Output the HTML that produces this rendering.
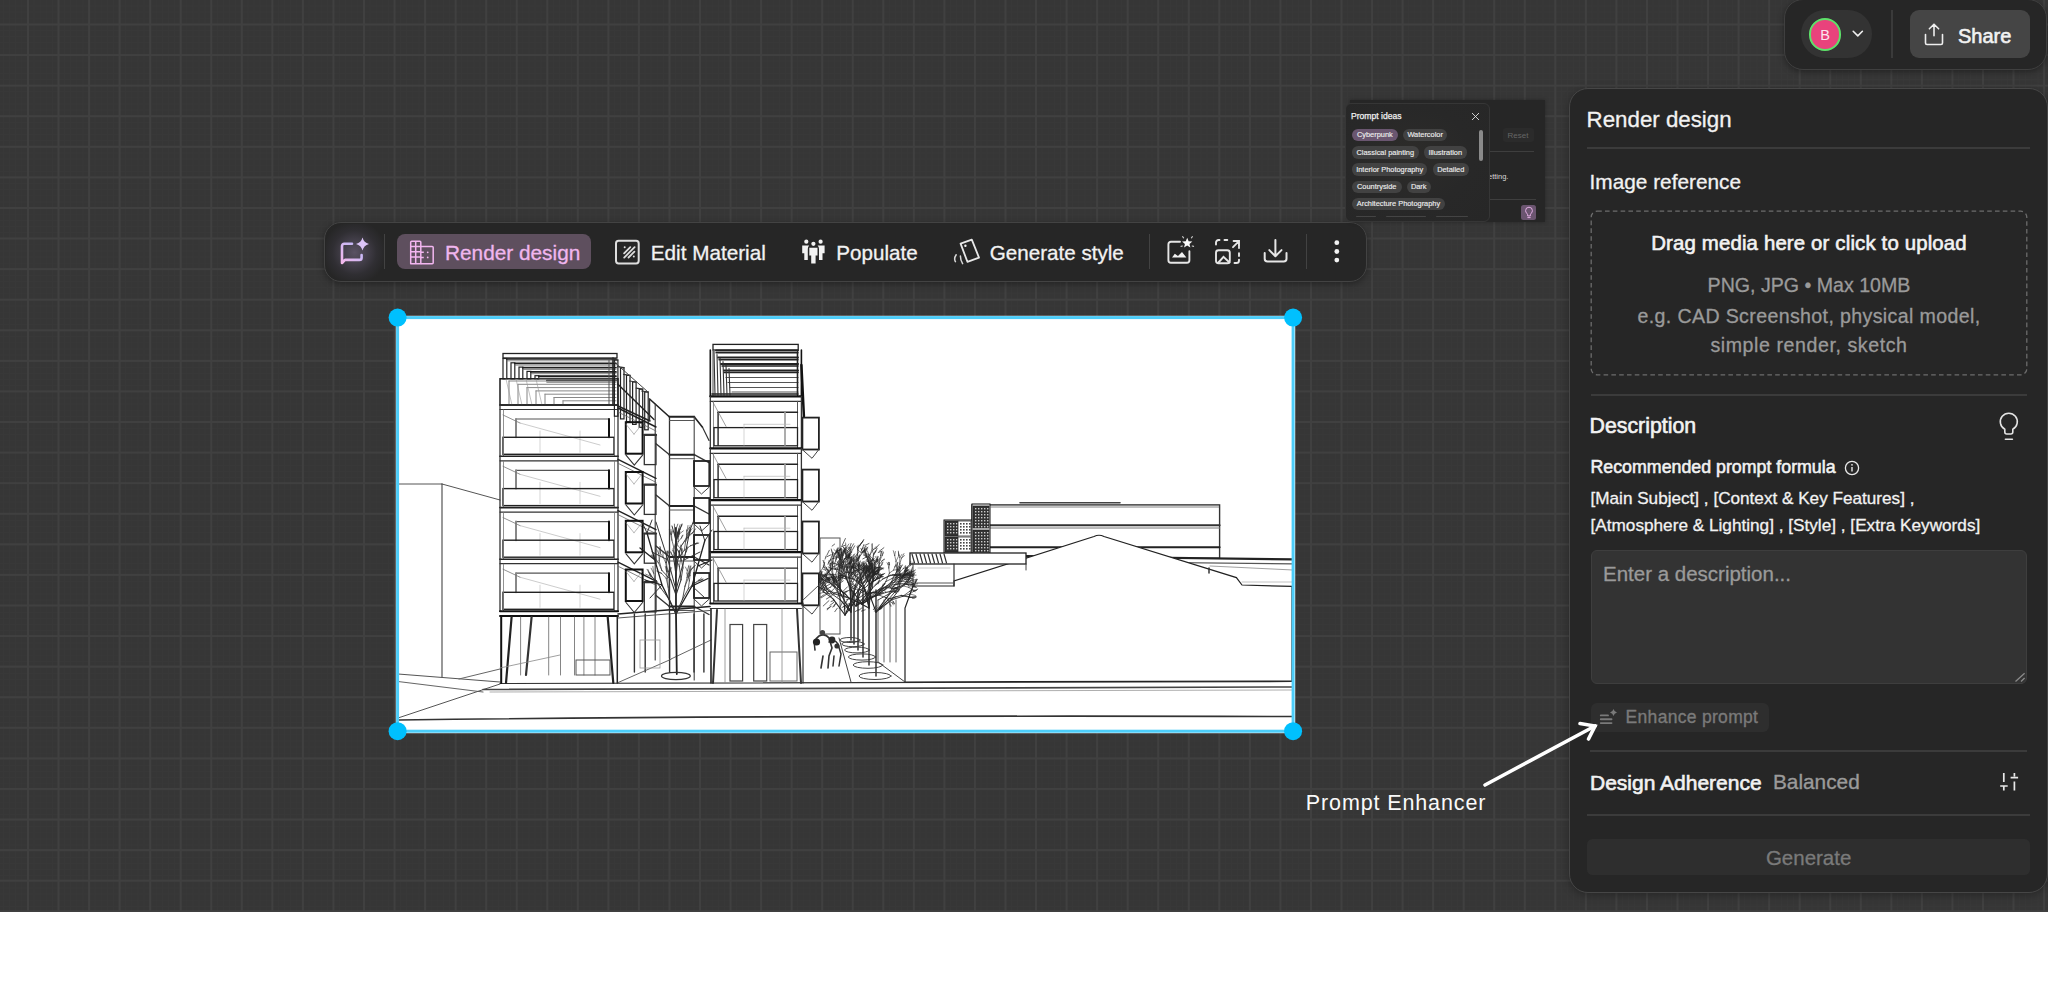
<!DOCTYPE html>
<html><head><meta charset="utf-8">
<style>
html,body{margin:0;padding:0;}
body{width:2048px;height:999px;position:relative;overflow:hidden;background:#fff;font-family:"Liberation Sans",sans-serif;}
.abs{position:absolute;}
#canvas{position:absolute;left:0;top:0;width:2048px;height:912px;background-color:#363636;
 background-image:linear-gradient(to right,#404040 0,#404040 2px,transparent 2px),linear-gradient(to bottom,#404040 0,#404040 2px,transparent 2px),linear-gradient(to right,#383838 0,#383838 1px,transparent 1px),linear-gradient(to bottom,#383838 0,#383838 1px,transparent 1px);
 background-size:30.546875px 30.578125px,30.546875px 30.578125px,6.109375px 6.109375px,6.109375px 6.125px;background-position:27px 23.5px,27px 23.5px,27.5px 23.9px,27.5px 23.9px;}
.t{position:absolute;white-space:nowrap;line-height:1;}
.w{color:#f2f2f2;}
.g{color:#9a9a9a;}
.div{position:absolute;height:2px;background:#3b3b3b;}
</style></head><body>
<div id="canvas"></div>



<!-- image -->
<div class="abs" style="left:395.6px;top:315.6px;width:899.5px;height:417.6px;background:#fff;box-shadow:0 0 0 0.6px rgba(200,200,200,.5)"></div>
<svg class="abs" style="left:0;top:0" width="2048" height="999" viewBox="0 0 2048 999" stroke-linecap="round">
<g>
<line x1="397.0" y1="484.0" x2="442.0" y2="484.0" stroke="#555" stroke-width="1"/>
<line x1="442.0" y1="484.0" x2="500.0" y2="500.0" stroke="#555" stroke-width="1"/>
<line x1="442.0" y1="484.0" x2="442.0" y2="677.0" stroke="#444" stroke-width="1.1"/>
<line x1="398.0" y1="674.0" x2="500.0" y2="682.0" stroke="#555" stroke-width="1.2"/>
<line x1="398.0" y1="681.5" x2="483.0" y2="692.0" stroke="#666" stroke-width="1.2"/>
<line x1="398.0" y1="718.0" x2="500.0" y2="684.0" stroke="#555" stroke-width="1"/>
<line x1="459.0" y1="679.0" x2="500.0" y2="669.0" stroke="#666" stroke-width="1"/>
<line x1="500.0" y1="683.5" x2="1293.0" y2="681.5" stroke="#333" stroke-width="1.2"/>
<line x1="483.0" y1="689.5" x2="1293.0" y2="687.0" stroke="#444" stroke-width="1.6"/>
<line x1="490.0" y1="692.0" x2="1293.0" y2="690.0" stroke="#999" stroke-width="0.8"/>
<path d="M398 720 Q 800 715 1292 716.5" stroke="#333" stroke-width="1.6" fill="none"/>
<rect x="503.0" y="353.5" width="114.0" height="4.5" stroke="#222" stroke-width="1.3" fill="none"/>
<rect x="500.0" y="378.8" width="118.0" height="26.2" stroke="#1a1a1a" stroke-width="1.5" fill="none"/>
<rect x="503.0" y="358.5" width="3.8" height="20.3" stroke="#222" stroke-width="1.2" fill="none"/>
<line x1="506.8" y1="359.0" x2="616.0" y2="359.0" stroke="#1e1e1e" stroke-width="1.7"/>
<line x1="506.8" y1="360.8" x2="616.0" y2="360.8" stroke="#666" stroke-width="0.8"/>
<rect x="511.0" y="362.8" width="3.8" height="16.0" stroke="#222" stroke-width="1.2" fill="none"/>
<line x1="514.8" y1="363.3" x2="616.0" y2="363.3" stroke="#1e1e1e" stroke-width="1.7"/>
<line x1="514.8" y1="365.1" x2="616.0" y2="365.1" stroke="#666" stroke-width="0.8"/>
<rect x="519.0" y="367.1" width="3.8" height="11.7" stroke="#222" stroke-width="1.2" fill="none"/>
<line x1="522.8" y1="367.6" x2="616.0" y2="367.6" stroke="#1e1e1e" stroke-width="1.7"/>
<line x1="522.8" y1="369.4" x2="616.0" y2="369.4" stroke="#666" stroke-width="0.8"/>
<rect x="527.0" y="371.4" width="3.8" height="7.4" stroke="#222" stroke-width="1.2" fill="none"/>
<line x1="530.8" y1="371.9" x2="616.0" y2="371.9" stroke="#1e1e1e" stroke-width="1.7"/>
<line x1="530.8" y1="373.7" x2="616.0" y2="373.7" stroke="#666" stroke-width="0.8"/>
<rect x="535.0" y="375.7" width="3.8" height="3.1" stroke="#222" stroke-width="1.2" fill="none"/>
<line x1="538.8" y1="376.2" x2="616.0" y2="376.2" stroke="#1e1e1e" stroke-width="1.7"/>
<line x1="538.8" y1="378.0" x2="616.0" y2="378.0" stroke="#666" stroke-width="0.8"/>
<rect x="543.0" y="380.0" width="3.8" height="0.0" stroke="#222" stroke-width="1.2" fill="none"/>
<line x1="546.8" y1="380.5" x2="616.0" y2="380.5" stroke="#1e1e1e" stroke-width="1.7"/>
<line x1="546.8" y1="382.3" x2="616.0" y2="382.3" stroke="#666" stroke-width="0.8"/>
<line x1="509.0" y1="381.0" x2="509.0" y2="405.0" stroke="#777" stroke-width="0.9"/>
<line x1="509.0" y1="381.0" x2="616.0" y2="381.0" stroke="#888" stroke-width="1.0"/>
<line x1="518.0" y1="384.3" x2="518.0" y2="405.0" stroke="#777" stroke-width="0.9"/>
<line x1="518.0" y1="384.3" x2="616.0" y2="384.3" stroke="#888" stroke-width="1.0"/>
<line x1="527.0" y1="387.6" x2="527.0" y2="405.0" stroke="#777" stroke-width="0.9"/>
<line x1="527.0" y1="387.6" x2="616.0" y2="387.6" stroke="#888" stroke-width="1.0"/>
<line x1="536.0" y1="390.9" x2="536.0" y2="405.0" stroke="#777" stroke-width="0.9"/>
<line x1="536.0" y1="390.9" x2="616.0" y2="390.9" stroke="#888" stroke-width="1.0"/>
<line x1="545.0" y1="394.2" x2="545.0" y2="405.0" stroke="#777" stroke-width="0.9"/>
<line x1="545.0" y1="394.2" x2="616.0" y2="394.2" stroke="#888" stroke-width="1.0"/>
<line x1="554.0" y1="397.5" x2="554.0" y2="405.0" stroke="#777" stroke-width="0.9"/>
<line x1="554.0" y1="397.5" x2="616.0" y2="397.5" stroke="#888" stroke-width="1.0"/>
<line x1="563.0" y1="400.8" x2="563.0" y2="405.0" stroke="#777" stroke-width="0.9"/>
<line x1="563.0" y1="400.8" x2="616.0" y2="400.8" stroke="#888" stroke-width="1.0"/>
<line x1="613.0" y1="358.0" x2="613.0" y2="405.0" stroke="#222" stroke-width="1.6"/>
<line x1="609.0" y1="360.0" x2="609.0" y2="405.0" stroke="#555" stroke-width="1.0"/>
<line x1="506.0" y1="379.0" x2="512.0" y2="405.0" stroke="#999" stroke-width="0.6"/>
<line x1="516.0" y1="379.0" x2="522.0" y2="405.0" stroke="#999" stroke-width="0.6"/>
<line x1="526.0" y1="379.0" x2="532.0" y2="405.0" stroke="#999" stroke-width="0.6"/>
<line x1="536.0" y1="379.0" x2="542.0" y2="405.0" stroke="#999" stroke-width="0.6"/>
<line x1="500.0" y1="405.0" x2="618.0" y2="405.0" stroke="#222" stroke-width="1.6"/>
<line x1="500.0" y1="409.5" x2="618.0" y2="409.5" stroke="#333" stroke-width="1.2"/>
<line x1="516.0" y1="419.0" x2="609.0" y2="419.0" stroke="#555" stroke-width="1.2"/>
<line x1="516.0" y1="419.0" x2="516.0" y2="437.3" stroke="#888" stroke-width="2"/>
<line x1="609.0" y1="419.0" x2="609.0" y2="437.3" stroke="#111" stroke-width="2"/>
<line x1="503.0" y1="415.0" x2="520.0" y2="423.0" stroke="#777" stroke-width="0.8"/>
<line x1="520.0" y1="423.0" x2="600.0" y2="445.0" stroke="#aaa" stroke-width="0.6"/>
<line x1="580.0" y1="431.0" x2="580.0" y2="452.3" stroke="#b8b8b8" stroke-width="0.6"/>
<line x1="540.0" y1="431.0" x2="540.0" y2="452.3" stroke="#b8b8b8" stroke-width="0.6"/>
<rect x="503.0" y="437.3" width="111.0" height="17.0" stroke="#222" stroke-width="1.4" fill="none"/>
<line x1="500.0" y1="405.0" x2="500.0" y2="456.3" stroke="#333" stroke-width="1.3"/>
<line x1="618.0" y1="405.0" x2="618.0" y2="456.3" stroke="#333" stroke-width="1.3"/>
<line x1="503.5" y1="410.0" x2="503.5" y2="456.3" stroke="#777" stroke-width="0.8"/>
<line x1="614.5" y1="410.0" x2="614.5" y2="456.3" stroke="#777" stroke-width="0.8"/>
<line x1="500.0" y1="456.3" x2="618.0" y2="456.3" stroke="#222" stroke-width="1.6"/>
<line x1="500.0" y1="460.8" x2="618.0" y2="460.8" stroke="#333" stroke-width="1.2"/>
<line x1="516.0" y1="470.3" x2="609.0" y2="470.3" stroke="#555" stroke-width="1.2"/>
<line x1="516.0" y1="470.3" x2="516.0" y2="488.6" stroke="#888" stroke-width="2"/>
<line x1="609.0" y1="470.3" x2="609.0" y2="488.6" stroke="#111" stroke-width="2"/>
<line x1="503.0" y1="466.3" x2="520.0" y2="474.3" stroke="#777" stroke-width="0.8"/>
<line x1="520.0" y1="474.3" x2="600.0" y2="496.3" stroke="#aaa" stroke-width="0.6"/>
<line x1="580.0" y1="482.3" x2="580.0" y2="503.6" stroke="#b8b8b8" stroke-width="0.6"/>
<line x1="540.0" y1="482.3" x2="540.0" y2="503.6" stroke="#b8b8b8" stroke-width="0.6"/>
<rect x="503.0" y="488.6" width="111.0" height="17.0" stroke="#222" stroke-width="1.4" fill="none"/>
<line x1="500.0" y1="456.3" x2="500.0" y2="507.6" stroke="#333" stroke-width="1.3"/>
<line x1="618.0" y1="456.3" x2="618.0" y2="507.6" stroke="#333" stroke-width="1.3"/>
<line x1="503.5" y1="461.3" x2="503.5" y2="507.6" stroke="#777" stroke-width="0.8"/>
<line x1="614.5" y1="461.3" x2="614.5" y2="507.6" stroke="#777" stroke-width="0.8"/>
<line x1="500.0" y1="507.6" x2="618.0" y2="507.6" stroke="#222" stroke-width="1.6"/>
<line x1="500.0" y1="512.1" x2="618.0" y2="512.1" stroke="#333" stroke-width="1.2"/>
<line x1="516.0" y1="521.6" x2="609.0" y2="521.6" stroke="#555" stroke-width="1.2"/>
<line x1="516.0" y1="521.6" x2="516.0" y2="540.2" stroke="#888" stroke-width="2"/>
<line x1="609.0" y1="521.6" x2="609.0" y2="540.2" stroke="#111" stroke-width="2"/>
<line x1="503.0" y1="517.6" x2="520.0" y2="525.6" stroke="#777" stroke-width="0.8"/>
<line x1="520.0" y1="525.6" x2="600.0" y2="547.6" stroke="#aaa" stroke-width="0.6"/>
<line x1="580.0" y1="533.6" x2="580.0" y2="555.2" stroke="#b8b8b8" stroke-width="0.6"/>
<line x1="540.0" y1="533.6" x2="540.0" y2="555.2" stroke="#b8b8b8" stroke-width="0.6"/>
<rect x="503.0" y="540.2" width="111.0" height="17.0" stroke="#222" stroke-width="1.4" fill="none"/>
<line x1="500.0" y1="507.6" x2="500.0" y2="559.2" stroke="#333" stroke-width="1.3"/>
<line x1="618.0" y1="507.6" x2="618.0" y2="559.2" stroke="#333" stroke-width="1.3"/>
<line x1="503.5" y1="512.6" x2="503.5" y2="559.2" stroke="#777" stroke-width="0.8"/>
<line x1="614.5" y1="512.6" x2="614.5" y2="559.2" stroke="#777" stroke-width="0.8"/>
<line x1="500.0" y1="559.2" x2="618.0" y2="559.2" stroke="#222" stroke-width="1.6"/>
<line x1="500.0" y1="563.7" x2="618.0" y2="563.7" stroke="#333" stroke-width="1.2"/>
<line x1="516.0" y1="573.2" x2="609.0" y2="573.2" stroke="#555" stroke-width="1.2"/>
<line x1="516.0" y1="573.2" x2="516.0" y2="592.3" stroke="#888" stroke-width="2"/>
<line x1="609.0" y1="573.2" x2="609.0" y2="592.3" stroke="#111" stroke-width="2"/>
<line x1="503.0" y1="569.2" x2="520.0" y2="577.2" stroke="#777" stroke-width="0.8"/>
<line x1="520.0" y1="577.2" x2="600.0" y2="599.2" stroke="#aaa" stroke-width="0.6"/>
<line x1="580.0" y1="585.2" x2="580.0" y2="607.3" stroke="#b8b8b8" stroke-width="0.6"/>
<line x1="540.0" y1="585.2" x2="540.0" y2="607.3" stroke="#b8b8b8" stroke-width="0.6"/>
<rect x="503.0" y="592.3" width="111.0" height="17.0" stroke="#222" stroke-width="1.4" fill="none"/>
<line x1="500.0" y1="559.2" x2="500.0" y2="611.3" stroke="#333" stroke-width="1.3"/>
<line x1="618.0" y1="559.2" x2="618.0" y2="611.3" stroke="#333" stroke-width="1.3"/>
<line x1="503.5" y1="564.2" x2="503.5" y2="611.3" stroke="#777" stroke-width="0.8"/>
<line x1="614.5" y1="564.2" x2="614.5" y2="611.3" stroke="#777" stroke-width="0.8"/>
<line x1="500.0" y1="611.3" x2="618.0" y2="611.3" stroke="#111" stroke-width="2"/>
<line x1="500.0" y1="616.0" x2="618.0" y2="616.0" stroke="#111" stroke-width="2"/>
<line x1="501.2" y1="616.0" x2="501.2" y2="683.0" stroke="#111" stroke-width="2"/>
<line x1="511.6" y1="617.0" x2="506.0" y2="683.0" stroke="#222" stroke-width="2.2"/>
<line x1="531.6" y1="617.0" x2="526.0" y2="675.0" stroke="#333" stroke-width="2.2"/>
<line x1="607.7" y1="617.0" x2="613.3" y2="683.0" stroke="#222" stroke-width="2.2"/>
<line x1="617.3" y1="616.0" x2="617.3" y2="683.0" stroke="#222" stroke-width="1.5"/>
<line x1="520.6" y1="617.0" x2="520.6" y2="675.0" stroke="#666" stroke-width="0.8"/>
<line x1="548.7" y1="617.0" x2="548.7" y2="675.0" stroke="#666" stroke-width="0.8"/>
<line x1="560.5" y1="617.0" x2="560.5" y2="675.0" stroke="#666" stroke-width="0.8"/>
<line x1="574.5" y1="617.0" x2="574.5" y2="675.0" stroke="#666" stroke-width="0.8"/>
<line x1="583.9" y1="617.0" x2="583.9" y2="675.0" stroke="#666" stroke-width="0.8"/>
<line x1="595.0" y1="617.0" x2="595.0" y2="675.0" stroke="#666" stroke-width="0.8"/>
<rect x="576.0" y="660.0" width="34.0" height="15.0" stroke="#555" stroke-width="1" fill="none"/>
<line x1="500.0" y1="668.0" x2="560.0" y2="655.0" stroke="#888" stroke-width="0.8"/>
<rect x="614.4" y="360.0" width="3.5" height="56.2" stroke="#222" stroke-width="1.2" fill="none"/>
<line x1="611.4" y1="359.0" x2="617.9" y2="360.0" stroke="#333" stroke-width="1.2"/>
<rect x="620.5" y="367.7" width="3.5" height="51.2" stroke="#222" stroke-width="1.2" fill="none"/>
<line x1="617.5" y1="366.7" x2="624.0" y2="367.7" stroke="#333" stroke-width="1.2"/>
<rect x="626.5" y="375.4" width="3.5" height="46.2" stroke="#222" stroke-width="1.2" fill="none"/>
<line x1="623.5" y1="374.4" x2="630.0" y2="375.4" stroke="#333" stroke-width="1.2"/>
<rect x="632.6" y="382.0" width="3.5" height="42.4" stroke="#222" stroke-width="1.2" fill="none"/>
<line x1="629.6" y1="381.0" x2="636.1" y2="382.0" stroke="#333" stroke-width="1.2"/>
<rect x="639.2" y="389.2" width="3.5" height="38.1" stroke="#222" stroke-width="1.2" fill="none"/>
<line x1="636.2" y1="388.2" x2="642.7" y2="389.2" stroke="#333" stroke-width="1.2"/>
<rect x="644.7" y="392.0" width="3.5" height="37.8" stroke="#222" stroke-width="1.2" fill="none"/>
<line x1="641.7" y1="391.0" x2="648.2" y2="392.0" stroke="#333" stroke-width="1.2"/>
<line x1="617.7" y1="384.0" x2="654.0" y2="419.5" stroke="#222" stroke-width="1.4"/>
<line x1="618.0" y1="406.0" x2="650.0" y2="421.0" stroke="#222" stroke-width="1.6"/>
<line x1="612.0" y1="360.0" x2="648.0" y2="392.0" stroke="#444" stroke-width="1.0"/>
<line x1="649.6" y1="399.0" x2="669.0" y2="416.5" stroke="#222" stroke-width="1.6"/>
<line x1="649.6" y1="399.0" x2="649.6" y2="420.0" stroke="#333" stroke-width="1.2"/>
<line x1="655.2" y1="404.0" x2="655.2" y2="660.0" stroke="#333" stroke-width="1.1"/>
<line x1="669.5" y1="416.5" x2="669.5" y2="658.0" stroke="#333" stroke-width="1.3"/>
<line x1="669.5" y1="416.7" x2="694.2" y2="416.7" stroke="#222" stroke-width="2"/>
<line x1="669.5" y1="420.5" x2="694.2" y2="420.5" stroke="#555" stroke-width="1"/>
<line x1="694.2" y1="416.7" x2="702.5" y2="427.2" stroke="#222" stroke-width="1.6"/>
<line x1="702.5" y1="427.2" x2="709.0" y2="440.4" stroke="#333" stroke-width="1.2"/>
<line x1="694.2" y1="416.7" x2="694.2" y2="680.0" stroke="#444" stroke-width="1.1"/>
<line x1="669.5" y1="454.7" x2="694.2" y2="454.7" stroke="#222" stroke-width="2"/>
<line x1="669.5" y1="458.7" x2="694.2" y2="458.7" stroke="#555" stroke-width="1"/>
<line x1="694.2" y1="454.7" x2="709.0" y2="462.7" stroke="#333" stroke-width="1.4"/>
<line x1="656.0" y1="443.7" x2="669.5" y2="454.7" stroke="#333" stroke-width="1.4"/>
<line x1="669.5" y1="506.0" x2="694.2" y2="506.0" stroke="#222" stroke-width="2"/>
<line x1="669.5" y1="510.0" x2="694.2" y2="510.0" stroke="#555" stroke-width="1"/>
<line x1="694.2" y1="506.0" x2="709.0" y2="514.0" stroke="#333" stroke-width="1.4"/>
<line x1="656.0" y1="495.0" x2="669.5" y2="506.0" stroke="#333" stroke-width="1.4"/>
<line x1="669.5" y1="557.0" x2="694.2" y2="557.0" stroke="#222" stroke-width="2"/>
<line x1="669.5" y1="561.0" x2="694.2" y2="561.0" stroke="#555" stroke-width="1"/>
<line x1="694.2" y1="557.0" x2="709.0" y2="565.0" stroke="#333" stroke-width="1.4"/>
<line x1="656.0" y1="546.0" x2="669.5" y2="557.0" stroke="#333" stroke-width="1.4"/>
<line x1="669.5" y1="606.5" x2="694.2" y2="606.5" stroke="#222" stroke-width="2"/>
<line x1="669.5" y1="610.5" x2="694.2" y2="610.5" stroke="#555" stroke-width="1"/>
<line x1="694.2" y1="606.5" x2="709.0" y2="614.5" stroke="#333" stroke-width="1.4"/>
<line x1="656.0" y1="595.5" x2="669.5" y2="606.5" stroke="#333" stroke-width="1.4"/>
<line x1="618.0" y1="408.0" x2="656.0" y2="427.0" stroke="#222" stroke-width="1.5"/>
<line x1="618.0" y1="412.0" x2="656.0" y2="431.0" stroke="#666" stroke-width="0.8"/>
<line x1="618.0" y1="459.3" x2="656.0" y2="478.3" stroke="#222" stroke-width="1.5"/>
<line x1="618.0" y1="463.3" x2="656.0" y2="482.3" stroke="#666" stroke-width="0.8"/>
<line x1="618.0" y1="510.6" x2="656.0" y2="529.6" stroke="#222" stroke-width="1.5"/>
<line x1="618.0" y1="514.6" x2="656.0" y2="533.6" stroke="#666" stroke-width="0.8"/>
<line x1="618.0" y1="562.2" x2="656.0" y2="581.2" stroke="#222" stroke-width="1.5"/>
<line x1="618.0" y1="566.2" x2="656.0" y2="585.2" stroke="#666" stroke-width="0.8"/>
<line x1="618.0" y1="614.0" x2="710.0" y2="606.5" stroke="#222" stroke-width="1.6"/>
<line x1="618.0" y1="618.0" x2="710.0" y2="610.5" stroke="#555" stroke-width="1.0"/>
<rect x="625.8" y="422.2" width="16.8" height="31.5" stroke="#111" stroke-width="2" fill="none"/>
<line x1="626.0" y1="424.2" x2="634.0" y2="434.2" stroke="#888" stroke-width="0.6"/>
<line x1="642.0" y1="424.2" x2="634.0" y2="434.2" stroke="#888" stroke-width="0.6"/>
<path d="M626 455.2 L634.3 465.2 L642.6 455.2" stroke="#333" stroke-width="1.1" fill="none"/>
<rect x="644.3" y="434.9" width="11.7" height="29.7" stroke="#333" stroke-width="1.3" fill="none"/>
<line x1="644.3" y1="434.9" x2="656.0" y2="434.9" stroke="#333" stroke-width="2.2"/>
<rect x="625.8" y="472.0" width="16.8" height="31.5" stroke="#111" stroke-width="2" fill="none"/>
<line x1="626.0" y1="474.0" x2="634.0" y2="484.0" stroke="#888" stroke-width="0.6"/>
<line x1="642.0" y1="474.0" x2="634.0" y2="484.0" stroke="#888" stroke-width="0.6"/>
<path d="M626 505.0 L634.3 515.0 L642.6 505.0" stroke="#333" stroke-width="1.1" fill="none"/>
<rect x="644.3" y="484.7" width="11.7" height="29.7" stroke="#333" stroke-width="1.3" fill="none"/>
<line x1="644.3" y1="484.7" x2="656.0" y2="484.7" stroke="#333" stroke-width="2.2"/>
<rect x="625.8" y="520.8" width="16.8" height="31.5" stroke="#111" stroke-width="2" fill="none"/>
<line x1="626.0" y1="522.8" x2="634.0" y2="532.8" stroke="#888" stroke-width="0.6"/>
<line x1="642.0" y1="522.8" x2="634.0" y2="532.8" stroke="#888" stroke-width="0.6"/>
<path d="M626 553.8 L634.3 563.8 L642.6 553.8" stroke="#333" stroke-width="1.1" fill="none"/>
<rect x="644.3" y="533.5" width="11.7" height="29.7" stroke="#333" stroke-width="1.3" fill="none"/>
<line x1="644.3" y1="533.5" x2="656.0" y2="533.5" stroke="#333" stroke-width="2.2"/>
<rect x="625.8" y="569.5" width="16.8" height="31.5" stroke="#111" stroke-width="2" fill="none"/>
<line x1="626.0" y1="571.5" x2="634.0" y2="581.5" stroke="#888" stroke-width="0.6"/>
<line x1="642.0" y1="571.5" x2="634.0" y2="581.5" stroke="#888" stroke-width="0.6"/>
<path d="M626 602.5 L634.3 612.5 L642.6 602.5" stroke="#333" stroke-width="1.1" fill="none"/>
<rect x="644.3" y="582.2" width="11.7" height="29.7" stroke="#333" stroke-width="1.3" fill="none"/>
<line x1="644.3" y1="582.2" x2="656.0" y2="582.2" stroke="#333" stroke-width="2.2"/>
<rect x="694.0" y="461.0" width="15.3" height="25.0" stroke="#222" stroke-width="1.8" fill="none"/>
<path d="M694 487.0 L701.5 494.0 L709.3 487.0" stroke="#444" stroke-width="1" fill="none"/>
<rect x="694.0" y="498.0" width="15.3" height="25.0" stroke="#222" stroke-width="1.8" fill="none"/>
<path d="M694 524.0 L701.5 531.0 L709.3 524.0" stroke="#444" stroke-width="1" fill="none"/>
<rect x="694.0" y="535.0" width="15.3" height="25.0" stroke="#222" stroke-width="1.8" fill="none"/>
<path d="M694 561.0 L701.5 568.0 L709.3 561.0" stroke="#444" stroke-width="1" fill="none"/>
<rect x="694.0" y="573.0" width="15.3" height="25.0" stroke="#222" stroke-width="1.8" fill="none"/>
<path d="M694 599.0 L701.5 606.0 L709.3 599.0" stroke="#444" stroke-width="1" fill="none"/>
<line x1="634.4" y1="614.0" x2="634.4" y2="672.0" stroke="#333" stroke-width="1.4"/>
<line x1="645.2" y1="614.0" x2="645.2" y2="672.0" stroke="#333" stroke-width="1.4"/>
<line x1="669.6" y1="614.0" x2="669.6" y2="672.0" stroke="#333" stroke-width="1.4"/>
<line x1="694.0" y1="614.0" x2="694.0" y2="672.0" stroke="#333" stroke-width="1.4"/>
<line x1="703.9" y1="614.0" x2="703.9" y2="672.0" stroke="#333" stroke-width="1.4"/>
<line x1="618.0" y1="682.6" x2="671.0" y2="659.3" stroke="#555" stroke-width="0.9"/>
<line x1="671.0" y1="659.0" x2="711.0" y2="640.0" stroke="#555" stroke-width="0.9"/>
<rect x="640.0" y="640.0" width="20.0" height="28.0" stroke="#999" stroke-width="0.8" fill="none"/>
<path d="M676.8 674 L676 614 L675.9 528" stroke="#222" stroke-width="1.8" fill="none"/>
<path d="M676 614 L662 585 L647 533 M662 585 L645 580 M655 560 L640 548 M676 614 L692 586 L704.8 540.7 M692 586 L708 578.5 M698 566 L712 560" stroke="#222" stroke-width="1.3" fill="none"/>
<path d="M676 590 L668 560 L660 535 M676 590 L684 560 L690 530 M676 570 L676 540 M668 560 L652 552 M684 560 L700 552 M647 533 L642 522 M647 533 L652 520 M704.8 540.7 L712 530 M704.8 540.7 L700 526 M690 530 L694 520 M660 535 L656 522 M676 540 L672 526 M676 540 L682 524 M662 585 L650 598 M692 586 L705 598" stroke="#333" stroke-width="1.0" fill="none"/>
<line x1="676.0" y1="614.0" x2="669.3" y2="599.5" stroke="#333" stroke-width="1.1"/>
<line x1="669.3" y1="599.5" x2="668.2" y2="587.1" stroke="#333" stroke-width="0.8800000000000001"/>
<line x1="668.2" y1="587.1" x2="666.2" y2="578.5" stroke="#333" stroke-width="0.7040000000000002"/>
<line x1="666.2" y1="578.5" x2="666.5" y2="571.4" stroke="#333" stroke-width="0.6"/>
<line x1="666.5" y1="571.4" x2="665.3" y2="566.4" stroke="#333" stroke-width="0.6"/>
<line x1="666.5" y1="571.4" x2="666.4" y2="567.0" stroke="#333" stroke-width="0.6"/>
<line x1="666.2" y1="578.5" x2="661.5" y2="573.3" stroke="#333" stroke-width="0.6"/>
<line x1="661.5" y1="573.3" x2="656.8" y2="570.9" stroke="#333" stroke-width="0.6"/>
<line x1="661.5" y1="573.3" x2="657.1" y2="571.4" stroke="#333" stroke-width="0.6"/>
<line x1="668.2" y1="587.1" x2="667.7" y2="578.0" stroke="#333" stroke-width="0.7040000000000002"/>
<line x1="667.7" y1="578.0" x2="668.5" y2="571.5" stroke="#333" stroke-width="0.6"/>
<line x1="668.5" y1="571.5" x2="670.1" y2="567.8" stroke="#333" stroke-width="0.6"/>
<line x1="668.5" y1="571.5" x2="666.6" y2="566.4" stroke="#333" stroke-width="0.6"/>
<line x1="667.7" y1="578.0" x2="669.9" y2="571.8" stroke="#333" stroke-width="0.6"/>
<line x1="669.9" y1="571.8" x2="669.9" y2="567.6" stroke="#333" stroke-width="0.6"/>
<line x1="669.9" y1="571.8" x2="671.6" y2="567.6" stroke="#333" stroke-width="0.6"/>
<line x1="669.3" y1="599.5" x2="661.2" y2="588.6" stroke="#333" stroke-width="0.8800000000000001"/>
<line x1="661.2" y1="588.6" x2="655.3" y2="580.8" stroke="#333" stroke-width="0.7040000000000002"/>
<line x1="655.3" y1="580.8" x2="650.3" y2="574.8" stroke="#333" stroke-width="0.6"/>
<line x1="650.3" y1="574.8" x2="648.0" y2="569.5" stroke="#333" stroke-width="0.6"/>
<line x1="650.3" y1="574.8" x2="647.0" y2="569.3" stroke="#333" stroke-width="0.6"/>
<line x1="655.3" y1="580.8" x2="653.6" y2="573.1" stroke="#333" stroke-width="0.6"/>
<line x1="653.6" y1="573.1" x2="651.1" y2="568.2" stroke="#333" stroke-width="0.6"/>
<line x1="653.6" y1="573.1" x2="652.9" y2="566.4" stroke="#333" stroke-width="0.6"/>
<line x1="661.2" y1="588.6" x2="656.7" y2="580.8" stroke="#333" stroke-width="0.7040000000000002"/>
<line x1="656.7" y1="580.8" x2="652.2" y2="577.3" stroke="#333" stroke-width="0.6"/>
<line x1="652.2" y1="577.3" x2="650.1" y2="573.1" stroke="#333" stroke-width="0.6"/>
<line x1="652.2" y1="577.3" x2="649.8" y2="574.2" stroke="#333" stroke-width="0.6"/>
<line x1="656.7" y1="580.8" x2="650.6" y2="576.3" stroke="#333" stroke-width="0.6"/>
<line x1="650.6" y1="576.3" x2="645.6" y2="574.1" stroke="#333" stroke-width="0.6"/>
<line x1="650.6" y1="576.3" x2="648.5" y2="571.8" stroke="#333" stroke-width="0.6"/>
<line x1="676.0" y1="614.0" x2="682.5" y2="599.4" stroke="#333" stroke-width="1.1"/>
<line x1="682.5" y1="599.4" x2="688.2" y2="588.9" stroke="#333" stroke-width="0.8800000000000001"/>
<line x1="688.2" y1="588.9" x2="689.4" y2="580.9" stroke="#333" stroke-width="0.7040000000000002"/>
<line x1="689.4" y1="580.9" x2="690.0" y2="575.5" stroke="#333" stroke-width="0.6"/>
<line x1="690.0" y1="575.5" x2="689.5" y2="572.3" stroke="#333" stroke-width="0.6"/>
<line x1="690.0" y1="575.5" x2="689.8" y2="571.2" stroke="#333" stroke-width="0.6"/>
<line x1="689.4" y1="580.9" x2="688.1" y2="576.0" stroke="#333" stroke-width="0.6"/>
<line x1="688.1" y1="576.0" x2="688.5" y2="572.8" stroke="#333" stroke-width="0.6"/>
<line x1="688.1" y1="576.0" x2="686.7" y2="573.0" stroke="#333" stroke-width="0.6"/>
<line x1="688.2" y1="588.9" x2="693.9" y2="583.7" stroke="#333" stroke-width="0.7040000000000002"/>
<line x1="693.9" y1="583.7" x2="698.7" y2="580.2" stroke="#333" stroke-width="0.6"/>
<line x1="698.7" y1="580.2" x2="701.6" y2="577.9" stroke="#333" stroke-width="0.6"/>
<line x1="698.7" y1="580.2" x2="703.0" y2="579.7" stroke="#333" stroke-width="0.6"/>
<line x1="693.9" y1="583.7" x2="699.1" y2="580.9" stroke="#333" stroke-width="0.6"/>
<line x1="699.1" y1="580.9" x2="702.6" y2="579.8" stroke="#333" stroke-width="0.6"/>
<line x1="699.1" y1="580.9" x2="703.0" y2="578.8" stroke="#333" stroke-width="0.6"/>
<line x1="682.5" y1="599.4" x2="685.0" y2="586.2" stroke="#333" stroke-width="0.8800000000000001"/>
<line x1="685.0" y1="586.2" x2="688.9" y2="576.5" stroke="#333" stroke-width="0.7040000000000002"/>
<line x1="688.9" y1="576.5" x2="691.5" y2="569.2" stroke="#333" stroke-width="0.6"/>
<line x1="691.5" y1="569.2" x2="695.9" y2="564.8" stroke="#333" stroke-width="0.6"/>
<line x1="691.5" y1="569.2" x2="694.7" y2="565.7" stroke="#333" stroke-width="0.6"/>
<line x1="688.9" y1="576.5" x2="690.5" y2="570.3" stroke="#333" stroke-width="0.6"/>
<line x1="690.5" y1="570.3" x2="690.9" y2="565.9" stroke="#333" stroke-width="0.6"/>
<line x1="690.5" y1="570.3" x2="693.4" y2="566.9" stroke="#333" stroke-width="0.6"/>
<line x1="685.0" y1="586.2" x2="687.1" y2="577.5" stroke="#333" stroke-width="0.7040000000000002"/>
<line x1="687.1" y1="577.5" x2="689.2" y2="571.5" stroke="#333" stroke-width="0.6"/>
<line x1="689.2" y1="571.5" x2="690.4" y2="566.2" stroke="#333" stroke-width="0.6"/>
<line x1="689.2" y1="571.5" x2="689.0" y2="566.4" stroke="#333" stroke-width="0.6"/>
<line x1="687.1" y1="577.5" x2="687.3" y2="570.7" stroke="#333" stroke-width="0.6"/>
<line x1="687.3" y1="570.7" x2="688.9" y2="565.2" stroke="#333" stroke-width="0.6"/>
<line x1="687.3" y1="570.7" x2="685.4" y2="567.0" stroke="#333" stroke-width="0.6"/>
<line x1="676.0" y1="595.0" x2="670.8" y2="579.9" stroke="#333" stroke-width="1.1"/>
<line x1="670.8" y1="579.9" x2="667.1" y2="570.7" stroke="#333" stroke-width="0.8800000000000001"/>
<line x1="667.1" y1="570.7" x2="665.6" y2="562.5" stroke="#333" stroke-width="0.7040000000000002"/>
<line x1="665.6" y1="562.5" x2="663.1" y2="557.1" stroke="#333" stroke-width="0.6"/>
<line x1="663.1" y1="557.1" x2="663.0" y2="552.1" stroke="#333" stroke-width="0.6"/>
<line x1="663.1" y1="557.1" x2="660.9" y2="553.9" stroke="#333" stroke-width="0.6"/>
<line x1="665.6" y1="562.5" x2="666.6" y2="556.2" stroke="#333" stroke-width="0.6"/>
<line x1="666.6" y1="556.2" x2="668.8" y2="551.9" stroke="#333" stroke-width="0.6"/>
<line x1="666.6" y1="556.2" x2="667.7" y2="551.5" stroke="#333" stroke-width="0.6"/>
<line x1="667.1" y1="570.7" x2="666.5" y2="562.3" stroke="#333" stroke-width="0.7040000000000002"/>
<line x1="666.5" y1="562.3" x2="669.1" y2="556.2" stroke="#333" stroke-width="0.6"/>
<line x1="669.1" y1="556.2" x2="668.9" y2="551.0" stroke="#333" stroke-width="0.6"/>
<line x1="669.1" y1="556.2" x2="670.0" y2="551.8" stroke="#333" stroke-width="0.6"/>
<line x1="666.5" y1="562.3" x2="666.4" y2="555.5" stroke="#333" stroke-width="0.6"/>
<line x1="666.4" y1="555.5" x2="666.8" y2="551.2" stroke="#333" stroke-width="0.6"/>
<line x1="666.4" y1="555.5" x2="667.7" y2="550.9" stroke="#333" stroke-width="0.6"/>
<line x1="670.8" y1="579.9" x2="661.8" y2="570.3" stroke="#333" stroke-width="0.8800000000000001"/>
<line x1="661.8" y1="570.3" x2="659.2" y2="560.9" stroke="#333" stroke-width="0.7040000000000002"/>
<line x1="659.2" y1="560.9" x2="660.4" y2="552.9" stroke="#333" stroke-width="0.6"/>
<line x1="660.4" y1="552.9" x2="659.8" y2="546.5" stroke="#333" stroke-width="0.6"/>
<line x1="660.4" y1="552.9" x2="660.5" y2="547.1" stroke="#333" stroke-width="0.6"/>
<line x1="659.2" y1="560.9" x2="658.7" y2="553.5" stroke="#333" stroke-width="0.6"/>
<line x1="658.7" y1="553.5" x2="656.7" y2="549.4" stroke="#333" stroke-width="0.6"/>
<line x1="658.7" y1="553.5" x2="659.4" y2="549.0" stroke="#333" stroke-width="0.6"/>
<line x1="661.8" y1="570.3" x2="658.5" y2="562.8" stroke="#333" stroke-width="0.7040000000000002"/>
<line x1="658.5" y1="562.8" x2="654.0" y2="558.7" stroke="#333" stroke-width="0.6"/>
<line x1="654.0" y1="558.7" x2="650.8" y2="555.3" stroke="#333" stroke-width="0.6"/>
<line x1="654.0" y1="558.7" x2="652.1" y2="555.6" stroke="#333" stroke-width="0.6"/>
<line x1="658.5" y1="562.8" x2="655.1" y2="557.9" stroke="#333" stroke-width="0.6"/>
<line x1="655.1" y1="557.9" x2="653.7" y2="553.3" stroke="#333" stroke-width="0.6"/>
<line x1="655.1" y1="557.9" x2="651.2" y2="554.9" stroke="#333" stroke-width="0.6"/>
<line x1="676.0" y1="595.0" x2="681.0" y2="579.8" stroke="#333" stroke-width="1.1"/>
<line x1="681.0" y1="579.8" x2="679.4" y2="566.6" stroke="#333" stroke-width="0.8800000000000001"/>
<line x1="679.4" y1="566.6" x2="676.2" y2="559.2" stroke="#333" stroke-width="0.7040000000000002"/>
<line x1="676.2" y1="559.2" x2="674.6" y2="553.4" stroke="#333" stroke-width="0.6"/>
<line x1="674.6" y1="553.4" x2="672.8" y2="548.9" stroke="#333" stroke-width="0.6"/>
<line x1="674.6" y1="553.4" x2="672.2" y2="550.2" stroke="#333" stroke-width="0.6"/>
<line x1="676.2" y1="559.2" x2="672.2" y2="555.3" stroke="#333" stroke-width="0.6"/>
<line x1="672.2" y1="555.3" x2="670.8" y2="551.7" stroke="#333" stroke-width="0.6"/>
<line x1="672.2" y1="555.3" x2="670.8" y2="552.3" stroke="#333" stroke-width="0.6"/>
<line x1="679.4" y1="566.6" x2="680.8" y2="558.3" stroke="#333" stroke-width="0.7040000000000002"/>
<line x1="680.8" y1="558.3" x2="679.3" y2="552.4" stroke="#333" stroke-width="0.6"/>
<line x1="679.3" y1="552.4" x2="676.6" y2="548.9" stroke="#333" stroke-width="0.6"/>
<line x1="679.3" y1="552.4" x2="676.8" y2="548.3" stroke="#333" stroke-width="0.6"/>
<line x1="680.8" y1="558.3" x2="681.8" y2="552.8" stroke="#333" stroke-width="0.6"/>
<line x1="681.8" y1="552.8" x2="682.4" y2="548.9" stroke="#333" stroke-width="0.6"/>
<line x1="681.8" y1="552.8" x2="681.6" y2="548.5" stroke="#333" stroke-width="0.6"/>
<line x1="681.0" y1="579.8" x2="682.9" y2="568.0" stroke="#333" stroke-width="0.8800000000000001"/>
<line x1="682.9" y1="568.0" x2="683.7" y2="557.9" stroke="#333" stroke-width="0.7040000000000002"/>
<line x1="683.7" y1="557.9" x2="686.2" y2="551.8" stroke="#333" stroke-width="0.6"/>
<line x1="686.2" y1="551.8" x2="687.0" y2="546.5" stroke="#333" stroke-width="0.6"/>
<line x1="686.2" y1="551.8" x2="688.0" y2="547.4" stroke="#333" stroke-width="0.6"/>
<line x1="683.7" y1="557.9" x2="681.5" y2="550.3" stroke="#333" stroke-width="0.6"/>
<line x1="681.5" y1="550.3" x2="680.6" y2="545.1" stroke="#333" stroke-width="0.6"/>
<line x1="681.5" y1="550.3" x2="677.6" y2="545.0" stroke="#333" stroke-width="0.6"/>
<line x1="682.9" y1="568.0" x2="681.5" y2="560.2" stroke="#333" stroke-width="0.7040000000000002"/>
<line x1="681.5" y1="560.2" x2="679.7" y2="555.2" stroke="#333" stroke-width="0.6"/>
<line x1="679.7" y1="555.2" x2="679.4" y2="551.7" stroke="#333" stroke-width="0.6"/>
<line x1="679.7" y1="555.2" x2="678.9" y2="551.2" stroke="#333" stroke-width="0.6"/>
<line x1="681.5" y1="560.2" x2="679.5" y2="555.0" stroke="#333" stroke-width="0.6"/>
<line x1="679.5" y1="555.0" x2="679.5" y2="550.4" stroke="#333" stroke-width="0.6"/>
<line x1="679.5" y1="555.0" x2="678.2" y2="551.1" stroke="#333" stroke-width="0.6"/>
<line x1="676.0" y1="575.0" x2="673.9" y2="559.1" stroke="#333" stroke-width="1.1"/>
<line x1="673.9" y1="559.1" x2="674.0" y2="548.1" stroke="#333" stroke-width="0.8800000000000001"/>
<line x1="674.0" y1="548.1" x2="671.9" y2="540.1" stroke="#333" stroke-width="0.7040000000000002"/>
<line x1="671.9" y1="540.1" x2="670.7" y2="534.1" stroke="#333" stroke-width="0.6"/>
<line x1="670.7" y1="534.1" x2="671.0" y2="529.3" stroke="#333" stroke-width="0.6"/>
<line x1="670.7" y1="534.1" x2="669.4" y2="529.8" stroke="#333" stroke-width="0.6"/>
<line x1="671.9" y1="540.1" x2="671.5" y2="534.4" stroke="#333" stroke-width="0.6"/>
<line x1="671.5" y1="534.4" x2="672.2" y2="531.0" stroke="#333" stroke-width="0.6"/>
<line x1="671.5" y1="534.4" x2="672.2" y2="530.9" stroke="#333" stroke-width="0.6"/>
<line x1="674.0" y1="548.1" x2="676.5" y2="540.0" stroke="#333" stroke-width="0.7040000000000002"/>
<line x1="676.5" y1="540.0" x2="677.9" y2="534.9" stroke="#333" stroke-width="0.6"/>
<line x1="677.9" y1="534.9" x2="679.9" y2="531.5" stroke="#333" stroke-width="0.6"/>
<line x1="677.9" y1="534.9" x2="678.9" y2="531.0" stroke="#333" stroke-width="0.6"/>
<line x1="676.5" y1="540.0" x2="679.4" y2="533.9" stroke="#333" stroke-width="0.6"/>
<line x1="679.4" y1="533.9" x2="683.3" y2="530.9" stroke="#333" stroke-width="0.6"/>
<line x1="679.4" y1="533.9" x2="679.5" y2="529.7" stroke="#333" stroke-width="0.6"/>
<line x1="673.9" y1="559.1" x2="676.2" y2="548.4" stroke="#333" stroke-width="0.8800000000000001"/>
<line x1="676.2" y1="548.4" x2="676.5" y2="540.0" stroke="#333" stroke-width="0.7040000000000002"/>
<line x1="676.5" y1="540.0" x2="677.6" y2="533.4" stroke="#333" stroke-width="0.6"/>
<line x1="677.6" y1="533.4" x2="680.1" y2="529.7" stroke="#333" stroke-width="0.6"/>
<line x1="677.6" y1="533.4" x2="679.8" y2="529.4" stroke="#333" stroke-width="0.6"/>
<line x1="676.5" y1="540.0" x2="677.7" y2="533.3" stroke="#333" stroke-width="0.6"/>
<line x1="677.7" y1="533.3" x2="679.0" y2="528.2" stroke="#333" stroke-width="0.6"/>
<line x1="677.7" y1="533.3" x2="679.9" y2="528.9" stroke="#333" stroke-width="0.6"/>
<line x1="676.2" y1="548.4" x2="678.2" y2="541.6" stroke="#333" stroke-width="0.7040000000000002"/>
<line x1="678.2" y1="541.6" x2="681.3" y2="538.1" stroke="#333" stroke-width="0.6"/>
<line x1="681.3" y1="538.1" x2="682.5" y2="535.2" stroke="#333" stroke-width="0.6"/>
<line x1="681.3" y1="538.1" x2="683.0" y2="535.2" stroke="#333" stroke-width="0.6"/>
<line x1="678.2" y1="541.6" x2="678.6" y2="536.4" stroke="#333" stroke-width="0.6"/>
<line x1="678.6" y1="536.4" x2="679.7" y2="532.4" stroke="#333" stroke-width="0.6"/>
<line x1="678.6" y1="536.4" x2="678.3" y2="532.1" stroke="#333" stroke-width="0.6"/>
<line x1="676.0" y1="575.0" x2="677.9" y2="559.1" stroke="#333" stroke-width="1.1"/>
<line x1="677.9" y1="559.1" x2="681.2" y2="546.0" stroke="#333" stroke-width="0.8800000000000001"/>
<line x1="681.2" y1="546.0" x2="686.3" y2="538.1" stroke="#333" stroke-width="0.7040000000000002"/>
<line x1="686.3" y1="538.1" x2="689.0" y2="532.4" stroke="#333" stroke-width="0.6"/>
<line x1="689.0" y1="532.4" x2="692.2" y2="528.5" stroke="#333" stroke-width="0.6"/>
<line x1="689.0" y1="532.4" x2="689.3" y2="527.3" stroke="#333" stroke-width="0.6"/>
<line x1="686.3" y1="538.1" x2="687.0" y2="530.9" stroke="#333" stroke-width="0.6"/>
<line x1="687.0" y1="530.9" x2="688.0" y2="525.5" stroke="#333" stroke-width="0.6"/>
<line x1="687.0" y1="530.9" x2="689.6" y2="527.2" stroke="#333" stroke-width="0.6"/>
<line x1="681.2" y1="546.0" x2="686.9" y2="538.1" stroke="#333" stroke-width="0.7040000000000002"/>
<line x1="686.9" y1="538.1" x2="692.1" y2="533.4" stroke="#333" stroke-width="0.6"/>
<line x1="692.1" y1="533.4" x2="695.0" y2="529.4" stroke="#333" stroke-width="0.6"/>
<line x1="692.1" y1="533.4" x2="695.5" y2="528.8" stroke="#333" stroke-width="0.6"/>
<line x1="686.9" y1="538.1" x2="690.2" y2="530.8" stroke="#333" stroke-width="0.6"/>
<line x1="690.2" y1="530.8" x2="690.2" y2="525.3" stroke="#333" stroke-width="0.6"/>
<line x1="677.9" y1="559.1" x2="684.3" y2="550.2" stroke="#333" stroke-width="0.8800000000000001"/>
<line x1="684.3" y1="550.2" x2="690.4" y2="545.8" stroke="#333" stroke-width="0.7040000000000002"/>
<line x1="690.4" y1="545.8" x2="694.7" y2="544.3" stroke="#333" stroke-width="0.6"/>
<line x1="694.7" y1="544.3" x2="697.1" y2="542.6" stroke="#333" stroke-width="0.6"/>
<line x1="694.7" y1="544.3" x2="697.3" y2="543.0" stroke="#333" stroke-width="0.6"/>
<line x1="690.4" y1="545.8" x2="695.0" y2="544.0" stroke="#333" stroke-width="0.6"/>
<line x1="695.0" y1="544.0" x2="698.8" y2="543.0" stroke="#333" stroke-width="0.6"/>
<line x1="695.0" y1="544.0" x2="698.2" y2="543.4" stroke="#333" stroke-width="0.6"/>
<line x1="684.3" y1="550.2" x2="685.7" y2="541.2" stroke="#333" stroke-width="0.7040000000000002"/>
<line x1="685.7" y1="541.2" x2="687.0" y2="534.3" stroke="#333" stroke-width="0.6"/>
<line x1="687.0" y1="534.3" x2="686.6" y2="529.8" stroke="#333" stroke-width="0.6"/>
<line x1="687.0" y1="534.3" x2="690.1" y2="529.8" stroke="#333" stroke-width="0.6"/>
<line x1="685.7" y1="541.2" x2="689.3" y2="534.9" stroke="#333" stroke-width="0.6"/>
<line x1="689.3" y1="534.9" x2="690.7" y2="530.7" stroke="#333" stroke-width="0.6"/>
<line x1="689.3" y1="534.9" x2="694.4" y2="531.5" stroke="#333" stroke-width="0.6"/>
<line x1="676.0" y1="560.0" x2="676.0" y2="544.0" stroke="#333" stroke-width="1.1"/>
<line x1="676.0" y1="544.0" x2="674.8" y2="532.9" stroke="#333" stroke-width="0.8800000000000001"/>
<line x1="674.8" y1="532.9" x2="674.4" y2="524.1" stroke="#333" stroke-width="0.7040000000000002"/>
<line x1="674.8" y1="532.9" x2="677.8" y2="524.1" stroke="#333" stroke-width="0.7040000000000002"/>
<line x1="676.0" y1="544.0" x2="677.7" y2="532.4" stroke="#333" stroke-width="0.8800000000000001"/>
<line x1="677.7" y1="532.4" x2="682.1" y2="525.0" stroke="#333" stroke-width="0.7040000000000002"/>
<line x1="677.7" y1="532.4" x2="680.1" y2="524.8" stroke="#333" stroke-width="0.7040000000000002"/>
<ellipse cx="675.9" cy="676" rx="14.4" ry="3.6" fill="none" stroke="#333" stroke-width="1.2"/>
<rect x="713.0" y="344.4" width="85.2" height="5.6" stroke="#222" stroke-width="1.3" fill="none"/>
<line x1="710.3" y1="350.0" x2="710.3" y2="396.0" stroke="#111" stroke-width="1.6"/>
<line x1="801.4" y1="350.0" x2="801.4" y2="396.0" stroke="#111" stroke-width="1.6"/>
<line x1="713.0" y1="350.0" x2="713.0" y2="396.0" stroke="#444" stroke-width="1"/>
<line x1="797.5" y1="350.0" x2="797.5" y2="396.0" stroke="#444" stroke-width="1"/>
<line x1="716.0" y1="350.5" x2="798.0" y2="350.5" stroke="#222" stroke-width="1.8"/>
<line x1="716.0" y1="352.8" x2="798.0" y2="352.8" stroke="#222" stroke-width="1.4"/>
<line x1="718.0" y1="357.5" x2="798.0" y2="357.5" stroke="#222" stroke-width="1.8"/>
<line x1="719.0" y1="359.8" x2="798.0" y2="359.8" stroke="#222" stroke-width="1.4"/>
<line x1="721.0" y1="364.0" x2="798.0" y2="364.0" stroke="#222" stroke-width="2.0"/>
<line x1="722.0" y1="366.0" x2="798.0" y2="366.0" stroke="#222" stroke-width="1.4"/>
<line x1="724.0" y1="370.5" x2="798.0" y2="370.5" stroke="#222" stroke-width="2.0"/>
<line x1="724.0" y1="372.5" x2="798.0" y2="372.5" stroke="#222" stroke-width="1.6"/>
<line x1="726.0" y1="377.5" x2="798.0" y2="377.5" stroke="#555" stroke-width="1.2"/>
<line x1="728.0" y1="382.5" x2="798.0" y2="382.5" stroke="#555" stroke-width="1.2"/>
<line x1="730.0" y1="387.5" x2="798.0" y2="387.5" stroke="#555" stroke-width="1.2"/>
<line x1="732.0" y1="392.0" x2="798.0" y2="392.0" stroke="#555" stroke-width="1.2"/>
<line x1="712.0" y1="394.0" x2="798.0" y2="394.0" stroke="#222" stroke-width="1.6"/>
<line x1="714.0" y1="351.0" x2="715.0" y2="395.0" stroke="#333" stroke-width="1.1"/>
<line x1="717.0" y1="354.5" x2="718.0" y2="395.0" stroke="#333" stroke-width="1.1"/>
<line x1="720.0" y1="358.0" x2="721.0" y2="395.0" stroke="#333" stroke-width="1.1"/>
<line x1="723.0" y1="361.5" x2="724.0" y2="395.0" stroke="#333" stroke-width="1.1"/>
<line x1="726.0" y1="365.0" x2="727.0" y2="395.0" stroke="#333" stroke-width="1.1"/>
<line x1="729.0" y1="368.5" x2="730.0" y2="395.0" stroke="#333" stroke-width="1.1"/>
<line x1="797.5" y1="352.0" x2="797.5" y2="395.0" stroke="#222" stroke-width="1.6"/>
<line x1="801.4" y1="365.0" x2="803.9" y2="416.4" stroke="#111" stroke-width="2.5"/>
<line x1="710.3" y1="396.3" x2="801.4" y2="396.3" stroke="#111" stroke-width="2.2"/>
<line x1="710.3" y1="401.3" x2="801.4" y2="401.3" stroke="#333" stroke-width="1.2"/>
<line x1="710.3" y1="396.3" x2="710.3" y2="448.3" stroke="#333" stroke-width="1.3"/>
<line x1="801.4" y1="396.3" x2="801.4" y2="448.3" stroke="#333" stroke-width="1.3"/>
<line x1="713.5" y1="401.3" x2="713.5" y2="448.3" stroke="#777" stroke-width="0.8"/>
<line x1="797.5" y1="401.3" x2="797.5" y2="448.3" stroke="#555" stroke-width="1"/>
<line x1="718.1" y1="412.3" x2="797.5" y2="412.3" stroke="#222" stroke-width="1.4"/>
<line x1="718.1" y1="412.3" x2="718.1" y2="445.3" stroke="#333" stroke-width="1.5"/>
<line x1="713.0" y1="402.3" x2="726.0" y2="426.3" stroke="#777" stroke-width="0.7"/>
<rect x="714.0" y="427.6" width="83.5" height="18.2" stroke="#222" stroke-width="1.3" fill="none"/>
<line x1="785.0" y1="412.3" x2="785.0" y2="445.3" stroke="#999" stroke-width="1.6"/>
<line x1="744.0" y1="424.3" x2="790.0" y2="424.3" stroke="#b8b8b8" stroke-width="0.7"/>
<line x1="744.0" y1="424.3" x2="744.0" y2="445.3" stroke="#b8b8b8" stroke-width="0.6"/>
<rect x="802.4" y="417.6" width="16.5" height="31.9" stroke="#222" stroke-width="1.8" fill="none"/>
<path d="M802 449.3 L812 458.3 L819 449.3" stroke="#444" stroke-width="1" fill="none"/>
<line x1="710.3" y1="448.3" x2="801.4" y2="448.3" stroke="#111" stroke-width="2.2"/>
<line x1="710.3" y1="453.3" x2="801.4" y2="453.3" stroke="#333" stroke-width="1.2"/>
<line x1="710.3" y1="448.3" x2="710.3" y2="500.2" stroke="#333" stroke-width="1.3"/>
<line x1="801.4" y1="448.3" x2="801.4" y2="500.2" stroke="#333" stroke-width="1.3"/>
<line x1="713.5" y1="453.3" x2="713.5" y2="500.2" stroke="#777" stroke-width="0.8"/>
<line x1="797.5" y1="453.3" x2="797.5" y2="500.2" stroke="#555" stroke-width="1"/>
<line x1="718.1" y1="464.3" x2="797.5" y2="464.3" stroke="#222" stroke-width="1.4"/>
<line x1="718.1" y1="464.3" x2="718.1" y2="497.2" stroke="#333" stroke-width="1.5"/>
<line x1="713.0" y1="454.3" x2="726.0" y2="478.3" stroke="#777" stroke-width="0.7"/>
<rect x="714.0" y="479.6" width="83.5" height="18.1" stroke="#222" stroke-width="1.3" fill="none"/>
<line x1="785.0" y1="464.3" x2="785.0" y2="497.2" stroke="#999" stroke-width="1.6"/>
<line x1="744.0" y1="476.3" x2="790.0" y2="476.3" stroke="#b8b8b8" stroke-width="0.7"/>
<line x1="744.0" y1="476.3" x2="744.0" y2="497.2" stroke="#b8b8b8" stroke-width="0.6"/>
<rect x="802.4" y="469.6" width="16.5" height="31.9" stroke="#222" stroke-width="1.8" fill="none"/>
<path d="M802 501.3 L812 510.3 L819 501.3" stroke="#444" stroke-width="1" fill="none"/>
<line x1="710.3" y1="500.2" x2="801.4" y2="500.2" stroke="#111" stroke-width="2.2"/>
<line x1="710.3" y1="505.2" x2="801.4" y2="505.2" stroke="#333" stroke-width="1.2"/>
<line x1="710.3" y1="500.2" x2="710.3" y2="552.1" stroke="#333" stroke-width="1.3"/>
<line x1="801.4" y1="500.2" x2="801.4" y2="552.1" stroke="#333" stroke-width="1.3"/>
<line x1="713.5" y1="505.2" x2="713.5" y2="552.1" stroke="#777" stroke-width="0.8"/>
<line x1="797.5" y1="505.2" x2="797.5" y2="552.1" stroke="#555" stroke-width="1"/>
<line x1="718.1" y1="516.2" x2="797.5" y2="516.2" stroke="#222" stroke-width="1.4"/>
<line x1="718.1" y1="516.2" x2="718.1" y2="549.1" stroke="#333" stroke-width="1.5"/>
<line x1="713.0" y1="506.2" x2="726.0" y2="530.2" stroke="#777" stroke-width="0.7"/>
<rect x="714.0" y="531.5" width="83.5" height="18.1" stroke="#222" stroke-width="1.3" fill="none"/>
<line x1="785.0" y1="516.2" x2="785.0" y2="549.1" stroke="#999" stroke-width="1.6"/>
<line x1="744.0" y1="528.2" x2="790.0" y2="528.2" stroke="#b8b8b8" stroke-width="0.7"/>
<line x1="744.0" y1="528.2" x2="744.0" y2="549.1" stroke="#b8b8b8" stroke-width="0.6"/>
<rect x="802.4" y="521.5" width="16.5" height="31.9" stroke="#222" stroke-width="1.8" fill="none"/>
<path d="M802 553.2 L812 562.2 L819 553.2" stroke="#444" stroke-width="1" fill="none"/>
<line x1="710.3" y1="552.1" x2="801.4" y2="552.1" stroke="#111" stroke-width="2.2"/>
<line x1="710.3" y1="557.1" x2="801.4" y2="557.1" stroke="#333" stroke-width="1.2"/>
<line x1="710.3" y1="552.1" x2="710.3" y2="603.5" stroke="#333" stroke-width="1.3"/>
<line x1="801.4" y1="552.1" x2="801.4" y2="603.5" stroke="#333" stroke-width="1.3"/>
<line x1="713.5" y1="557.1" x2="713.5" y2="603.5" stroke="#777" stroke-width="0.8"/>
<line x1="797.5" y1="557.1" x2="797.5" y2="603.5" stroke="#555" stroke-width="1"/>
<line x1="718.1" y1="568.1" x2="797.5" y2="568.1" stroke="#222" stroke-width="1.4"/>
<line x1="718.1" y1="568.1" x2="718.1" y2="600.5" stroke="#333" stroke-width="1.5"/>
<line x1="713.0" y1="558.1" x2="726.0" y2="582.1" stroke="#777" stroke-width="0.7"/>
<rect x="714.0" y="583.4" width="83.5" height="17.6" stroke="#222" stroke-width="1.3" fill="none"/>
<line x1="785.0" y1="568.1" x2="785.0" y2="600.5" stroke="#999" stroke-width="1.6"/>
<line x1="744.0" y1="580.1" x2="790.0" y2="580.1" stroke="#b8b8b8" stroke-width="0.7"/>
<line x1="744.0" y1="580.1" x2="744.0" y2="600.5" stroke="#b8b8b8" stroke-width="0.6"/>
<rect x="802.4" y="573.4" width="16.5" height="31.9" stroke="#222" stroke-width="1.8" fill="none"/>
<path d="M802 605.1 L812 614.1 L819 605.1" stroke="#444" stroke-width="1" fill="none"/>
<line x1="710.3" y1="603.5" x2="801.4" y2="603.5" stroke="#111" stroke-width="2.2"/>
<line x1="710.3" y1="608.5" x2="801.4" y2="608.5" stroke="#333" stroke-width="1.2"/>
<line x1="711.0" y1="609.0" x2="711.0" y2="683.0" stroke="#222" stroke-width="1.6"/>
<line x1="717.0" y1="610.0" x2="713.0" y2="683.0" stroke="#333" stroke-width="2"/>
<line x1="797.0" y1="609.0" x2="801.0" y2="683.0" stroke="#333" stroke-width="2"/>
<line x1="803.0" y1="603.0" x2="803.0" y2="683.0" stroke="#333" stroke-width="1.2"/>
<rect x="730.0" y="624.5" width="12.6" height="56.5" stroke="#444" stroke-width="1.2" fill="none"/>
<rect x="753.7" y="624.5" width="13.0" height="56.5" stroke="#444" stroke-width="1.2" fill="none"/>
<rect x="770.0" y="652.0" width="27.0" height="29.0" stroke="#666" stroke-width="1" fill="none"/>
<line x1="725.0" y1="609.0" x2="725.0" y2="683.0" stroke="#888" stroke-width="0.8"/>
<line x1="782.0" y1="609.0" x2="782.0" y2="683.0" stroke="#888" stroke-width="0.8"/>
<line x1="803.0" y1="600.0" x2="818.0" y2="586.0" stroke="#555" stroke-width="1"/>
<rect x="972.0" y="504.9" width="247.6" height="53.4" stroke="#333" stroke-width="1.4" fill="none"/>
<line x1="972.0" y1="525.2" x2="1219.6" y2="525.2" stroke="#333" stroke-width="2"/>
<line x1="972.0" y1="528.0" x2="1219.6" y2="528.0" stroke="#777" stroke-width="1"/>
<line x1="972.0" y1="547.3" x2="1219.6" y2="547.3" stroke="#222" stroke-width="2"/>
<line x1="1020.0" y1="502.7" x2="1120.0" y2="502.7" stroke="#444" stroke-width="1.6"/>
<rect x="944.0" y="520.0" width="28.0" height="33.0" stroke="#111" stroke-width="1" fill="#fff"/>
<rect x="972.0" y="504.0" width="18.0" height="49.0" stroke="#111" stroke-width="1" fill="#fff"/>
<rect x="945.0" y="521.0" width="13.0" height="15.0" stroke="#222" stroke-width="0.8" fill="#333"/>
<rect x="947" y="523" width="1.4" height="1.4" fill="#ccc"/>
<rect x="950" y="523" width="1.4" height="1.4" fill="#ccc"/>
<rect x="953" y="523" width="1.4" height="1.4" fill="#ccc"/>
<rect x="956" y="523" width="1.4" height="1.4" fill="#ccc"/>
<rect x="947" y="526" width="1.4" height="1.4" fill="#ccc"/>
<rect x="950" y="526" width="1.4" height="1.4" fill="#ccc"/>
<rect x="953" y="526" width="1.4" height="1.4" fill="#ccc"/>
<rect x="956" y="526" width="1.4" height="1.4" fill="#ccc"/>
<rect x="947" y="529" width="1.4" height="1.4" fill="#ccc"/>
<rect x="950" y="529" width="1.4" height="1.4" fill="#ccc"/>
<rect x="953" y="529" width="1.4" height="1.4" fill="#ccc"/>
<rect x="956" y="529" width="1.4" height="1.4" fill="#ccc"/>
<rect x="947" y="532" width="1.4" height="1.4" fill="#ccc"/>
<rect x="950" y="532" width="1.4" height="1.4" fill="#ccc"/>
<rect x="953" y="532" width="1.4" height="1.4" fill="#ccc"/>
<rect x="956" y="532" width="1.4" height="1.4" fill="#ccc"/>
<rect x="945.0" y="537.0" width="13.0" height="15.0" stroke="#222" stroke-width="0.8" fill="#333"/>
<rect x="947" y="539" width="1.4" height="1.4" fill="#ccc"/>
<rect x="950" y="539" width="1.4" height="1.4" fill="#ccc"/>
<rect x="953" y="539" width="1.4" height="1.4" fill="#ccc"/>
<rect x="956" y="539" width="1.4" height="1.4" fill="#ccc"/>
<rect x="947" y="542" width="1.4" height="1.4" fill="#ccc"/>
<rect x="950" y="542" width="1.4" height="1.4" fill="#ccc"/>
<rect x="953" y="542" width="1.4" height="1.4" fill="#ccc"/>
<rect x="956" y="542" width="1.4" height="1.4" fill="#ccc"/>
<rect x="947" y="545" width="1.4" height="1.4" fill="#ccc"/>
<rect x="950" y="545" width="1.4" height="1.4" fill="#ccc"/>
<rect x="953" y="545" width="1.4" height="1.4" fill="#ccc"/>
<rect x="956" y="545" width="1.4" height="1.4" fill="#ccc"/>
<rect x="947" y="548" width="1.4" height="1.4" fill="#ccc"/>
<rect x="950" y="548" width="1.4" height="1.4" fill="#ccc"/>
<rect x="953" y="548" width="1.4" height="1.4" fill="#ccc"/>
<rect x="956" y="548" width="1.4" height="1.4" fill="#ccc"/>
<rect x="973.0" y="506.0" width="16.0" height="22.0" stroke="#222" stroke-width="0.8" fill="#333"/>
<rect x="975" y="508" width="1.4" height="1.4" fill="#ccc"/>
<rect x="978" y="508" width="1.4" height="1.4" fill="#ccc"/>
<rect x="981" y="508" width="1.4" height="1.4" fill="#ccc"/>
<rect x="984" y="508" width="1.4" height="1.4" fill="#ccc"/>
<rect x="987" y="508" width="1.4" height="1.4" fill="#ccc"/>
<rect x="975" y="511" width="1.4" height="1.4" fill="#ccc"/>
<rect x="978" y="511" width="1.4" height="1.4" fill="#ccc"/>
<rect x="981" y="511" width="1.4" height="1.4" fill="#ccc"/>
<rect x="984" y="511" width="1.4" height="1.4" fill="#ccc"/>
<rect x="987" y="511" width="1.4" height="1.4" fill="#ccc"/>
<rect x="975" y="514" width="1.4" height="1.4" fill="#ccc"/>
<rect x="978" y="514" width="1.4" height="1.4" fill="#ccc"/>
<rect x="981" y="514" width="1.4" height="1.4" fill="#ccc"/>
<rect x="984" y="514" width="1.4" height="1.4" fill="#ccc"/>
<rect x="987" y="514" width="1.4" height="1.4" fill="#ccc"/>
<rect x="975" y="517" width="1.4" height="1.4" fill="#ccc"/>
<rect x="978" y="517" width="1.4" height="1.4" fill="#ccc"/>
<rect x="981" y="517" width="1.4" height="1.4" fill="#ccc"/>
<rect x="984" y="517" width="1.4" height="1.4" fill="#ccc"/>
<rect x="987" y="517" width="1.4" height="1.4" fill="#ccc"/>
<rect x="975" y="520" width="1.4" height="1.4" fill="#ccc"/>
<rect x="978" y="520" width="1.4" height="1.4" fill="#ccc"/>
<rect x="981" y="520" width="1.4" height="1.4" fill="#ccc"/>
<rect x="984" y="520" width="1.4" height="1.4" fill="#ccc"/>
<rect x="987" y="520" width="1.4" height="1.4" fill="#ccc"/>
<rect x="975" y="523" width="1.4" height="1.4" fill="#ccc"/>
<rect x="978" y="523" width="1.4" height="1.4" fill="#ccc"/>
<rect x="981" y="523" width="1.4" height="1.4" fill="#ccc"/>
<rect x="984" y="523" width="1.4" height="1.4" fill="#ccc"/>
<rect x="987" y="523" width="1.4" height="1.4" fill="#ccc"/>
<rect x="975" y="526" width="1.4" height="1.4" fill="#ccc"/>
<rect x="978" y="526" width="1.4" height="1.4" fill="#ccc"/>
<rect x="981" y="526" width="1.4" height="1.4" fill="#ccc"/>
<rect x="984" y="526" width="1.4" height="1.4" fill="#ccc"/>
<rect x="987" y="526" width="1.4" height="1.4" fill="#ccc"/>
<rect x="973.0" y="530.0" width="16.0" height="22.0" stroke="#222" stroke-width="0.8" fill="#333"/>
<rect x="975" y="532" width="1.4" height="1.4" fill="#ccc"/>
<rect x="978" y="532" width="1.4" height="1.4" fill="#ccc"/>
<rect x="981" y="532" width="1.4" height="1.4" fill="#ccc"/>
<rect x="984" y="532" width="1.4" height="1.4" fill="#ccc"/>
<rect x="987" y="532" width="1.4" height="1.4" fill="#ccc"/>
<rect x="975" y="535" width="1.4" height="1.4" fill="#ccc"/>
<rect x="978" y="535" width="1.4" height="1.4" fill="#ccc"/>
<rect x="981" y="535" width="1.4" height="1.4" fill="#ccc"/>
<rect x="984" y="535" width="1.4" height="1.4" fill="#ccc"/>
<rect x="987" y="535" width="1.4" height="1.4" fill="#ccc"/>
<rect x="975" y="538" width="1.4" height="1.4" fill="#ccc"/>
<rect x="978" y="538" width="1.4" height="1.4" fill="#ccc"/>
<rect x="981" y="538" width="1.4" height="1.4" fill="#ccc"/>
<rect x="984" y="538" width="1.4" height="1.4" fill="#ccc"/>
<rect x="987" y="538" width="1.4" height="1.4" fill="#ccc"/>
<rect x="975" y="541" width="1.4" height="1.4" fill="#ccc"/>
<rect x="978" y="541" width="1.4" height="1.4" fill="#ccc"/>
<rect x="981" y="541" width="1.4" height="1.4" fill="#ccc"/>
<rect x="984" y="541" width="1.4" height="1.4" fill="#ccc"/>
<rect x="987" y="541" width="1.4" height="1.4" fill="#ccc"/>
<rect x="975" y="544" width="1.4" height="1.4" fill="#ccc"/>
<rect x="978" y="544" width="1.4" height="1.4" fill="#ccc"/>
<rect x="981" y="544" width="1.4" height="1.4" fill="#ccc"/>
<rect x="984" y="544" width="1.4" height="1.4" fill="#ccc"/>
<rect x="987" y="544" width="1.4" height="1.4" fill="#ccc"/>
<rect x="975" y="547" width="1.4" height="1.4" fill="#ccc"/>
<rect x="978" y="547" width="1.4" height="1.4" fill="#ccc"/>
<rect x="981" y="547" width="1.4" height="1.4" fill="#ccc"/>
<rect x="984" y="547" width="1.4" height="1.4" fill="#ccc"/>
<rect x="987" y="547" width="1.4" height="1.4" fill="#ccc"/>
<rect x="975" y="550" width="1.4" height="1.4" fill="#ccc"/>
<rect x="978" y="550" width="1.4" height="1.4" fill="#ccc"/>
<rect x="981" y="550" width="1.4" height="1.4" fill="#ccc"/>
<rect x="984" y="550" width="1.4" height="1.4" fill="#ccc"/>
<rect x="987" y="550" width="1.4" height="1.4" fill="#ccc"/>
<rect x="958.0" y="521.0" width="13.0" height="15.0" stroke="#333" stroke-width="0.8" fill="#fff"/>
<rect x="960" y="523" width="1.6" height="1.6" fill="#444"/>
<rect x="963" y="523" width="1.6" height="1.6" fill="#444"/>
<rect x="966" y="523" width="1.6" height="1.6" fill="#444"/>
<rect x="969" y="523" width="1.6" height="1.6" fill="#444"/>
<rect x="960" y="526" width="1.6" height="1.6" fill="#444"/>
<rect x="963" y="526" width="1.6" height="1.6" fill="#444"/>
<rect x="966" y="526" width="1.6" height="1.6" fill="#444"/>
<rect x="969" y="526" width="1.6" height="1.6" fill="#444"/>
<rect x="960" y="529" width="1.6" height="1.6" fill="#444"/>
<rect x="963" y="529" width="1.6" height="1.6" fill="#444"/>
<rect x="966" y="529" width="1.6" height="1.6" fill="#444"/>
<rect x="969" y="529" width="1.6" height="1.6" fill="#444"/>
<rect x="960" y="532" width="1.6" height="1.6" fill="#444"/>
<rect x="963" y="532" width="1.6" height="1.6" fill="#444"/>
<rect x="966" y="532" width="1.6" height="1.6" fill="#444"/>
<rect x="969" y="532" width="1.6" height="1.6" fill="#444"/>
<rect x="958.0" y="537.0" width="13.0" height="15.0" stroke="#333" stroke-width="0.8" fill="#fff"/>
<rect x="960" y="539" width="1.6" height="1.6" fill="#444"/>
<rect x="963" y="539" width="1.6" height="1.6" fill="#444"/>
<rect x="966" y="539" width="1.6" height="1.6" fill="#444"/>
<rect x="969" y="539" width="1.6" height="1.6" fill="#444"/>
<rect x="960" y="542" width="1.6" height="1.6" fill="#444"/>
<rect x="963" y="542" width="1.6" height="1.6" fill="#444"/>
<rect x="966" y="542" width="1.6" height="1.6" fill="#444"/>
<rect x="969" y="542" width="1.6" height="1.6" fill="#444"/>
<rect x="960" y="545" width="1.6" height="1.6" fill="#444"/>
<rect x="963" y="545" width="1.6" height="1.6" fill="#444"/>
<rect x="966" y="545" width="1.6" height="1.6" fill="#444"/>
<rect x="969" y="545" width="1.6" height="1.6" fill="#444"/>
<rect x="960" y="548" width="1.6" height="1.6" fill="#444"/>
<rect x="963" y="548" width="1.6" height="1.6" fill="#444"/>
<rect x="966" y="548" width="1.6" height="1.6" fill="#444"/>
<rect x="969" y="548" width="1.6" height="1.6" fill="#444"/>
<line x1="990.0" y1="507.0" x2="1219.0" y2="507.0" stroke="#666" stroke-width="0.8"/>
<line x1="1026.0" y1="556.0" x2="1293.0" y2="559.4" stroke="#222" stroke-width="2.2"/>
<line x1="1026.0" y1="561.0" x2="1293.0" y2="563.8" stroke="#555" stroke-width="1.2"/>
<line x1="1210.0" y1="566.0" x2="1293.0" y2="570.0" stroke="#888" stroke-width="0.8"/>
<path d="M905 682 L905 608 L913 586 L954 586 L954 581 L1094 536.5 Q1099 534 1104 536.5 L1236.4 577.6 L1242 585 L1292 586.4 L1292 681 Z" stroke="#222" stroke-width="1.2" fill="#fff"/>
<line x1="1242.0" y1="582.0" x2="1292.0" y2="582.0" stroke="#aaa" stroke-width="0.7"/>
<line x1="1209.0" y1="568.0" x2="1209.0" y2="573.0" stroke="#333" stroke-width="1.5"/>
<rect x="910.0" y="553.0" width="116.0" height="11.0" stroke="#222" stroke-width="1.3" fill="#fff"/>
<line x1="912.0" y1="554.0" x2="914.5" y2="563.0" stroke="#333" stroke-width="1.2"/>
<line x1="916.0" y1="554.0" x2="918.5" y2="563.0" stroke="#333" stroke-width="1.2"/>
<line x1="920.0" y1="554.0" x2="922.5" y2="563.0" stroke="#333" stroke-width="1.2"/>
<line x1="924.0" y1="554.0" x2="926.5" y2="563.0" stroke="#333" stroke-width="1.2"/>
<line x1="928.0" y1="554.0" x2="930.5" y2="563.0" stroke="#333" stroke-width="1.2"/>
<line x1="932.0" y1="554.0" x2="934.5" y2="563.0" stroke="#333" stroke-width="1.2"/>
<line x1="936.0" y1="554.0" x2="938.5" y2="563.0" stroke="#333" stroke-width="1.2"/>
<line x1="940.0" y1="554.0" x2="942.5" y2="563.0" stroke="#333" stroke-width="1.2"/>
<line x1="944.0" y1="554.0" x2="946.5" y2="563.0" stroke="#333" stroke-width="1.2"/>
<line x1="913.0" y1="564.0" x2="913.0" y2="586.0" stroke="#444" stroke-width="1"/>
<line x1="954.0" y1="564.0" x2="954.0" y2="586.0" stroke="#333" stroke-width="1.2"/>
<line x1="913.0" y1="583.0" x2="954.0" y2="583.0" stroke="#555" stroke-width="1"/>
<line x1="918.0" y1="568.0" x2="950.0" y2="568.0" stroke="#aaa" stroke-width="0.6"/>
<line x1="1026.0" y1="564.0" x2="1026.0" y2="570.0" stroke="#444" stroke-width="1"/>
<line x1="851.0" y1="640.0" x2="851.0" y2="590.0" stroke="#333" stroke-width="1.5"/>
<ellipse cx="850" cy="640" rx="10.0" ry="2.5" fill="none" stroke="#444" stroke-width="1"/>
<line x1="854.0" y1="644.0" x2="854.0" y2="590.0" stroke="#333" stroke-width="1.5"/>
<ellipse cx="853" cy="644" rx="11.2" ry="2.7" fill="none" stroke="#444" stroke-width="1"/>
<line x1="858.0" y1="650.0" x2="858.0" y2="590.0" stroke="#333" stroke-width="1.5"/>
<ellipse cx="857" cy="650" rx="12.4" ry="2.9" fill="none" stroke="#444" stroke-width="1"/>
<line x1="863.0" y1="657.0" x2="863.0" y2="590.0" stroke="#333" stroke-width="1.5"/>
<ellipse cx="862" cy="657" rx="13.6" ry="3.1" fill="none" stroke="#444" stroke-width="1"/>
<line x1="869.0" y1="665.0" x2="869.0" y2="590.0" stroke="#333" stroke-width="1.5"/>
<ellipse cx="868" cy="665" rx="14.8" ry="3.3" fill="none" stroke="#444" stroke-width="1"/>
<line x1="876.0" y1="676.0" x2="876.0" y2="590.0" stroke="#333" stroke-width="1.5"/>
<ellipse cx="875" cy="676" rx="16.0" ry="3.5" fill="none" stroke="#444" stroke-width="1"/>
<rect x="820.0" y="538.0" width="20.0" height="96.0" stroke="#555" stroke-width="1.0" fill="none"/>
<line x1="839.0" y1="638.0" x2="851.0" y2="682.0" stroke="#444" stroke-width="1"/>
<line x1="851.0" y1="612.0" x2="852.9" y2="593.6" stroke="#262626" stroke-width="1.1"/>
<line x1="852.9" y1="593.6" x2="847.9" y2="581.9" stroke="#262626" stroke-width="0.8800000000000001"/>
<line x1="847.9" y1="581.9" x2="844.2" y2="573.4" stroke="#262626" stroke-width="0.7040000000000002"/>
<line x1="844.2" y1="573.4" x2="844.0" y2="566.9" stroke="#262626" stroke-width="0.5632000000000001"/>
<line x1="844.0" y1="566.9" x2="843.0" y2="561.9" stroke="#262626" stroke-width="0.55"/>
<line x1="843.0" y1="561.9" x2="844.0" y2="558.7" stroke="#262626" stroke-width="0.55"/>
<line x1="843.0" y1="561.9" x2="840.0" y2="558.8" stroke="#262626" stroke-width="0.55"/>
<line x1="844.0" y1="566.9" x2="843.7" y2="563.2" stroke="#262626" stroke-width="0.55"/>
<line x1="843.7" y1="563.2" x2="844.4" y2="561.0" stroke="#262626" stroke-width="0.55"/>
<line x1="843.7" y1="563.2" x2="843.5" y2="560.5" stroke="#262626" stroke-width="0.55"/>
<line x1="844.2" y1="573.4" x2="837.5" y2="569.3" stroke="#262626" stroke-width="0.5632000000000001"/>
<line x1="837.5" y1="569.3" x2="831.6" y2="568.4" stroke="#262626" stroke-width="0.55"/>
<line x1="831.6" y1="568.4" x2="828.2" y2="567.0" stroke="#262626" stroke-width="0.55"/>
<line x1="831.6" y1="568.4" x2="827.8" y2="569.4" stroke="#262626" stroke-width="0.55"/>
<line x1="837.5" y1="569.3" x2="832.1" y2="568.9" stroke="#262626" stroke-width="0.55"/>
<line x1="832.1" y1="568.9" x2="829.0" y2="570.7" stroke="#262626" stroke-width="0.55"/>
<line x1="832.1" y1="568.9" x2="829.1" y2="567.0" stroke="#262626" stroke-width="0.55"/>
<line x1="847.9" y1="581.9" x2="848.5" y2="574.7" stroke="#262626" stroke-width="0.7040000000000002"/>
<line x1="848.5" y1="574.7" x2="847.2" y2="570.5" stroke="#262626" stroke-width="0.5632000000000001"/>
<line x1="847.2" y1="570.5" x2="846.2" y2="567.7" stroke="#262626" stroke-width="0.55"/>
<line x1="846.2" y1="567.7" x2="846.3" y2="565.4" stroke="#262626" stroke-width="0.55"/>
<line x1="846.2" y1="567.7" x2="846.2" y2="565.8" stroke="#262626" stroke-width="0.55"/>
<line x1="847.2" y1="570.5" x2="847.4" y2="567.6" stroke="#262626" stroke-width="0.55"/>
<line x1="847.4" y1="567.6" x2="846.7" y2="565.6" stroke="#262626" stroke-width="0.55"/>
<line x1="847.4" y1="567.6" x2="846.9" y2="565.8" stroke="#262626" stroke-width="0.55"/>
<line x1="848.5" y1="574.7" x2="850.4" y2="569.8" stroke="#262626" stroke-width="0.5632000000000001"/>
<line x1="850.4" y1="569.8" x2="852.3" y2="566.7" stroke="#262626" stroke-width="0.55"/>
<line x1="852.3" y1="566.7" x2="852.3" y2="564.1" stroke="#262626" stroke-width="0.55"/>
<line x1="852.3" y1="566.7" x2="852.4" y2="563.8" stroke="#262626" stroke-width="0.55"/>
<line x1="850.4" y1="569.8" x2="853.4" y2="566.5" stroke="#262626" stroke-width="0.55"/>
<line x1="853.4" y1="566.5" x2="854.3" y2="563.5" stroke="#262626" stroke-width="0.55"/>
<line x1="853.4" y1="566.5" x2="856.4" y2="564.9" stroke="#262626" stroke-width="0.55"/>
<line x1="852.9" y1="593.6" x2="859.6" y2="581.2" stroke="#262626" stroke-width="0.8800000000000001"/>
<line x1="859.6" y1="581.2" x2="867.1" y2="576.5" stroke="#262626" stroke-width="0.7040000000000002"/>
<line x1="867.1" y1="576.5" x2="872.8" y2="572.4" stroke="#262626" stroke-width="0.5632000000000001"/>
<line x1="872.8" y1="572.4" x2="876.0" y2="569.3" stroke="#262626" stroke-width="0.55"/>
<line x1="876.0" y1="569.3" x2="876.8" y2="566.6" stroke="#262626" stroke-width="0.55"/>
<line x1="876.0" y1="569.3" x2="878.7" y2="568.2" stroke="#262626" stroke-width="0.55"/>
<line x1="872.8" y1="572.4" x2="874.6" y2="567.4" stroke="#262626" stroke-width="0.55"/>
<line x1="874.6" y1="567.4" x2="875.2" y2="563.6" stroke="#262626" stroke-width="0.55"/>
<line x1="874.6" y1="567.4" x2="875.2" y2="563.0" stroke="#262626" stroke-width="0.55"/>
<line x1="867.1" y1="576.5" x2="874.1" y2="574.0" stroke="#262626" stroke-width="0.5632000000000001"/>
<line x1="874.1" y1="574.0" x2="879.3" y2="574.9" stroke="#262626" stroke-width="0.55"/>
<line x1="879.3" y1="574.9" x2="883.6" y2="574.4" stroke="#262626" stroke-width="0.55"/>
<line x1="879.3" y1="574.9" x2="883.1" y2="576.3" stroke="#262626" stroke-width="0.55"/>
<line x1="874.1" y1="574.0" x2="877.9" y2="570.3" stroke="#262626" stroke-width="0.55"/>
<line x1="877.9" y1="570.3" x2="880.0" y2="567.4" stroke="#262626" stroke-width="0.55"/>
<line x1="877.9" y1="570.3" x2="878.8" y2="566.0" stroke="#262626" stroke-width="0.55"/>
<line x1="859.6" y1="581.2" x2="865.7" y2="571.6" stroke="#262626" stroke-width="0.7040000000000002"/>
<line x1="865.7" y1="571.6" x2="873.4" y2="567.3" stroke="#262626" stroke-width="0.5632000000000001"/>
<line x1="873.4" y1="567.3" x2="879.8" y2="567.7" stroke="#262626" stroke-width="0.55"/>
<line x1="879.8" y1="567.7" x2="883.8" y2="568.0" stroke="#262626" stroke-width="0.55"/>
<line x1="879.8" y1="567.7" x2="883.2" y2="568.9" stroke="#262626" stroke-width="0.55"/>
<line x1="873.4" y1="567.3" x2="877.0" y2="561.8" stroke="#262626" stroke-width="0.55"/>
<line x1="877.0" y1="561.8" x2="880.3" y2="557.5" stroke="#262626" stroke-width="0.55"/>
<line x1="877.0" y1="561.8" x2="878.2" y2="556.5" stroke="#262626" stroke-width="0.55"/>
<line x1="865.7" y1="571.6" x2="872.4" y2="567.3" stroke="#262626" stroke-width="0.5632000000000001"/>
<line x1="872.4" y1="567.3" x2="876.0" y2="562.0" stroke="#262626" stroke-width="0.55"/>
<line x1="876.0" y1="562.0" x2="877.8" y2="557.0" stroke="#262626" stroke-width="0.55"/>
<line x1="876.0" y1="562.0" x2="879.5" y2="559.5" stroke="#262626" stroke-width="0.55"/>
<line x1="872.4" y1="567.3" x2="874.6" y2="562.4" stroke="#262626" stroke-width="0.55"/>
<line x1="874.6" y1="562.4" x2="877.1" y2="560.5" stroke="#262626" stroke-width="0.55"/>
<line x1="874.6" y1="562.4" x2="877.2" y2="559.0" stroke="#262626" stroke-width="0.55"/>
<line x1="851.0" y1="612.0" x2="840.5" y2="600.1" stroke="#262626" stroke-width="1.1"/>
<line x1="840.5" y1="600.1" x2="837.9" y2="591.5" stroke="#262626" stroke-width="0.8800000000000001"/>
<line x1="837.9" y1="591.5" x2="835.2" y2="586.0" stroke="#262626" stroke-width="0.7040000000000002"/>
<line x1="835.2" y1="586.0" x2="832.6" y2="582.2" stroke="#262626" stroke-width="0.5632000000000001"/>
<line x1="832.6" y1="582.2" x2="829.4" y2="580.1" stroke="#262626" stroke-width="0.55"/>
<line x1="829.4" y1="580.1" x2="827.2" y2="579.2" stroke="#262626" stroke-width="0.55"/>
<line x1="829.4" y1="580.1" x2="827.2" y2="579.3" stroke="#262626" stroke-width="0.55"/>
<line x1="832.6" y1="582.2" x2="830.2" y2="579.6" stroke="#262626" stroke-width="0.55"/>
<line x1="830.2" y1="579.6" x2="828.6" y2="577.3" stroke="#262626" stroke-width="0.55"/>
<line x1="830.2" y1="579.6" x2="829.5" y2="577.3" stroke="#262626" stroke-width="0.55"/>
<line x1="835.2" y1="586.0" x2="831.4" y2="583.0" stroke="#262626" stroke-width="0.5632000000000001"/>
<line x1="831.4" y1="583.0" x2="828.1" y2="582.6" stroke="#262626" stroke-width="0.55"/>
<line x1="828.1" y1="582.6" x2="826.0" y2="582.7" stroke="#262626" stroke-width="0.55"/>
<line x1="828.1" y1="582.6" x2="825.6" y2="581.3" stroke="#262626" stroke-width="0.55"/>
<line x1="831.4" y1="583.0" x2="828.9" y2="579.9" stroke="#262626" stroke-width="0.55"/>
<line x1="828.9" y1="579.9" x2="826.5" y2="578.8" stroke="#262626" stroke-width="0.55"/>
<line x1="828.9" y1="579.9" x2="827.5" y2="578.2" stroke="#262626" stroke-width="0.55"/>
<line x1="837.9" y1="591.5" x2="837.2" y2="584.5" stroke="#262626" stroke-width="0.7040000000000002"/>
<line x1="837.2" y1="584.5" x2="838.6" y2="580.5" stroke="#262626" stroke-width="0.5632000000000001"/>
<line x1="838.6" y1="580.5" x2="839.5" y2="577.5" stroke="#262626" stroke-width="0.55"/>
<line x1="839.5" y1="577.5" x2="839.3" y2="575.1" stroke="#262626" stroke-width="0.55"/>
<line x1="839.5" y1="577.5" x2="840.9" y2="575.7" stroke="#262626" stroke-width="0.55"/>
<line x1="838.6" y1="580.5" x2="838.3" y2="577.5" stroke="#262626" stroke-width="0.55"/>
<line x1="838.3" y1="577.5" x2="838.6" y2="575.6" stroke="#262626" stroke-width="0.55"/>
<line x1="838.3" y1="577.5" x2="837.0" y2="575.8" stroke="#262626" stroke-width="0.55"/>
<line x1="837.2" y1="584.5" x2="836.3" y2="580.7" stroke="#262626" stroke-width="0.5632000000000001"/>
<line x1="836.3" y1="580.7" x2="834.3" y2="578.7" stroke="#262626" stroke-width="0.55"/>
<line x1="834.3" y1="578.7" x2="833.0" y2="577.0" stroke="#262626" stroke-width="0.55"/>
<line x1="834.3" y1="578.7" x2="833.0" y2="577.4" stroke="#262626" stroke-width="0.55"/>
<line x1="836.3" y1="580.7" x2="836.9" y2="578.0" stroke="#262626" stroke-width="0.55"/>
<line x1="836.9" y1="578.0" x2="836.6" y2="575.9" stroke="#262626" stroke-width="0.55"/>
<line x1="836.9" y1="578.0" x2="836.5" y2="576.5" stroke="#262626" stroke-width="0.55"/>
<line x1="840.5" y1="600.1" x2="832.1" y2="594.1" stroke="#262626" stroke-width="0.8800000000000001"/>
<line x1="832.1" y1="594.1" x2="826.8" y2="588.7" stroke="#262626" stroke-width="0.7040000000000002"/>
<line x1="826.8" y1="588.7" x2="825.1" y2="583.2" stroke="#262626" stroke-width="0.5632000000000001"/>
<line x1="825.1" y1="583.2" x2="825.7" y2="579.1" stroke="#262626" stroke-width="0.55"/>
<line x1="825.7" y1="579.1" x2="826.8" y2="576.9" stroke="#262626" stroke-width="0.55"/>
<line x1="825.7" y1="579.1" x2="826.0" y2="576.7" stroke="#262626" stroke-width="0.55"/>
<line x1="825.1" y1="583.2" x2="822.2" y2="580.0" stroke="#262626" stroke-width="0.55"/>
<line x1="822.2" y1="580.0" x2="819.8" y2="578.9" stroke="#262626" stroke-width="0.55"/>
<line x1="822.2" y1="580.0" x2="820.5" y2="576.9" stroke="#262626" stroke-width="0.55"/>
<line x1="826.8" y1="588.7" x2="824.2" y2="583.5" stroke="#262626" stroke-width="0.5632000000000001"/>
<line x1="824.2" y1="583.5" x2="823.6" y2="580.2" stroke="#262626" stroke-width="0.55"/>
<line x1="823.6" y1="580.2" x2="822.4" y2="578.3" stroke="#262626" stroke-width="0.55"/>
<line x1="823.6" y1="580.2" x2="824.4" y2="578.3" stroke="#262626" stroke-width="0.55"/>
<line x1="824.2" y1="583.5" x2="822.1" y2="579.5" stroke="#262626" stroke-width="0.55"/>
<line x1="822.1" y1="579.5" x2="820.6" y2="576.5" stroke="#262626" stroke-width="0.55"/>
<line x1="822.1" y1="579.5" x2="820.5" y2="576.8" stroke="#262626" stroke-width="0.55"/>
<line x1="832.1" y1="594.1" x2="823.6" y2="592.3" stroke="#262626" stroke-width="0.7040000000000002"/>
<line x1="823.6" y1="592.3" x2="818.8" y2="593.8" stroke="#262626" stroke-width="0.5632000000000001"/>
<line x1="851.0" y1="612.0" x2="850.4" y2="594.6" stroke="#262626" stroke-width="1.1"/>
<line x1="850.4" y1="594.6" x2="848.9" y2="585.0" stroke="#262626" stroke-width="0.8800000000000001"/>
<line x1="848.9" y1="585.0" x2="845.9" y2="577.9" stroke="#262626" stroke-width="0.7040000000000002"/>
<line x1="845.9" y1="577.9" x2="845.9" y2="572.5" stroke="#262626" stroke-width="0.5632000000000001"/>
<line x1="845.9" y1="572.5" x2="844.8" y2="569.1" stroke="#262626" stroke-width="0.55"/>
<line x1="844.8" y1="569.1" x2="844.9" y2="567.0" stroke="#262626" stroke-width="0.55"/>
<line x1="844.8" y1="569.1" x2="843.3" y2="566.7" stroke="#262626" stroke-width="0.55"/>
<line x1="845.9" y1="572.5" x2="843.5" y2="569.0" stroke="#262626" stroke-width="0.55"/>
<line x1="843.5" y1="569.0" x2="842.5" y2="565.7" stroke="#262626" stroke-width="0.55"/>
<line x1="843.5" y1="569.0" x2="840.5" y2="567.4" stroke="#262626" stroke-width="0.55"/>
<line x1="845.9" y1="577.9" x2="843.2" y2="574.4" stroke="#262626" stroke-width="0.5632000000000001"/>
<line x1="843.2" y1="574.4" x2="841.8" y2="571.6" stroke="#262626" stroke-width="0.55"/>
<line x1="841.8" y1="571.6" x2="842.0" y2="569.6" stroke="#262626" stroke-width="0.55"/>
<line x1="841.8" y1="571.6" x2="840.6" y2="570.1" stroke="#262626" stroke-width="0.55"/>
<line x1="843.2" y1="574.4" x2="840.1" y2="573.4" stroke="#262626" stroke-width="0.55"/>
<line x1="840.1" y1="573.4" x2="837.5" y2="573.2" stroke="#262626" stroke-width="0.55"/>
<line x1="840.1" y1="573.4" x2="838.2" y2="572.1" stroke="#262626" stroke-width="0.55"/>
<line x1="848.9" y1="585.0" x2="850.1" y2="577.2" stroke="#262626" stroke-width="0.7040000000000002"/>
<line x1="850.1" y1="577.2" x2="850.5" y2="571.6" stroke="#262626" stroke-width="0.5632000000000001"/>
<line x1="850.5" y1="571.6" x2="848.7" y2="568.0" stroke="#262626" stroke-width="0.55"/>
<line x1="848.7" y1="568.0" x2="846.1" y2="566.6" stroke="#262626" stroke-width="0.55"/>
<line x1="848.7" y1="568.0" x2="848.9" y2="564.7" stroke="#262626" stroke-width="0.55"/>
<line x1="850.5" y1="571.6" x2="850.4" y2="568.4" stroke="#262626" stroke-width="0.55"/>
<line x1="850.4" y1="568.4" x2="849.2" y2="566.7" stroke="#262626" stroke-width="0.55"/>
<line x1="850.4" y1="568.4" x2="849.8" y2="566.2" stroke="#262626" stroke-width="0.55"/>
<line x1="850.1" y1="577.2" x2="852.0" y2="573.1" stroke="#262626" stroke-width="0.5632000000000001"/>
<line x1="852.0" y1="573.1" x2="854.6" y2="570.9" stroke="#262626" stroke-width="0.55"/>
<line x1="854.6" y1="570.9" x2="857.0" y2="569.3" stroke="#262626" stroke-width="0.55"/>
<line x1="854.6" y1="570.9" x2="857.4" y2="570.3" stroke="#262626" stroke-width="0.55"/>
<line x1="852.0" y1="573.1" x2="853.5" y2="569.8" stroke="#262626" stroke-width="0.55"/>
<line x1="853.5" y1="569.8" x2="853.9" y2="567.2" stroke="#262626" stroke-width="0.55"/>
<line x1="853.5" y1="569.8" x2="854.2" y2="567.3" stroke="#262626" stroke-width="0.55"/>
<line x1="850.4" y1="594.6" x2="850.9" y2="581.5" stroke="#262626" stroke-width="0.8800000000000001"/>
<line x1="850.9" y1="581.5" x2="851.6" y2="573.3" stroke="#262626" stroke-width="0.7040000000000002"/>
<line x1="851.6" y1="573.3" x2="851.5" y2="567.7" stroke="#262626" stroke-width="0.5632000000000001"/>
<line x1="851.5" y1="567.7" x2="850.2" y2="564.0" stroke="#262626" stroke-width="0.55"/>
<line x1="850.2" y1="564.0" x2="847.5" y2="562.1" stroke="#262626" stroke-width="0.55"/>
<line x1="850.2" y1="564.0" x2="848.4" y2="561.8" stroke="#262626" stroke-width="0.55"/>
<line x1="851.5" y1="567.7" x2="851.0" y2="563.7" stroke="#262626" stroke-width="0.55"/>
<line x1="851.0" y1="563.7" x2="850.0" y2="561.4" stroke="#262626" stroke-width="0.55"/>
<line x1="851.0" y1="563.7" x2="852.0" y2="561.5" stroke="#262626" stroke-width="0.55"/>
<line x1="851.6" y1="573.3" x2="851.8" y2="568.6" stroke="#262626" stroke-width="0.5632000000000001"/>
<line x1="851.8" y1="568.6" x2="853.6" y2="565.5" stroke="#262626" stroke-width="0.55"/>
<line x1="853.6" y1="565.5" x2="854.8" y2="563.2" stroke="#262626" stroke-width="0.55"/>
<line x1="853.6" y1="565.5" x2="854.3" y2="562.8" stroke="#262626" stroke-width="0.55"/>
<line x1="851.8" y1="568.6" x2="851.0" y2="565.8" stroke="#262626" stroke-width="0.55"/>
<line x1="851.0" y1="565.8" x2="850.6" y2="564.0" stroke="#262626" stroke-width="0.55"/>
<line x1="851.0" y1="565.8" x2="850.8" y2="563.8" stroke="#262626" stroke-width="0.55"/>
<line x1="850.9" y1="581.5" x2="856.1" y2="572.3" stroke="#262626" stroke-width="0.7040000000000002"/>
<line x1="856.1" y1="572.3" x2="861.4" y2="569.1" stroke="#262626" stroke-width="0.5632000000000001"/>
<line x1="861.4" y1="569.1" x2="864.8" y2="566.6" stroke="#262626" stroke-width="0.55"/>
<line x1="864.8" y1="566.6" x2="866.6" y2="564.6" stroke="#262626" stroke-width="0.55"/>
<line x1="864.8" y1="566.6" x2="867.5" y2="566.3" stroke="#262626" stroke-width="0.55"/>
<line x1="861.4" y1="569.1" x2="865.7" y2="567.4" stroke="#262626" stroke-width="0.55"/>
<line x1="865.7" y1="567.4" x2="868.4" y2="566.8" stroke="#262626" stroke-width="0.55"/>
<line x1="865.7" y1="567.4" x2="867.8" y2="564.9" stroke="#262626" stroke-width="0.55"/>
<line x1="856.1" y1="572.3" x2="856.1" y2="563.6" stroke="#262626" stroke-width="0.5632000000000001"/>
<line x1="856.1" y1="563.6" x2="857.8" y2="558.1" stroke="#262626" stroke-width="0.55"/>
<line x1="857.8" y1="558.1" x2="859.5" y2="554.7" stroke="#262626" stroke-width="0.55"/>
<line x1="857.8" y1="558.1" x2="857.6" y2="554.0" stroke="#262626" stroke-width="0.55"/>
<line x1="856.1" y1="563.6" x2="853.7" y2="558.6" stroke="#262626" stroke-width="0.55"/>
<line x1="853.7" y1="558.6" x2="854.1" y2="554.7" stroke="#262626" stroke-width="0.55"/>
<line x1="853.7" y1="558.6" x2="851.4" y2="556.5" stroke="#262626" stroke-width="0.55"/>
<line x1="851.0" y1="612.0" x2="840.4" y2="593.6" stroke="#262626" stroke-width="1.1"/>
<line x1="840.4" y1="593.6" x2="840.1" y2="577.9" stroke="#262626" stroke-width="0.8800000000000001"/>
<line x1="840.1" y1="577.9" x2="844.9" y2="566.8" stroke="#262626" stroke-width="0.7040000000000002"/>
<line x1="844.9" y1="566.8" x2="846.5" y2="559.4" stroke="#262626" stroke-width="0.5632000000000001"/>
<line x1="846.5" y1="559.4" x2="849.7" y2="554.4" stroke="#262626" stroke-width="0.55"/>
<line x1="849.7" y1="554.4" x2="852.0" y2="550.4" stroke="#262626" stroke-width="0.55"/>
<line x1="849.7" y1="554.4" x2="851.9" y2="550.9" stroke="#262626" stroke-width="0.55"/>
<line x1="846.5" y1="559.4" x2="845.6" y2="553.8" stroke="#262626" stroke-width="0.55"/>
<line x1="845.6" y1="553.8" x2="843.1" y2="550.1" stroke="#262626" stroke-width="0.55"/>
<line x1="845.6" y1="553.8" x2="844.8" y2="549.6" stroke="#262626" stroke-width="0.55"/>
<line x1="844.9" y1="566.8" x2="846.0" y2="556.6" stroke="#262626" stroke-width="0.5632000000000001"/>
<line x1="846.0" y1="556.6" x2="847.6" y2="550.6" stroke="#262626" stroke-width="0.55"/>
<line x1="847.6" y1="550.6" x2="850.1" y2="547.2" stroke="#262626" stroke-width="0.55"/>
<line x1="847.6" y1="550.6" x2="850.7" y2="547.2" stroke="#262626" stroke-width="0.55"/>
<line x1="846.0" y1="556.6" x2="846.1" y2="548.1" stroke="#262626" stroke-width="0.55"/>
<line x1="846.1" y1="548.1" x2="848.8" y2="544.0" stroke="#262626" stroke-width="0.55"/>
<line x1="846.1" y1="548.1" x2="845.6" y2="542.9" stroke="#262626" stroke-width="0.55"/>
<line x1="840.1" y1="577.9" x2="842.3" y2="567.0" stroke="#262626" stroke-width="0.7040000000000002"/>
<line x1="842.3" y1="567.0" x2="841.0" y2="559.3" stroke="#262626" stroke-width="0.5632000000000001"/>
<line x1="841.0" y1="559.3" x2="841.7" y2="553.0" stroke="#262626" stroke-width="0.55"/>
<line x1="841.7" y1="553.0" x2="840.1" y2="549.2" stroke="#262626" stroke-width="0.55"/>
<line x1="841.7" y1="553.0" x2="844.9" y2="548.8" stroke="#262626" stroke-width="0.55"/>
<line x1="841.0" y1="559.3" x2="841.6" y2="552.7" stroke="#262626" stroke-width="0.55"/>
<line x1="841.6" y1="552.7" x2="841.2" y2="548.7" stroke="#262626" stroke-width="0.55"/>
<line x1="841.6" y1="552.7" x2="840.8" y2="548.0" stroke="#262626" stroke-width="0.55"/>
<line x1="842.3" y1="567.0" x2="840.5" y2="559.3" stroke="#262626" stroke-width="0.5632000000000001"/>
<line x1="840.5" y1="559.3" x2="837.8" y2="553.1" stroke="#262626" stroke-width="0.55"/>
<line x1="837.8" y1="553.1" x2="837.2" y2="548.4" stroke="#262626" stroke-width="0.55"/>
<line x1="837.8" y1="553.1" x2="833.9" y2="549.5" stroke="#262626" stroke-width="0.55"/>
<line x1="840.5" y1="559.3" x2="839.3" y2="554.0" stroke="#262626" stroke-width="0.55"/>
<line x1="839.3" y1="554.0" x2="836.5" y2="551.1" stroke="#262626" stroke-width="0.55"/>
<line x1="839.3" y1="554.0" x2="837.2" y2="551.6" stroke="#262626" stroke-width="0.55"/>
<line x1="840.4" y1="593.6" x2="838.6" y2="576.8" stroke="#262626" stroke-width="0.8800000000000001"/>
<line x1="838.6" y1="576.8" x2="839.8" y2="566.0" stroke="#262626" stroke-width="0.7040000000000002"/>
<line x1="839.8" y1="566.0" x2="843.9" y2="560.3" stroke="#262626" stroke-width="0.5632000000000001"/>
<line x1="843.9" y1="560.3" x2="847.2" y2="556.1" stroke="#262626" stroke-width="0.55"/>
<line x1="847.2" y1="556.1" x2="850.2" y2="553.3" stroke="#262626" stroke-width="0.55"/>
<line x1="847.2" y1="556.1" x2="848.3" y2="552.2" stroke="#262626" stroke-width="0.55"/>
<line x1="843.9" y1="560.3" x2="846.4" y2="556.2" stroke="#262626" stroke-width="0.55"/>
<line x1="846.4" y1="556.2" x2="850.1" y2="554.5" stroke="#262626" stroke-width="0.55"/>
<line x1="846.4" y1="556.2" x2="848.6" y2="553.5" stroke="#262626" stroke-width="0.55"/>
<line x1="839.8" y1="566.0" x2="842.5" y2="559.9" stroke="#262626" stroke-width="0.5632000000000001"/>
<line x1="842.5" y1="559.9" x2="843.0" y2="555.6" stroke="#262626" stroke-width="0.55"/>
<line x1="843.0" y1="555.6" x2="841.8" y2="552.7" stroke="#262626" stroke-width="0.55"/>
<line x1="843.0" y1="555.6" x2="844.4" y2="553.5" stroke="#262626" stroke-width="0.55"/>
<line x1="842.5" y1="559.9" x2="842.5" y2="555.0" stroke="#262626" stroke-width="0.55"/>
<line x1="842.5" y1="555.0" x2="843.9" y2="552.4" stroke="#262626" stroke-width="0.55"/>
<line x1="842.5" y1="555.0" x2="840.9" y2="552.1" stroke="#262626" stroke-width="0.55"/>
<line x1="838.6" y1="576.8" x2="838.9" y2="565.8" stroke="#262626" stroke-width="0.7040000000000002"/>
<line x1="838.9" y1="565.8" x2="839.7" y2="559.7" stroke="#262626" stroke-width="0.5632000000000001"/>
<line x1="839.7" y1="559.7" x2="840.8" y2="555.2" stroke="#262626" stroke-width="0.55"/>
<line x1="840.8" y1="555.2" x2="839.6" y2="551.8" stroke="#262626" stroke-width="0.55"/>
<line x1="840.8" y1="555.2" x2="842.3" y2="552.1" stroke="#262626" stroke-width="0.55"/>
<line x1="839.7" y1="559.7" x2="838.5" y2="555.4" stroke="#262626" stroke-width="0.55"/>
<line x1="838.5" y1="555.4" x2="839.0" y2="552.0" stroke="#262626" stroke-width="0.55"/>
<line x1="838.5" y1="555.4" x2="839.1" y2="552.0" stroke="#262626" stroke-width="0.55"/>
<line x1="838.9" y1="565.8" x2="842.3" y2="557.3" stroke="#262626" stroke-width="0.5632000000000001"/>
<line x1="842.3" y1="557.3" x2="843.7" y2="551.9" stroke="#262626" stroke-width="0.55"/>
<line x1="843.7" y1="551.9" x2="846.0" y2="549.3" stroke="#262626" stroke-width="0.55"/>
<line x1="843.7" y1="551.9" x2="845.2" y2="548.3" stroke="#262626" stroke-width="0.55"/>
<line x1="842.3" y1="557.3" x2="844.5" y2="551.1" stroke="#262626" stroke-width="0.55"/>
<line x1="844.5" y1="551.1" x2="845.6" y2="547.1" stroke="#262626" stroke-width="0.55"/>
<line x1="844.5" y1="551.1" x2="848.3" y2="547.4" stroke="#262626" stroke-width="0.55"/>
<line x1="856.0" y1="606.0" x2="845.7" y2="594.4" stroke="#262626" stroke-width="1.1"/>
<line x1="845.7" y1="594.4" x2="839.4" y2="588.2" stroke="#262626" stroke-width="0.8800000000000001"/>
<line x1="839.4" y1="588.2" x2="838.2" y2="582.9" stroke="#262626" stroke-width="0.7040000000000002"/>
<line x1="838.2" y1="582.9" x2="835.0" y2="579.9" stroke="#262626" stroke-width="0.5632000000000001"/>
<line x1="835.0" y1="579.9" x2="832.6" y2="578.3" stroke="#262626" stroke-width="0.55"/>
<line x1="832.6" y1="578.3" x2="830.6" y2="577.5" stroke="#262626" stroke-width="0.55"/>
<line x1="832.6" y1="578.3" x2="831.4" y2="576.7" stroke="#262626" stroke-width="0.55"/>
<line x1="835.0" y1="579.9" x2="832.9" y2="578.0" stroke="#262626" stroke-width="0.55"/>
<line x1="832.9" y1="578.0" x2="831.5" y2="576.9" stroke="#262626" stroke-width="0.55"/>
<line x1="832.9" y1="578.0" x2="830.9" y2="577.6" stroke="#262626" stroke-width="0.55"/>
<line x1="838.2" y1="582.9" x2="836.1" y2="579.4" stroke="#262626" stroke-width="0.5632000000000001"/>
<line x1="836.1" y1="579.4" x2="834.4" y2="576.3" stroke="#262626" stroke-width="0.55"/>
<line x1="834.4" y1="576.3" x2="832.1" y2="574.6" stroke="#262626" stroke-width="0.55"/>
<line x1="834.4" y1="576.3" x2="833.1" y2="574.2" stroke="#262626" stroke-width="0.55"/>
<line x1="836.1" y1="579.4" x2="833.7" y2="577.0" stroke="#262626" stroke-width="0.55"/>
<line x1="833.7" y1="577.0" x2="831.5" y2="575.8" stroke="#262626" stroke-width="0.55"/>
<line x1="833.7" y1="577.0" x2="832.9" y2="574.8" stroke="#262626" stroke-width="0.55"/>
<line x1="839.4" y1="588.2" x2="835.4" y2="584.4" stroke="#262626" stroke-width="0.7040000000000002"/>
<line x1="835.4" y1="584.4" x2="833.4" y2="581.3" stroke="#262626" stroke-width="0.5632000000000001"/>
<line x1="833.4" y1="581.3" x2="832.8" y2="579.3" stroke="#262626" stroke-width="0.55"/>
<line x1="832.8" y1="579.3" x2="831.6" y2="578.0" stroke="#262626" stroke-width="0.55"/>
<line x1="832.8" y1="579.3" x2="832.9" y2="577.7" stroke="#262626" stroke-width="0.55"/>
<line x1="833.4" y1="581.3" x2="833.0" y2="578.7" stroke="#262626" stroke-width="0.55"/>
<line x1="833.0" y1="578.7" x2="832.1" y2="577.6" stroke="#262626" stroke-width="0.55"/>
<line x1="833.0" y1="578.7" x2="831.8" y2="577.0" stroke="#262626" stroke-width="0.55"/>
<line x1="835.4" y1="584.4" x2="834.3" y2="580.0" stroke="#262626" stroke-width="0.5632000000000001"/>
<line x1="834.3" y1="580.0" x2="834.2" y2="576.8" stroke="#262626" stroke-width="0.55"/>
<line x1="834.2" y1="576.8" x2="832.8" y2="574.6" stroke="#262626" stroke-width="0.55"/>
<line x1="834.2" y1="576.8" x2="833.3" y2="575.2" stroke="#262626" stroke-width="0.55"/>
<line x1="834.3" y1="580.0" x2="831.8" y2="577.1" stroke="#262626" stroke-width="0.55"/>
<line x1="831.8" y1="577.1" x2="830.8" y2="574.4" stroke="#262626" stroke-width="0.55"/>
<line x1="831.8" y1="577.1" x2="829.7" y2="575.7" stroke="#262626" stroke-width="0.55"/>
<line x1="845.7" y1="594.4" x2="835.1" y2="587.1" stroke="#262626" stroke-width="0.8800000000000001"/>
<line x1="835.1" y1="587.1" x2="829.4" y2="582.5" stroke="#262626" stroke-width="0.7040000000000002"/>
<line x1="829.4" y1="582.5" x2="826.8" y2="578.5" stroke="#262626" stroke-width="0.5632000000000001"/>
<line x1="826.8" y1="578.5" x2="824.7" y2="576.5" stroke="#262626" stroke-width="0.55"/>
<line x1="824.7" y1="576.5" x2="824.0" y2="574.9" stroke="#262626" stroke-width="0.55"/>
<line x1="824.7" y1="576.5" x2="822.7" y2="575.9" stroke="#262626" stroke-width="0.55"/>
<line x1="826.8" y1="578.5" x2="825.8" y2="575.1" stroke="#262626" stroke-width="0.55"/>
<line x1="825.8" y1="575.1" x2="826.4" y2="572.2" stroke="#262626" stroke-width="0.55"/>
<line x1="825.8" y1="575.1" x2="824.9" y2="573.1" stroke="#262626" stroke-width="0.55"/>
<line x1="829.4" y1="582.5" x2="825.1" y2="580.8" stroke="#262626" stroke-width="0.5632000000000001"/>
<line x1="825.1" y1="580.8" x2="822.4" y2="578.9" stroke="#262626" stroke-width="0.55"/>
<line x1="822.4" y1="578.9" x2="821.0" y2="576.6" stroke="#262626" stroke-width="0.55"/>
<line x1="822.4" y1="578.9" x2="820.5" y2="577.0" stroke="#262626" stroke-width="0.55"/>
<line x1="825.1" y1="580.8" x2="822.1" y2="579.1" stroke="#262626" stroke-width="0.55"/>
<line x1="822.1" y1="579.1" x2="819.7" y2="578.6" stroke="#262626" stroke-width="0.55"/>
<line x1="822.1" y1="579.1" x2="820.0" y2="579.1" stroke="#262626" stroke-width="0.55"/>
<line x1="835.1" y1="587.1" x2="827.3" y2="580.8" stroke="#262626" stroke-width="0.7040000000000002"/>
<line x1="827.3" y1="580.8" x2="819.8" y2="578.1" stroke="#262626" stroke-width="0.5632000000000001"/>
<line x1="827.3" y1="580.8" x2="822.9" y2="577.2" stroke="#262626" stroke-width="0.5632000000000001"/>
<line x1="822.9" y1="577.2" x2="819.3" y2="574.9" stroke="#262626" stroke-width="0.55"/>
<line x1="822.9" y1="577.2" x2="821.7" y2="573.5" stroke="#262626" stroke-width="0.55"/>
<line x1="821.7" y1="573.5" x2="821.1" y2="570.8" stroke="#262626" stroke-width="0.55"/>
<line x1="821.7" y1="573.5" x2="820.6" y2="570.9" stroke="#262626" stroke-width="0.55"/>
<line x1="856.0" y1="606.0" x2="870.0" y2="597.2" stroke="#262626" stroke-width="1.1"/>
<line x1="870.0" y1="597.2" x2="878.8" y2="589.6" stroke="#262626" stroke-width="0.8800000000000001"/>
<line x1="878.8" y1="589.6" x2="886.6" y2="586.0" stroke="#262626" stroke-width="0.7040000000000002"/>
<line x1="886.6" y1="586.0" x2="893.3" y2="586.5" stroke="#262626" stroke-width="0.5632000000000001"/>
<line x1="893.3" y1="586.5" x2="897.1" y2="588.4" stroke="#262626" stroke-width="0.55"/>
<line x1="897.1" y1="588.4" x2="899.2" y2="590.8" stroke="#262626" stroke-width="0.55"/>
<line x1="897.1" y1="588.4" x2="899.2" y2="589.9" stroke="#262626" stroke-width="0.55"/>
<line x1="893.3" y1="586.5" x2="896.8" y2="584.5" stroke="#262626" stroke-width="0.55"/>
<line x1="896.8" y1="584.5" x2="899.6" y2="583.1" stroke="#262626" stroke-width="0.55"/>
<line x1="896.8" y1="584.5" x2="899.2" y2="583.5" stroke="#262626" stroke-width="0.55"/>
<line x1="886.6" y1="586.0" x2="891.4" y2="581.6" stroke="#262626" stroke-width="0.5632000000000001"/>
<line x1="891.4" y1="581.6" x2="895.1" y2="580.0" stroke="#262626" stroke-width="0.55"/>
<line x1="895.1" y1="580.0" x2="897.4" y2="578.8" stroke="#262626" stroke-width="0.55"/>
<line x1="895.1" y1="580.0" x2="896.7" y2="577.4" stroke="#262626" stroke-width="0.55"/>
<line x1="891.4" y1="581.6" x2="895.6" y2="579.0" stroke="#262626" stroke-width="0.55"/>
<line x1="895.6" y1="579.0" x2="897.6" y2="576.0" stroke="#262626" stroke-width="0.55"/>
<line x1="895.6" y1="579.0" x2="899.2" y2="577.4" stroke="#262626" stroke-width="0.55"/>
<line x1="878.8" y1="589.6" x2="885.6" y2="587.4" stroke="#262626" stroke-width="0.7040000000000002"/>
<line x1="885.6" y1="587.4" x2="890.6" y2="587.6" stroke="#262626" stroke-width="0.5632000000000001"/>
<line x1="890.6" y1="587.6" x2="893.8" y2="588.5" stroke="#262626" stroke-width="0.55"/>
<line x1="893.8" y1="588.5" x2="896.2" y2="587.7" stroke="#262626" stroke-width="0.55"/>
<line x1="893.8" y1="588.5" x2="896.0" y2="588.6" stroke="#262626" stroke-width="0.55"/>
<line x1="890.6" y1="587.6" x2="894.6" y2="588.3" stroke="#262626" stroke-width="0.55"/>
<line x1="894.6" y1="588.3" x2="897.1" y2="588.0" stroke="#262626" stroke-width="0.55"/>
<line x1="894.6" y1="588.3" x2="897.7" y2="587.8" stroke="#262626" stroke-width="0.55"/>
<line x1="885.6" y1="587.4" x2="891.3" y2="588.5" stroke="#262626" stroke-width="0.5632000000000001"/>
<line x1="891.3" y1="588.5" x2="895.5" y2="590.3" stroke="#262626" stroke-width="0.55"/>
<line x1="895.5" y1="590.3" x2="897.9" y2="591.3" stroke="#262626" stroke-width="0.55"/>
<line x1="895.5" y1="590.3" x2="898.0" y2="591.0" stroke="#262626" stroke-width="0.55"/>
<line x1="891.3" y1="588.5" x2="895.0" y2="588.3" stroke="#262626" stroke-width="0.55"/>
<line x1="895.0" y1="588.3" x2="897.6" y2="587.5" stroke="#262626" stroke-width="0.55"/>
<line x1="895.0" y1="588.3" x2="897.4" y2="588.5" stroke="#262626" stroke-width="0.55"/>
<line x1="870.0" y1="597.2" x2="879.0" y2="595.1" stroke="#262626" stroke-width="0.8800000000000001"/>
<line x1="879.0" y1="595.1" x2="885.5" y2="597.5" stroke="#262626" stroke-width="0.7040000000000002"/>
<line x1="885.5" y1="597.5" x2="890.7" y2="598.9" stroke="#262626" stroke-width="0.5632000000000001"/>
<line x1="890.7" y1="598.9" x2="894.0" y2="597.9" stroke="#262626" stroke-width="0.55"/>
<line x1="894.0" y1="597.9" x2="896.5" y2="596.5" stroke="#262626" stroke-width="0.55"/>
<line x1="894.0" y1="597.9" x2="895.6" y2="596.4" stroke="#262626" stroke-width="0.55"/>
<line x1="890.7" y1="598.9" x2="893.2" y2="601.5" stroke="#262626" stroke-width="0.55"/>
<line x1="893.2" y1="601.5" x2="894.6" y2="603.6" stroke="#262626" stroke-width="0.55"/>
<line x1="893.2" y1="601.5" x2="894.2" y2="604.0" stroke="#262626" stroke-width="0.55"/>
<line x1="885.5" y1="597.5" x2="889.0" y2="600.9" stroke="#262626" stroke-width="0.5632000000000001"/>
<line x1="889.0" y1="600.9" x2="892.1" y2="602.7" stroke="#262626" stroke-width="0.55"/>
<line x1="892.1" y1="602.7" x2="894.0" y2="603.3" stroke="#262626" stroke-width="0.55"/>
<line x1="892.1" y1="602.7" x2="893.3" y2="604.9" stroke="#262626" stroke-width="0.55"/>
<line x1="889.0" y1="600.9" x2="889.8" y2="604.1" stroke="#262626" stroke-width="0.55"/>
<line x1="889.8" y1="604.1" x2="891.3" y2="605.9" stroke="#262626" stroke-width="0.55"/>
<line x1="889.8" y1="604.1" x2="890.8" y2="606.6" stroke="#262626" stroke-width="0.55"/>
<line x1="879.0" y1="595.1" x2="885.4" y2="592.6" stroke="#262626" stroke-width="0.7040000000000002"/>
<line x1="885.4" y1="592.6" x2="889.8" y2="591.4" stroke="#262626" stroke-width="0.5632000000000001"/>
<line x1="889.8" y1="591.4" x2="893.5" y2="591.4" stroke="#262626" stroke-width="0.55"/>
<line x1="893.5" y1="591.4" x2="895.7" y2="590.3" stroke="#262626" stroke-width="0.55"/>
<line x1="893.5" y1="591.4" x2="895.9" y2="591.9" stroke="#262626" stroke-width="0.55"/>
<line x1="889.8" y1="591.4" x2="892.4" y2="590.1" stroke="#262626" stroke-width="0.55"/>
<line x1="892.4" y1="590.1" x2="894.4" y2="590.3" stroke="#262626" stroke-width="0.55"/>
<line x1="892.4" y1="590.1" x2="894.2" y2="589.0" stroke="#262626" stroke-width="0.55"/>
<line x1="885.4" y1="592.6" x2="890.8" y2="591.6" stroke="#262626" stroke-width="0.5632000000000001"/>
<line x1="890.8" y1="591.6" x2="895.1" y2="591.7" stroke="#262626" stroke-width="0.55"/>
<line x1="895.1" y1="591.7" x2="898.3" y2="591.0" stroke="#262626" stroke-width="0.55"/>
<line x1="895.1" y1="591.7" x2="898.2" y2="591.8" stroke="#262626" stroke-width="0.55"/>
<line x1="890.8" y1="591.6" x2="894.3" y2="592.0" stroke="#262626" stroke-width="0.55"/>
<line x1="894.3" y1="592.0" x2="896.3" y2="592.7" stroke="#262626" stroke-width="0.55"/>
<line x1="894.3" y1="592.0" x2="896.5" y2="593.5" stroke="#262626" stroke-width="0.55"/>
<line x1="856.0" y1="606.0" x2="870.1" y2="590.6" stroke="#262626" stroke-width="1.1"/>
<line x1="870.1" y1="590.6" x2="873.6" y2="579.3" stroke="#262626" stroke-width="0.8800000000000001"/>
<line x1="873.6" y1="579.3" x2="878.3" y2="572.4" stroke="#262626" stroke-width="0.7040000000000002"/>
<line x1="878.3" y1="572.4" x2="879.6" y2="567.0" stroke="#262626" stroke-width="0.5632000000000001"/>
<line x1="879.6" y1="567.0" x2="879.5" y2="563.5" stroke="#262626" stroke-width="0.55"/>
<line x1="879.5" y1="563.5" x2="878.9" y2="561.3" stroke="#262626" stroke-width="0.55"/>
<line x1="879.5" y1="563.5" x2="879.3" y2="561.1" stroke="#262626" stroke-width="0.55"/>
<line x1="879.6" y1="567.0" x2="881.9" y2="564.1" stroke="#262626" stroke-width="0.55"/>
<line x1="881.9" y1="564.1" x2="883.0" y2="562.1" stroke="#262626" stroke-width="0.55"/>
<line x1="881.9" y1="564.1" x2="882.2" y2="562.0" stroke="#262626" stroke-width="0.55"/>
<line x1="878.3" y1="572.4" x2="878.8" y2="565.3" stroke="#262626" stroke-width="0.5632000000000001"/>
<line x1="878.8" y1="565.3" x2="881.9" y2="560.9" stroke="#262626" stroke-width="0.55"/>
<line x1="881.9" y1="560.9" x2="884.6" y2="559.5" stroke="#262626" stroke-width="0.55"/>
<line x1="881.9" y1="560.9" x2="884.1" y2="558.9" stroke="#262626" stroke-width="0.55"/>
<line x1="878.8" y1="565.3" x2="877.2" y2="559.9" stroke="#262626" stroke-width="0.55"/>
<line x1="877.2" y1="559.9" x2="877.1" y2="556.2" stroke="#262626" stroke-width="0.55"/>
<line x1="877.2" y1="559.9" x2="875.2" y2="556.4" stroke="#262626" stroke-width="0.55"/>
<line x1="873.6" y1="579.3" x2="872.0" y2="572.0" stroke="#262626" stroke-width="0.7040000000000002"/>
<line x1="872.0" y1="572.0" x2="871.1" y2="567.8" stroke="#262626" stroke-width="0.5632000000000001"/>
<line x1="871.1" y1="567.8" x2="871.1" y2="565.4" stroke="#262626" stroke-width="0.55"/>
<line x1="871.1" y1="565.4" x2="871.0" y2="563.9" stroke="#262626" stroke-width="0.55"/>
<line x1="871.1" y1="565.4" x2="871.4" y2="563.9" stroke="#262626" stroke-width="0.55"/>
<line x1="871.1" y1="567.8" x2="871.9" y2="565.3" stroke="#262626" stroke-width="0.55"/>
<line x1="871.9" y1="565.3" x2="872.6" y2="563.1" stroke="#262626" stroke-width="0.55"/>
<line x1="871.9" y1="565.3" x2="871.8" y2="563.5" stroke="#262626" stroke-width="0.55"/>
<line x1="872.0" y1="572.0" x2="872.3" y2="565.9" stroke="#262626" stroke-width="0.5632000000000001"/>
<line x1="872.3" y1="565.9" x2="870.3" y2="561.0" stroke="#262626" stroke-width="0.55"/>
<line x1="870.3" y1="561.0" x2="869.0" y2="557.1" stroke="#262626" stroke-width="0.55"/>
<line x1="870.3" y1="561.0" x2="870.5" y2="558.1" stroke="#262626" stroke-width="0.55"/>
<line x1="872.3" y1="565.9" x2="874.5" y2="562.8" stroke="#262626" stroke-width="0.55"/>
<line x1="874.5" y1="562.8" x2="874.7" y2="560.7" stroke="#262626" stroke-width="0.55"/>
<line x1="874.5" y1="562.8" x2="876.6" y2="560.6" stroke="#262626" stroke-width="0.55"/>
<line x1="870.1" y1="590.6" x2="873.0" y2="576.8" stroke="#262626" stroke-width="0.8800000000000001"/>
<line x1="873.0" y1="576.8" x2="872.6" y2="568.1" stroke="#262626" stroke-width="0.7040000000000002"/>
<line x1="872.6" y1="568.1" x2="870.1" y2="563.9" stroke="#262626" stroke-width="0.5632000000000001"/>
<line x1="870.1" y1="563.9" x2="868.3" y2="561.4" stroke="#262626" stroke-width="0.55"/>
<line x1="868.3" y1="561.4" x2="867.4" y2="559.7" stroke="#262626" stroke-width="0.55"/>
<line x1="868.3" y1="561.4" x2="867.5" y2="559.7" stroke="#262626" stroke-width="0.55"/>
<line x1="870.1" y1="563.9" x2="867.9" y2="561.8" stroke="#262626" stroke-width="0.55"/>
<line x1="867.9" y1="561.8" x2="865.9" y2="560.9" stroke="#262626" stroke-width="0.55"/>
<line x1="867.9" y1="561.8" x2="866.6" y2="560.2" stroke="#262626" stroke-width="0.55"/>
<line x1="872.6" y1="568.1" x2="871.9" y2="560.8" stroke="#262626" stroke-width="0.5632000000000001"/>
<line x1="871.9" y1="560.8" x2="873.5" y2="555.0" stroke="#262626" stroke-width="0.55"/>
<line x1="873.5" y1="555.0" x2="875.6" y2="550.9" stroke="#262626" stroke-width="0.55"/>
<line x1="873.5" y1="555.0" x2="875.8" y2="551.7" stroke="#262626" stroke-width="0.55"/>
<line x1="871.9" y1="560.8" x2="869.1" y2="556.9" stroke="#262626" stroke-width="0.55"/>
<line x1="869.1" y1="556.9" x2="868.4" y2="553.9" stroke="#262626" stroke-width="0.55"/>
<line x1="869.1" y1="556.9" x2="867.1" y2="554.9" stroke="#262626" stroke-width="0.55"/>
<line x1="873.0" y1="576.8" x2="874.9" y2="566.9" stroke="#262626" stroke-width="0.7040000000000002"/>
<line x1="874.9" y1="566.9" x2="879.9" y2="560.5" stroke="#262626" stroke-width="0.5632000000000001"/>
<line x1="879.9" y1="560.5" x2="882.2" y2="555.5" stroke="#262626" stroke-width="0.55"/>
<line x1="882.2" y1="555.5" x2="883.1" y2="551.8" stroke="#262626" stroke-width="0.55"/>
<line x1="882.2" y1="555.5" x2="883.5" y2="552.6" stroke="#262626" stroke-width="0.55"/>
<line x1="879.9" y1="560.5" x2="880.6" y2="555.7" stroke="#262626" stroke-width="0.55"/>
<line x1="880.6" y1="555.7" x2="881.3" y2="551.7" stroke="#262626" stroke-width="0.55"/>
<line x1="880.6" y1="555.7" x2="881.6" y2="551.9" stroke="#262626" stroke-width="0.55"/>
<line x1="874.9" y1="566.9" x2="873.3" y2="559.5" stroke="#262626" stroke-width="0.5632000000000001"/>
<line x1="873.3" y1="559.5" x2="869.3" y2="555.1" stroke="#262626" stroke-width="0.55"/>
<line x1="869.3" y1="555.1" x2="865.5" y2="553.2" stroke="#262626" stroke-width="0.55"/>
<line x1="869.3" y1="555.1" x2="867.3" y2="550.8" stroke="#262626" stroke-width="0.55"/>
<line x1="873.3" y1="559.5" x2="873.6" y2="554.0" stroke="#262626" stroke-width="0.55"/>
<line x1="873.6" y1="554.0" x2="875.8" y2="550.6" stroke="#262626" stroke-width="0.55"/>
<line x1="873.6" y1="554.0" x2="872.0" y2="549.9" stroke="#262626" stroke-width="0.55"/>
<line x1="856.0" y1="606.0" x2="860.3" y2="591.8" stroke="#262626" stroke-width="1.1"/>
<line x1="860.3" y1="591.8" x2="867.6" y2="585.5" stroke="#262626" stroke-width="0.8800000000000001"/>
<line x1="867.6" y1="585.5" x2="870.7" y2="578.4" stroke="#262626" stroke-width="0.7040000000000002"/>
<line x1="870.7" y1="578.4" x2="874.3" y2="575.4" stroke="#262626" stroke-width="0.5632000000000001"/>
<line x1="874.3" y1="575.4" x2="877.5" y2="573.3" stroke="#262626" stroke-width="0.55"/>
<line x1="877.5" y1="573.3" x2="879.8" y2="571.3" stroke="#262626" stroke-width="0.55"/>
<line x1="877.5" y1="573.3" x2="879.0" y2="570.9" stroke="#262626" stroke-width="0.55"/>
<line x1="874.3" y1="575.4" x2="876.9" y2="573.9" stroke="#262626" stroke-width="0.55"/>
<line x1="876.9" y1="573.9" x2="878.4" y2="572.7" stroke="#262626" stroke-width="0.55"/>
<line x1="876.9" y1="573.9" x2="878.5" y2="572.5" stroke="#262626" stroke-width="0.55"/>
<line x1="870.7" y1="578.4" x2="873.3" y2="574.4" stroke="#262626" stroke-width="0.5632000000000001"/>
<line x1="873.3" y1="574.4" x2="873.3" y2="570.9" stroke="#262626" stroke-width="0.55"/>
<line x1="873.3" y1="570.9" x2="872.6" y2="568.6" stroke="#262626" stroke-width="0.55"/>
<line x1="873.3" y1="570.9" x2="873.5" y2="568.0" stroke="#262626" stroke-width="0.55"/>
<line x1="873.3" y1="574.4" x2="875.8" y2="571.9" stroke="#262626" stroke-width="0.55"/>
<line x1="875.8" y1="571.9" x2="878.1" y2="570.6" stroke="#262626" stroke-width="0.55"/>
<line x1="875.8" y1="571.9" x2="877.1" y2="569.8" stroke="#262626" stroke-width="0.55"/>
<line x1="867.6" y1="585.5" x2="871.9" y2="582.1" stroke="#262626" stroke-width="0.7040000000000002"/>
<line x1="871.9" y1="582.1" x2="874.9" y2="580.2" stroke="#262626" stroke-width="0.5632000000000001"/>
<line x1="874.9" y1="580.2" x2="877.5" y2="578.9" stroke="#262626" stroke-width="0.55"/>
<line x1="877.5" y1="578.9" x2="879.6" y2="578.3" stroke="#262626" stroke-width="0.55"/>
<line x1="877.5" y1="578.9" x2="878.5" y2="577.4" stroke="#262626" stroke-width="0.55"/>
<line x1="874.9" y1="580.2" x2="876.9" y2="578.7" stroke="#262626" stroke-width="0.55"/>
<line x1="876.9" y1="578.7" x2="878.9" y2="578.3" stroke="#262626" stroke-width="0.55"/>
<line x1="876.9" y1="578.7" x2="877.9" y2="577.4" stroke="#262626" stroke-width="0.55"/>
<line x1="871.9" y1="582.1" x2="874.9" y2="580.0" stroke="#262626" stroke-width="0.5632000000000001"/>
<line x1="874.9" y1="580.0" x2="876.8" y2="578.7" stroke="#262626" stroke-width="0.55"/>
<line x1="876.8" y1="578.7" x2="878.1" y2="577.5" stroke="#262626" stroke-width="0.55"/>
<line x1="876.8" y1="578.7" x2="877.8" y2="577.3" stroke="#262626" stroke-width="0.55"/>
<line x1="874.9" y1="580.0" x2="877.3" y2="578.7" stroke="#262626" stroke-width="0.55"/>
<line x1="877.3" y1="578.7" x2="879.5" y2="578.3" stroke="#262626" stroke-width="0.55"/>
<line x1="877.3" y1="578.7" x2="878.4" y2="577.6" stroke="#262626" stroke-width="0.55"/>
<line x1="860.3" y1="591.8" x2="866.8" y2="582.1" stroke="#262626" stroke-width="0.8800000000000001"/>
<line x1="866.8" y1="582.1" x2="869.7" y2="573.3" stroke="#262626" stroke-width="0.7040000000000002"/>
<line x1="869.7" y1="573.3" x2="874.1" y2="568.8" stroke="#262626" stroke-width="0.5632000000000001"/>
<line x1="874.1" y1="568.8" x2="879.1" y2="567.7" stroke="#262626" stroke-width="0.55"/>
<line x1="879.1" y1="567.7" x2="882.2" y2="564.8" stroke="#262626" stroke-width="0.55"/>
<line x1="879.1" y1="567.7" x2="883.0" y2="568.7" stroke="#262626" stroke-width="0.55"/>
<line x1="874.1" y1="568.8" x2="877.5" y2="567.5" stroke="#262626" stroke-width="0.55"/>
<line x1="877.5" y1="567.5" x2="879.7" y2="566.7" stroke="#262626" stroke-width="0.55"/>
<line x1="877.5" y1="567.5" x2="880.0" y2="567.5" stroke="#262626" stroke-width="0.55"/>
<line x1="869.7" y1="573.3" x2="869.1" y2="567.9" stroke="#262626" stroke-width="0.5632000000000001"/>
<line x1="869.1" y1="567.9" x2="866.7" y2="564.8" stroke="#262626" stroke-width="0.55"/>
<line x1="866.7" y1="564.8" x2="865.2" y2="562.4" stroke="#262626" stroke-width="0.55"/>
<line x1="866.7" y1="564.8" x2="865.9" y2="561.9" stroke="#262626" stroke-width="0.55"/>
<line x1="869.1" y1="567.9" x2="870.5" y2="565.0" stroke="#262626" stroke-width="0.55"/>
<line x1="870.5" y1="565.0" x2="872.3" y2="563.0" stroke="#262626" stroke-width="0.55"/>
<line x1="870.5" y1="565.0" x2="872.2" y2="563.9" stroke="#262626" stroke-width="0.55"/>
<line x1="866.8" y1="582.1" x2="870.6" y2="573.3" stroke="#262626" stroke-width="0.7040000000000002"/>
<line x1="870.6" y1="573.3" x2="869.7" y2="566.4" stroke="#262626" stroke-width="0.5632000000000001"/>
<line x1="869.7" y1="566.4" x2="869.0" y2="560.8" stroke="#262626" stroke-width="0.55"/>
<line x1="869.0" y1="560.8" x2="869.0" y2="557.2" stroke="#262626" stroke-width="0.55"/>
<line x1="869.0" y1="560.8" x2="868.6" y2="557.1" stroke="#262626" stroke-width="0.55"/>
<line x1="869.7" y1="566.4" x2="871.6" y2="561.9" stroke="#262626" stroke-width="0.55"/>
<line x1="871.6" y1="561.9" x2="872.7" y2="558.8" stroke="#262626" stroke-width="0.55"/>
<line x1="871.6" y1="561.9" x2="872.9" y2="559.2" stroke="#262626" stroke-width="0.55"/>
<line x1="870.6" y1="573.3" x2="869.8" y2="568.1" stroke="#262626" stroke-width="0.5632000000000001"/>
<line x1="869.8" y1="568.1" x2="868.7" y2="563.8" stroke="#262626" stroke-width="0.55"/>
<line x1="868.7" y1="563.8" x2="868.3" y2="560.6" stroke="#262626" stroke-width="0.55"/>
<line x1="868.7" y1="563.8" x2="868.5" y2="560.7" stroke="#262626" stroke-width="0.55"/>
<line x1="869.8" y1="568.1" x2="870.3" y2="564.7" stroke="#262626" stroke-width="0.55"/>
<line x1="870.3" y1="564.7" x2="869.8" y2="562.5" stroke="#262626" stroke-width="0.55"/>
<line x1="870.3" y1="564.7" x2="872.0" y2="562.5" stroke="#262626" stroke-width="0.55"/>
<line x1="862.0" y1="604.0" x2="850.7" y2="588.6" stroke="#262626" stroke-width="1.1"/>
<line x1="850.7" y1="588.6" x2="849.1" y2="573.8" stroke="#262626" stroke-width="0.8800000000000001"/>
<line x1="849.1" y1="573.8" x2="853.8" y2="563.8" stroke="#262626" stroke-width="0.7040000000000002"/>
<line x1="853.8" y1="563.8" x2="857.2" y2="555.3" stroke="#262626" stroke-width="0.5632000000000001"/>
<line x1="857.2" y1="555.3" x2="858.2" y2="550.4" stroke="#262626" stroke-width="0.55"/>
<line x1="858.2" y1="550.4" x2="857.0" y2="546.6" stroke="#262626" stroke-width="0.55"/>
<line x1="858.2" y1="550.4" x2="858.2" y2="546.1" stroke="#262626" stroke-width="0.55"/>
<line x1="857.2" y1="555.3" x2="857.6" y2="549.3" stroke="#262626" stroke-width="0.55"/>
<line x1="857.6" y1="549.3" x2="858.2" y2="545.2" stroke="#262626" stroke-width="0.55"/>
<line x1="857.6" y1="549.3" x2="860.1" y2="545.2" stroke="#262626" stroke-width="0.55"/>
<line x1="853.8" y1="563.8" x2="859.5" y2="556.6" stroke="#262626" stroke-width="0.5632000000000001"/>
<line x1="859.5" y1="556.6" x2="863.8" y2="550.3" stroke="#262626" stroke-width="0.55"/>
<line x1="863.8" y1="550.3" x2="867.9" y2="547.3" stroke="#262626" stroke-width="0.55"/>
<line x1="863.8" y1="550.3" x2="866.3" y2="546.9" stroke="#262626" stroke-width="0.55"/>
<line x1="859.5" y1="556.6" x2="863.9" y2="551.2" stroke="#262626" stroke-width="0.55"/>
<line x1="863.9" y1="551.2" x2="867.8" y2="547.4" stroke="#262626" stroke-width="0.55"/>
<line x1="863.9" y1="551.2" x2="867.8" y2="548.8" stroke="#262626" stroke-width="0.55"/>
<line x1="849.1" y1="573.8" x2="849.5" y2="563.0" stroke="#262626" stroke-width="0.7040000000000002"/>
<line x1="849.5" y1="563.0" x2="846.9" y2="556.4" stroke="#262626" stroke-width="0.5632000000000001"/>
<line x1="846.9" y1="556.4" x2="844.6" y2="552.1" stroke="#262626" stroke-width="0.55"/>
<line x1="844.6" y1="552.1" x2="841.8" y2="550.5" stroke="#262626" stroke-width="0.55"/>
<line x1="844.6" y1="552.1" x2="842.9" y2="549.5" stroke="#262626" stroke-width="0.55"/>
<line x1="846.9" y1="556.4" x2="845.3" y2="551.4" stroke="#262626" stroke-width="0.55"/>
<line x1="845.3" y1="551.4" x2="843.7" y2="547.3" stroke="#262626" stroke-width="0.55"/>
<line x1="845.3" y1="551.4" x2="843.6" y2="548.9" stroke="#262626" stroke-width="0.55"/>
<line x1="849.5" y1="563.0" x2="849.1" y2="555.3" stroke="#262626" stroke-width="0.5632000000000001"/>
<line x1="849.1" y1="555.3" x2="849.8" y2="550.8" stroke="#262626" stroke-width="0.55"/>
<line x1="849.8" y1="550.8" x2="848.4" y2="547.5" stroke="#262626" stroke-width="0.55"/>
<line x1="849.8" y1="550.8" x2="851.4" y2="547.9" stroke="#262626" stroke-width="0.55"/>
<line x1="849.1" y1="555.3" x2="845.9" y2="549.8" stroke="#262626" stroke-width="0.55"/>
<line x1="845.9" y1="549.8" x2="843.0" y2="546.7" stroke="#262626" stroke-width="0.55"/>
<line x1="845.9" y1="549.8" x2="843.0" y2="547.0" stroke="#262626" stroke-width="0.55"/>
<line x1="850.7" y1="588.6" x2="846.2" y2="577.5" stroke="#262626" stroke-width="0.8800000000000001"/>
<line x1="846.2" y1="577.5" x2="846.6" y2="569.2" stroke="#262626" stroke-width="0.7040000000000002"/>
<line x1="846.6" y1="569.2" x2="848.3" y2="564.2" stroke="#262626" stroke-width="0.5632000000000001"/>
<line x1="848.3" y1="564.2" x2="850.4" y2="561.1" stroke="#262626" stroke-width="0.55"/>
<line x1="850.4" y1="561.1" x2="850.7" y2="558.9" stroke="#262626" stroke-width="0.55"/>
<line x1="850.4" y1="561.1" x2="851.2" y2="558.6" stroke="#262626" stroke-width="0.55"/>
<line x1="848.3" y1="564.2" x2="851.7" y2="561.3" stroke="#262626" stroke-width="0.55"/>
<line x1="851.7" y1="561.3" x2="854.6" y2="559.5" stroke="#262626" stroke-width="0.55"/>
<line x1="851.7" y1="561.3" x2="852.7" y2="558.4" stroke="#262626" stroke-width="0.55"/>
<line x1="846.6" y1="569.2" x2="850.1" y2="563.2" stroke="#262626" stroke-width="0.5632000000000001"/>
<line x1="850.1" y1="563.2" x2="851.4" y2="559.4" stroke="#262626" stroke-width="0.55"/>
<line x1="851.4" y1="559.4" x2="851.1" y2="557.2" stroke="#262626" stroke-width="0.55"/>
<line x1="851.4" y1="559.4" x2="851.1" y2="557.2" stroke="#262626" stroke-width="0.55"/>
<line x1="850.1" y1="563.2" x2="849.8" y2="557.9" stroke="#262626" stroke-width="0.55"/>
<line x1="849.8" y1="557.9" x2="847.9" y2="554.3" stroke="#262626" stroke-width="0.55"/>
<line x1="849.8" y1="557.9" x2="849.5" y2="554.5" stroke="#262626" stroke-width="0.55"/>
<line x1="846.2" y1="577.5" x2="843.7" y2="571.1" stroke="#262626" stroke-width="0.7040000000000002"/>
<line x1="843.7" y1="571.1" x2="842.0" y2="566.5" stroke="#262626" stroke-width="0.5632000000000001"/>
<line x1="842.0" y1="566.5" x2="839.1" y2="564.3" stroke="#262626" stroke-width="0.55"/>
<line x1="839.1" y1="564.3" x2="838.1" y2="562.3" stroke="#262626" stroke-width="0.55"/>
<line x1="839.1" y1="564.3" x2="836.2" y2="564.0" stroke="#262626" stroke-width="0.55"/>
<line x1="842.0" y1="566.5" x2="840.3" y2="563.1" stroke="#262626" stroke-width="0.55"/>
<line x1="840.3" y1="563.1" x2="838.8" y2="560.9" stroke="#262626" stroke-width="0.55"/>
<line x1="840.3" y1="563.1" x2="840.5" y2="561.0" stroke="#262626" stroke-width="0.55"/>
<line x1="843.7" y1="571.1" x2="840.1" y2="567.3" stroke="#262626" stroke-width="0.5632000000000001"/>
<line x1="840.1" y1="567.3" x2="837.4" y2="564.7" stroke="#262626" stroke-width="0.55"/>
<line x1="837.4" y1="564.7" x2="834.8" y2="563.3" stroke="#262626" stroke-width="0.55"/>
<line x1="837.4" y1="564.7" x2="835.1" y2="563.7" stroke="#262626" stroke-width="0.55"/>
<line x1="840.1" y1="567.3" x2="838.3" y2="564.0" stroke="#262626" stroke-width="0.55"/>
<line x1="838.3" y1="564.0" x2="837.1" y2="561.8" stroke="#262626" stroke-width="0.55"/>
<line x1="838.3" y1="564.0" x2="838.1" y2="561.7" stroke="#262626" stroke-width="0.55"/>
<line x1="862.0" y1="604.0" x2="872.5" y2="587.9" stroke="#262626" stroke-width="1.1"/>
<line x1="872.5" y1="587.9" x2="882.8" y2="579.0" stroke="#262626" stroke-width="0.8800000000000001"/>
<line x1="882.8" y1="579.0" x2="892.9" y2="574.6" stroke="#262626" stroke-width="0.7040000000000002"/>
<line x1="892.9" y1="574.6" x2="899.8" y2="574.4" stroke="#262626" stroke-width="0.5632000000000001"/>
<line x1="899.8" y1="574.4" x2="904.1" y2="575.3" stroke="#262626" stroke-width="0.55"/>
<line x1="904.1" y1="575.3" x2="907.5" y2="575.0" stroke="#262626" stroke-width="0.55"/>
<line x1="904.1" y1="575.3" x2="906.5" y2="576.6" stroke="#262626" stroke-width="0.55"/>
<line x1="899.8" y1="574.4" x2="904.8" y2="571.4" stroke="#262626" stroke-width="0.55"/>
<line x1="904.8" y1="571.4" x2="908.0" y2="570.1" stroke="#262626" stroke-width="0.55"/>
<line x1="904.8" y1="571.4" x2="908.2" y2="570.1" stroke="#262626" stroke-width="0.55"/>
<line x1="892.9" y1="574.6" x2="900.6" y2="575.9" stroke="#262626" stroke-width="0.5632000000000001"/>
<line x1="900.6" y1="575.9" x2="904.7" y2="577.3" stroke="#262626" stroke-width="0.55"/>
<line x1="904.7" y1="577.3" x2="907.3" y2="576.8" stroke="#262626" stroke-width="0.55"/>
<line x1="904.7" y1="577.3" x2="907.9" y2="579.0" stroke="#262626" stroke-width="0.55"/>
<line x1="900.6" y1="575.9" x2="905.3" y2="579.2" stroke="#262626" stroke-width="0.55"/>
<line x1="905.3" y1="579.2" x2="909.8" y2="579.9" stroke="#262626" stroke-width="0.55"/>
<line x1="905.3" y1="579.2" x2="908.4" y2="583.0" stroke="#262626" stroke-width="0.55"/>
<line x1="882.8" y1="579.0" x2="890.1" y2="575.3" stroke="#262626" stroke-width="0.7040000000000002"/>
<line x1="890.1" y1="575.3" x2="895.9" y2="575.1" stroke="#262626" stroke-width="0.5632000000000001"/>
<line x1="895.9" y1="575.1" x2="900.1" y2="574.8" stroke="#262626" stroke-width="0.55"/>
<line x1="900.1" y1="574.8" x2="902.9" y2="573.7" stroke="#262626" stroke-width="0.55"/>
<line x1="900.1" y1="574.8" x2="903.3" y2="575.3" stroke="#262626" stroke-width="0.55"/>
<line x1="895.9" y1="575.1" x2="899.6" y2="574.7" stroke="#262626" stroke-width="0.55"/>
<line x1="899.6" y1="574.7" x2="902.4" y2="573.4" stroke="#262626" stroke-width="0.55"/>
<line x1="899.6" y1="574.7" x2="902.6" y2="575.6" stroke="#262626" stroke-width="0.55"/>
<line x1="890.1" y1="575.3" x2="895.0" y2="575.6" stroke="#262626" stroke-width="0.5632000000000001"/>
<line x1="895.0" y1="575.6" x2="898.4" y2="577.2" stroke="#262626" stroke-width="0.55"/>
<line x1="898.4" y1="577.2" x2="899.9" y2="578.8" stroke="#262626" stroke-width="0.55"/>
<line x1="898.4" y1="577.2" x2="900.5" y2="578.3" stroke="#262626" stroke-width="0.55"/>
<line x1="895.0" y1="575.6" x2="898.3" y2="575.3" stroke="#262626" stroke-width="0.55"/>
<line x1="898.3" y1="575.3" x2="900.7" y2="575.2" stroke="#262626" stroke-width="0.55"/>
<line x1="898.3" y1="575.3" x2="900.6" y2="575.4" stroke="#262626" stroke-width="0.55"/>
<line x1="872.5" y1="587.9" x2="873.3" y2="572.4" stroke="#262626" stroke-width="0.8800000000000001"/>
<line x1="873.3" y1="572.4" x2="869.6" y2="563.9" stroke="#262626" stroke-width="0.7040000000000002"/>
<line x1="869.6" y1="563.9" x2="866.5" y2="556.7" stroke="#262626" stroke-width="0.5632000000000001"/>
<line x1="866.5" y1="556.7" x2="865.7" y2="552.0" stroke="#262626" stroke-width="0.55"/>
<line x1="865.7" y1="552.0" x2="864.5" y2="549.4" stroke="#262626" stroke-width="0.55"/>
<line x1="865.7" y1="552.0" x2="866.8" y2="548.6" stroke="#262626" stroke-width="0.55"/>
<line x1="866.5" y1="556.7" x2="864.3" y2="552.0" stroke="#262626" stroke-width="0.55"/>
<line x1="864.3" y1="552.0" x2="864.9" y2="548.4" stroke="#262626" stroke-width="0.55"/>
<line x1="864.3" y1="552.0" x2="864.5" y2="548.3" stroke="#262626" stroke-width="0.55"/>
<line x1="869.6" y1="563.9" x2="867.9" y2="558.8" stroke="#262626" stroke-width="0.5632000000000001"/>
<line x1="867.9" y1="558.8" x2="865.7" y2="556.3" stroke="#262626" stroke-width="0.55"/>
<line x1="865.7" y1="556.3" x2="863.4" y2="555.1" stroke="#262626" stroke-width="0.55"/>
<line x1="865.7" y1="556.3" x2="863.8" y2="554.3" stroke="#262626" stroke-width="0.55"/>
<line x1="867.9" y1="558.8" x2="866.7" y2="555.5" stroke="#262626" stroke-width="0.55"/>
<line x1="866.7" y1="555.5" x2="866.8" y2="553.4" stroke="#262626" stroke-width="0.55"/>
<line x1="866.7" y1="555.5" x2="865.2" y2="553.2" stroke="#262626" stroke-width="0.55"/>
<line x1="873.3" y1="572.4" x2="870.1" y2="563.0" stroke="#262626" stroke-width="0.7040000000000002"/>
<line x1="870.1" y1="563.0" x2="870.0" y2="554.8" stroke="#262626" stroke-width="0.5632000000000001"/>
<line x1="870.0" y1="554.8" x2="873.0" y2="549.9" stroke="#262626" stroke-width="0.55"/>
<line x1="873.0" y1="549.9" x2="876.1" y2="546.5" stroke="#262626" stroke-width="0.55"/>
<line x1="873.0" y1="549.9" x2="876.8" y2="547.8" stroke="#262626" stroke-width="0.55"/>
<line x1="870.0" y1="554.8" x2="872.2" y2="548.9" stroke="#262626" stroke-width="0.55"/>
<line x1="872.2" y1="548.9" x2="872.4" y2="543.7" stroke="#262626" stroke-width="0.55"/>
<line x1="872.2" y1="548.9" x2="871.8" y2="544.1" stroke="#262626" stroke-width="0.55"/>
<line x1="870.1" y1="563.0" x2="866.8" y2="556.9" stroke="#262626" stroke-width="0.5632000000000001"/>
<line x1="866.8" y1="556.9" x2="865.3" y2="552.6" stroke="#262626" stroke-width="0.55"/>
<line x1="865.3" y1="552.6" x2="865.9" y2="549.9" stroke="#262626" stroke-width="0.55"/>
<line x1="865.3" y1="552.6" x2="863.5" y2="549.9" stroke="#262626" stroke-width="0.55"/>
<line x1="866.8" y1="556.9" x2="863.1" y2="552.5" stroke="#262626" stroke-width="0.55"/>
<line x1="863.1" y1="552.5" x2="860.7" y2="548.3" stroke="#262626" stroke-width="0.55"/>
<line x1="863.1" y1="552.5" x2="858.8" y2="551.2" stroke="#262626" stroke-width="0.55"/>
<line x1="862.0" y1="604.0" x2="879.8" y2="593.1" stroke="#262626" stroke-width="1.1"/>
<line x1="879.8" y1="593.1" x2="891.8" y2="585.0" stroke="#262626" stroke-width="0.8800000000000001"/>
<line x1="891.8" y1="585.0" x2="897.6" y2="578.0" stroke="#262626" stroke-width="0.7040000000000002"/>
<line x1="897.6" y1="578.0" x2="903.2" y2="574.8" stroke="#262626" stroke-width="0.5632000000000001"/>
<line x1="903.2" y1="574.8" x2="907.4" y2="573.9" stroke="#262626" stroke-width="0.55"/>
<line x1="907.4" y1="573.9" x2="909.7" y2="574.6" stroke="#262626" stroke-width="0.55"/>
<line x1="907.4" y1="573.9" x2="910.2" y2="573.6" stroke="#262626" stroke-width="0.55"/>
<line x1="903.2" y1="574.8" x2="907.7" y2="572.7" stroke="#262626" stroke-width="0.55"/>
<line x1="907.7" y1="572.7" x2="910.3" y2="570.2" stroke="#262626" stroke-width="0.55"/>
<line x1="907.7" y1="572.7" x2="911.4" y2="570.7" stroke="#262626" stroke-width="0.55"/>
<line x1="897.6" y1="578.0" x2="903.3" y2="575.1" stroke="#262626" stroke-width="0.5632000000000001"/>
<line x1="903.3" y1="575.1" x2="908.2" y2="574.2" stroke="#262626" stroke-width="0.55"/>
<line x1="908.2" y1="574.2" x2="911.1" y2="572.8" stroke="#262626" stroke-width="0.55"/>
<line x1="908.2" y1="574.2" x2="911.1" y2="573.9" stroke="#262626" stroke-width="0.55"/>
<line x1="903.3" y1="575.1" x2="907.4" y2="575.3" stroke="#262626" stroke-width="0.55"/>
<line x1="907.4" y1="575.3" x2="910.1" y2="574.8" stroke="#262626" stroke-width="0.55"/>
<line x1="907.4" y1="575.3" x2="910.4" y2="575.9" stroke="#262626" stroke-width="0.55"/>
<line x1="891.8" y1="585.0" x2="899.9" y2="583.9" stroke="#262626" stroke-width="0.7040000000000002"/>
<line x1="899.9" y1="583.9" x2="904.5" y2="583.3" stroke="#262626" stroke-width="0.5632000000000001"/>
<line x1="904.5" y1="583.3" x2="907.3" y2="584.5" stroke="#262626" stroke-width="0.55"/>
<line x1="907.3" y1="584.5" x2="908.9" y2="585.3" stroke="#262626" stroke-width="0.55"/>
<line x1="907.3" y1="584.5" x2="909.3" y2="586.0" stroke="#262626" stroke-width="0.55"/>
<line x1="904.5" y1="583.3" x2="907.5" y2="583.0" stroke="#262626" stroke-width="0.55"/>
<line x1="907.5" y1="583.0" x2="910.0" y2="582.9" stroke="#262626" stroke-width="0.55"/>
<line x1="907.5" y1="583.0" x2="909.6" y2="583.0" stroke="#262626" stroke-width="0.55"/>
<line x1="899.9" y1="583.9" x2="906.3" y2="584.4" stroke="#262626" stroke-width="0.5632000000000001"/>
<line x1="906.3" y1="584.4" x2="910.7" y2="585.1" stroke="#262626" stroke-width="0.55"/>
<line x1="910.7" y1="585.1" x2="913.6" y2="584.1" stroke="#262626" stroke-width="0.55"/>
<line x1="910.7" y1="585.1" x2="913.9" y2="585.9" stroke="#262626" stroke-width="0.55"/>
<line x1="906.3" y1="584.4" x2="911.1" y2="584.0" stroke="#262626" stroke-width="0.55"/>
<line x1="911.1" y1="584.0" x2="914.7" y2="583.9" stroke="#262626" stroke-width="0.55"/>
<line x1="911.1" y1="584.0" x2="914.8" y2="584.3" stroke="#262626" stroke-width="0.55"/>
<line x1="879.8" y1="593.1" x2="889.8" y2="585.0" stroke="#262626" stroke-width="0.8800000000000001"/>
<line x1="889.8" y1="585.0" x2="899.0" y2="579.1" stroke="#262626" stroke-width="0.7040000000000002"/>
<line x1="899.0" y1="579.1" x2="907.9" y2="577.3" stroke="#262626" stroke-width="0.5632000000000001"/>
<line x1="907.9" y1="577.3" x2="914.0" y2="579.5" stroke="#262626" stroke-width="0.55"/>
<line x1="907.9" y1="577.3" x2="914.2" y2="574.3" stroke="#262626" stroke-width="0.55"/>
<line x1="899.0" y1="579.1" x2="905.3" y2="574.5" stroke="#262626" stroke-width="0.5632000000000001"/>
<line x1="905.3" y1="574.5" x2="906.9" y2="570.2" stroke="#262626" stroke-width="0.55"/>
<line x1="906.9" y1="570.2" x2="906.9" y2="567.2" stroke="#262626" stroke-width="0.55"/>
<line x1="906.9" y1="570.2" x2="907.9" y2="567.1" stroke="#262626" stroke-width="0.55"/>
<line x1="905.3" y1="574.5" x2="911.0" y2="572.2" stroke="#262626" stroke-width="0.55"/>
<line x1="911.0" y1="572.2" x2="914.5" y2="571.1" stroke="#262626" stroke-width="0.55"/>
<line x1="911.0" y1="572.2" x2="915.6" y2="569.9" stroke="#262626" stroke-width="0.55"/>
<line x1="889.8" y1="585.0" x2="895.8" y2="577.2" stroke="#262626" stroke-width="0.7040000000000002"/>
<line x1="895.8" y1="577.2" x2="897.4" y2="571.0" stroke="#262626" stroke-width="0.5632000000000001"/>
<line x1="897.4" y1="571.0" x2="899.6" y2="567.3" stroke="#262626" stroke-width="0.55"/>
<line x1="899.6" y1="567.3" x2="900.7" y2="565.2" stroke="#262626" stroke-width="0.55"/>
<line x1="899.6" y1="567.3" x2="899.9" y2="563.8" stroke="#262626" stroke-width="0.55"/>
<line x1="897.4" y1="571.0" x2="897.0" y2="566.0" stroke="#262626" stroke-width="0.55"/>
<line x1="897.0" y1="566.0" x2="897.6" y2="562.6" stroke="#262626" stroke-width="0.55"/>
<line x1="897.0" y1="566.0" x2="897.9" y2="562.3" stroke="#262626" stroke-width="0.55"/>
<line x1="895.8" y1="577.2" x2="899.7" y2="572.4" stroke="#262626" stroke-width="0.5632000000000001"/>
<line x1="899.7" y1="572.4" x2="903.2" y2="568.7" stroke="#262626" stroke-width="0.55"/>
<line x1="903.2" y1="568.7" x2="905.4" y2="565.9" stroke="#262626" stroke-width="0.55"/>
<line x1="903.2" y1="568.7" x2="907.0" y2="567.1" stroke="#262626" stroke-width="0.55"/>
<line x1="899.7" y1="572.4" x2="900.6" y2="567.7" stroke="#262626" stroke-width="0.55"/>
<line x1="900.6" y1="567.7" x2="902.3" y2="565.1" stroke="#262626" stroke-width="0.55"/>
<line x1="900.6" y1="567.7" x2="902.2" y2="565.0" stroke="#262626" stroke-width="0.55"/>
<line x1="862.0" y1="604.0" x2="879.0" y2="592.1" stroke="#262626" stroke-width="1.1"/>
<line x1="879.0" y1="592.1" x2="890.9" y2="582.9" stroke="#262626" stroke-width="0.8800000000000001"/>
<line x1="890.9" y1="582.9" x2="899.2" y2="581.5" stroke="#262626" stroke-width="0.7040000000000002"/>
<line x1="899.2" y1="581.5" x2="906.4" y2="581.5" stroke="#262626" stroke-width="0.5632000000000001"/>
<line x1="906.4" y1="581.5" x2="912.1" y2="580.8" stroke="#262626" stroke-width="0.55"/>
<line x1="912.1" y1="580.8" x2="915.2" y2="582.1" stroke="#262626" stroke-width="0.55"/>
<line x1="912.1" y1="580.8" x2="916.3" y2="579.4" stroke="#262626" stroke-width="0.55"/>
<line x1="906.4" y1="581.5" x2="911.0" y2="582.3" stroke="#262626" stroke-width="0.55"/>
<line x1="911.0" y1="582.3" x2="913.7" y2="583.7" stroke="#262626" stroke-width="0.55"/>
<line x1="911.0" y1="582.3" x2="913.5" y2="583.5" stroke="#262626" stroke-width="0.55"/>
<line x1="899.2" y1="581.5" x2="904.5" y2="577.5" stroke="#262626" stroke-width="0.5632000000000001"/>
<line x1="904.5" y1="577.5" x2="908.0" y2="574.1" stroke="#262626" stroke-width="0.55"/>
<line x1="908.0" y1="574.1" x2="909.8" y2="571.1" stroke="#262626" stroke-width="0.55"/>
<line x1="908.0" y1="574.1" x2="910.3" y2="571.5" stroke="#262626" stroke-width="0.55"/>
<line x1="904.5" y1="577.5" x2="907.9" y2="576.1" stroke="#262626" stroke-width="0.55"/>
<line x1="907.9" y1="576.1" x2="909.8" y2="574.2" stroke="#262626" stroke-width="0.55"/>
<line x1="907.9" y1="576.1" x2="910.1" y2="574.5" stroke="#262626" stroke-width="0.55"/>
<line x1="890.9" y1="582.9" x2="896.5" y2="571.5" stroke="#262626" stroke-width="0.7040000000000002"/>
<line x1="896.5" y1="571.5" x2="896.0" y2="561.3" stroke="#262626" stroke-width="0.5632000000000001"/>
<line x1="896.0" y1="561.3" x2="898.8" y2="555.6" stroke="#262626" stroke-width="0.55"/>
<line x1="898.8" y1="555.6" x2="898.4" y2="551.1" stroke="#262626" stroke-width="0.55"/>
<line x1="898.8" y1="555.6" x2="898.4" y2="552.0" stroke="#262626" stroke-width="0.55"/>
<line x1="896.0" y1="561.3" x2="894.7" y2="555.5" stroke="#262626" stroke-width="0.55"/>
<line x1="894.7" y1="555.5" x2="893.3" y2="550.7" stroke="#262626" stroke-width="0.55"/>
<line x1="894.7" y1="555.5" x2="895.4" y2="551.5" stroke="#262626" stroke-width="0.55"/>
<line x1="896.5" y1="571.5" x2="899.7" y2="563.9" stroke="#262626" stroke-width="0.5632000000000001"/>
<line x1="899.7" y1="563.9" x2="901.6" y2="558.0" stroke="#262626" stroke-width="0.55"/>
<line x1="901.6" y1="558.0" x2="904.5" y2="555.6" stroke="#262626" stroke-width="0.55"/>
<line x1="901.6" y1="558.0" x2="904.0" y2="553.5" stroke="#262626" stroke-width="0.55"/>
<line x1="899.7" y1="563.9" x2="899.8" y2="557.5" stroke="#262626" stroke-width="0.55"/>
<line x1="899.8" y1="557.5" x2="898.8" y2="554.0" stroke="#262626" stroke-width="0.55"/>
<line x1="899.8" y1="557.5" x2="902.0" y2="554.3" stroke="#262626" stroke-width="0.55"/>
<line x1="879.0" y1="592.1" x2="885.8" y2="581.6" stroke="#262626" stroke-width="0.8800000000000001"/>
<line x1="885.8" y1="581.6" x2="889.4" y2="573.1" stroke="#262626" stroke-width="0.7040000000000002"/>
<line x1="889.4" y1="573.1" x2="888.8" y2="568.0" stroke="#262626" stroke-width="0.5632000000000001"/>
<line x1="888.8" y1="568.0" x2="888.2" y2="564.6" stroke="#262626" stroke-width="0.55"/>
<line x1="888.2" y1="564.6" x2="887.0" y2="562.8" stroke="#262626" stroke-width="0.55"/>
<line x1="888.2" y1="564.6" x2="888.4" y2="562.4" stroke="#262626" stroke-width="0.55"/>
<line x1="888.8" y1="568.0" x2="889.5" y2="564.7" stroke="#262626" stroke-width="0.55"/>
<line x1="889.5" y1="564.7" x2="888.9" y2="562.3" stroke="#262626" stroke-width="0.55"/>
<line x1="889.5" y1="564.7" x2="889.3" y2="562.4" stroke="#262626" stroke-width="0.55"/>
<line x1="889.4" y1="573.1" x2="893.6" y2="570.1" stroke="#262626" stroke-width="0.5632000000000001"/>
<line x1="893.6" y1="570.1" x2="894.8" y2="566.9" stroke="#262626" stroke-width="0.55"/>
<line x1="894.8" y1="566.9" x2="895.9" y2="565.2" stroke="#262626" stroke-width="0.55"/>
<line x1="894.8" y1="566.9" x2="895.8" y2="564.5" stroke="#262626" stroke-width="0.55"/>
<line x1="893.6" y1="570.1" x2="897.7" y2="569.6" stroke="#262626" stroke-width="0.55"/>
<line x1="897.7" y1="569.6" x2="900.0" y2="570.7" stroke="#262626" stroke-width="0.55"/>
<line x1="897.7" y1="569.6" x2="900.6" y2="568.3" stroke="#262626" stroke-width="0.55"/>
<line x1="885.8" y1="581.6" x2="892.1" y2="578.5" stroke="#262626" stroke-width="0.7040000000000002"/>
<line x1="892.1" y1="578.5" x2="895.0" y2="574.9" stroke="#262626" stroke-width="0.5632000000000001"/>
<line x1="895.0" y1="574.9" x2="897.4" y2="573.9" stroke="#262626" stroke-width="0.55"/>
<line x1="897.4" y1="573.9" x2="898.7" y2="572.5" stroke="#262626" stroke-width="0.55"/>
<line x1="897.4" y1="573.9" x2="898.9" y2="573.8" stroke="#262626" stroke-width="0.55"/>
<line x1="895.0" y1="574.9" x2="896.8" y2="572.4" stroke="#262626" stroke-width="0.55"/>
<line x1="896.8" y1="572.4" x2="898.7" y2="571.3" stroke="#262626" stroke-width="0.55"/>
<line x1="896.8" y1="572.4" x2="897.7" y2="570.7" stroke="#262626" stroke-width="0.55"/>
<line x1="892.1" y1="578.5" x2="896.8" y2="577.0" stroke="#262626" stroke-width="0.5632000000000001"/>
<line x1="896.8" y1="577.0" x2="898.8" y2="574.8" stroke="#262626" stroke-width="0.55"/>
<line x1="898.8" y1="574.8" x2="900.5" y2="573.3" stroke="#262626" stroke-width="0.55"/>
<line x1="898.8" y1="574.8" x2="900.3" y2="573.7" stroke="#262626" stroke-width="0.55"/>
<line x1="896.8" y1="577.0" x2="900.2" y2="577.2" stroke="#262626" stroke-width="0.55"/>
<line x1="900.2" y1="577.2" x2="902.6" y2="576.3" stroke="#262626" stroke-width="0.55"/>
<line x1="900.2" y1="577.2" x2="902.5" y2="577.7" stroke="#262626" stroke-width="0.55"/>
<line x1="869.0" y1="608.0" x2="850.6" y2="598.6" stroke="#262626" stroke-width="1.1"/>
<line x1="850.6" y1="598.6" x2="833.9" y2="593.7" stroke="#262626" stroke-width="0.8800000000000001"/>
<line x1="833.9" y1="593.7" x2="825.1" y2="586.0" stroke="#262626" stroke-width="0.7040000000000002"/>
<line x1="825.1" y1="586.0" x2="819.6" y2="582.0" stroke="#262626" stroke-width="0.5632000000000001"/>
<line x1="825.1" y1="586.0" x2="820.0" y2="579.2" stroke="#262626" stroke-width="0.5632000000000001"/>
<line x1="833.9" y1="593.7" x2="824.3" y2="587.5" stroke="#262626" stroke-width="0.7040000000000002"/>
<line x1="850.6" y1="598.6" x2="838.2" y2="593.2" stroke="#262626" stroke-width="0.8800000000000001"/>
<line x1="838.2" y1="593.2" x2="834.2" y2="587.0" stroke="#262626" stroke-width="0.7040000000000002"/>
<line x1="834.2" y1="587.0" x2="834.3" y2="582.2" stroke="#262626" stroke-width="0.5632000000000001"/>
<line x1="834.3" y1="582.2" x2="835.5" y2="578.3" stroke="#262626" stroke-width="0.55"/>
<line x1="835.5" y1="578.3" x2="835.8" y2="576.0" stroke="#262626" stroke-width="0.55"/>
<line x1="835.5" y1="578.3" x2="835.1" y2="574.9" stroke="#262626" stroke-width="0.55"/>
<line x1="834.3" y1="582.2" x2="833.5" y2="579.0" stroke="#262626" stroke-width="0.55"/>
<line x1="833.5" y1="579.0" x2="832.5" y2="577.2" stroke="#262626" stroke-width="0.55"/>
<line x1="833.5" y1="579.0" x2="833.7" y2="577.1" stroke="#262626" stroke-width="0.55"/>
<line x1="834.2" y1="587.0" x2="829.8" y2="582.5" stroke="#262626" stroke-width="0.5632000000000001"/>
<line x1="829.8" y1="582.5" x2="828.9" y2="579.0" stroke="#262626" stroke-width="0.55"/>
<line x1="828.9" y1="579.0" x2="829.7" y2="576.6" stroke="#262626" stroke-width="0.55"/>
<line x1="828.9" y1="579.0" x2="828.7" y2="576.9" stroke="#262626" stroke-width="0.55"/>
<line x1="829.8" y1="582.5" x2="828.5" y2="579.2" stroke="#262626" stroke-width="0.55"/>
<line x1="828.5" y1="579.2" x2="827.7" y2="577.3" stroke="#262626" stroke-width="0.55"/>
<line x1="828.5" y1="579.2" x2="827.0" y2="576.9" stroke="#262626" stroke-width="0.55"/>
<line x1="838.2" y1="593.2" x2="827.0" y2="591.1" stroke="#262626" stroke-width="0.7040000000000002"/>
<line x1="827.0" y1="591.1" x2="819.0" y2="587.2" stroke="#262626" stroke-width="0.5632000000000001"/>
<line x1="827.0" y1="591.1" x2="819.6" y2="587.3" stroke="#262626" stroke-width="0.5632000000000001"/>
<line x1="869.0" y1="608.0" x2="864.5" y2="589.1" stroke="#262626" stroke-width="1.1"/>
<line x1="864.5" y1="589.1" x2="853.2" y2="578.7" stroke="#262626" stroke-width="0.8800000000000001"/>
<line x1="853.2" y1="578.7" x2="847.5" y2="569.8" stroke="#262626" stroke-width="0.7040000000000002"/>
<line x1="847.5" y1="569.8" x2="843.0" y2="562.8" stroke="#262626" stroke-width="0.5632000000000001"/>
<line x1="843.0" y1="562.8" x2="840.0" y2="556.7" stroke="#262626" stroke-width="0.55"/>
<line x1="840.0" y1="556.7" x2="838.0" y2="552.5" stroke="#262626" stroke-width="0.55"/>
<line x1="840.0" y1="556.7" x2="838.7" y2="552.9" stroke="#262626" stroke-width="0.55"/>
<line x1="843.0" y1="562.8" x2="838.8" y2="557.9" stroke="#262626" stroke-width="0.55"/>
<line x1="838.8" y1="557.9" x2="836.3" y2="554.6" stroke="#262626" stroke-width="0.55"/>
<line x1="838.8" y1="557.9" x2="834.6" y2="556.1" stroke="#262626" stroke-width="0.55"/>
<line x1="847.5" y1="569.8" x2="847.1" y2="561.9" stroke="#262626" stroke-width="0.5632000000000001"/>
<line x1="847.1" y1="561.9" x2="848.7" y2="556.7" stroke="#262626" stroke-width="0.55"/>
<line x1="848.7" y1="556.7" x2="849.2" y2="553.7" stroke="#262626" stroke-width="0.55"/>
<line x1="848.7" y1="556.7" x2="850.8" y2="554.5" stroke="#262626" stroke-width="0.55"/>
<line x1="847.1" y1="561.9" x2="848.5" y2="557.6" stroke="#262626" stroke-width="0.55"/>
<line x1="848.5" y1="557.6" x2="849.0" y2="554.6" stroke="#262626" stroke-width="0.55"/>
<line x1="848.5" y1="557.6" x2="851.1" y2="555.1" stroke="#262626" stroke-width="0.55"/>
<line x1="853.2" y1="578.7" x2="841.5" y2="575.5" stroke="#262626" stroke-width="0.7040000000000002"/>
<line x1="841.5" y1="575.5" x2="835.7" y2="569.4" stroke="#262626" stroke-width="0.5632000000000001"/>
<line x1="835.7" y1="569.4" x2="833.8" y2="563.6" stroke="#262626" stroke-width="0.55"/>
<line x1="833.8" y1="563.6" x2="830.1" y2="560.5" stroke="#262626" stroke-width="0.55"/>
<line x1="833.8" y1="563.6" x2="831.1" y2="559.8" stroke="#262626" stroke-width="0.55"/>
<line x1="835.7" y1="569.4" x2="832.5" y2="565.6" stroke="#262626" stroke-width="0.55"/>
<line x1="832.5" y1="565.6" x2="831.8" y2="562.7" stroke="#262626" stroke-width="0.55"/>
<line x1="832.5" y1="565.6" x2="830.9" y2="563.1" stroke="#262626" stroke-width="0.55"/>
<line x1="841.5" y1="575.5" x2="832.8" y2="574.2" stroke="#262626" stroke-width="0.5632000000000001"/>
<line x1="832.8" y1="574.2" x2="826.4" y2="575.4" stroke="#262626" stroke-width="0.55"/>
<line x1="826.4" y1="575.4" x2="822.0" y2="578.6" stroke="#262626" stroke-width="0.55"/>
<line x1="826.4" y1="575.4" x2="821.5" y2="575.5" stroke="#262626" stroke-width="0.55"/>
<line x1="832.8" y1="574.2" x2="825.7" y2="574.7" stroke="#262626" stroke-width="0.55"/>
<line x1="825.7" y1="574.7" x2="820.4" y2="574.3" stroke="#262626" stroke-width="0.55"/>
<line x1="825.7" y1="574.7" x2="821.8" y2="577.2" stroke="#262626" stroke-width="0.55"/>
<line x1="864.5" y1="589.1" x2="857.2" y2="580.6" stroke="#262626" stroke-width="0.8800000000000001"/>
<line x1="857.2" y1="580.6" x2="853.7" y2="572.6" stroke="#262626" stroke-width="0.7040000000000002"/>
<line x1="853.7" y1="572.6" x2="853.1" y2="565.5" stroke="#262626" stroke-width="0.5632000000000001"/>
<line x1="853.1" y1="565.5" x2="853.6" y2="560.7" stroke="#262626" stroke-width="0.55"/>
<line x1="853.6" y1="560.7" x2="855.0" y2="557.8" stroke="#262626" stroke-width="0.55"/>
<line x1="853.6" y1="560.7" x2="853.3" y2="556.8" stroke="#262626" stroke-width="0.55"/>
<line x1="853.1" y1="565.5" x2="851.0" y2="560.8" stroke="#262626" stroke-width="0.55"/>
<line x1="851.0" y1="560.8" x2="851.5" y2="557.3" stroke="#262626" stroke-width="0.55"/>
<line x1="851.0" y1="560.8" x2="849.9" y2="556.6" stroke="#262626" stroke-width="0.55"/>
<line x1="853.7" y1="572.6" x2="854.0" y2="565.7" stroke="#262626" stroke-width="0.5632000000000001"/>
<line x1="854.0" y1="565.7" x2="856.5" y2="561.4" stroke="#262626" stroke-width="0.55"/>
<line x1="856.5" y1="561.4" x2="858.9" y2="559.9" stroke="#262626" stroke-width="0.55"/>
<line x1="856.5" y1="561.4" x2="856.7" y2="557.3" stroke="#262626" stroke-width="0.55"/>
<line x1="854.0" y1="565.7" x2="853.3" y2="561.6" stroke="#262626" stroke-width="0.55"/>
<line x1="853.3" y1="561.6" x2="852.8" y2="558.9" stroke="#262626" stroke-width="0.55"/>
<line x1="853.3" y1="561.6" x2="851.7" y2="558.8" stroke="#262626" stroke-width="0.55"/>
<line x1="857.2" y1="580.6" x2="850.4" y2="578.3" stroke="#262626" stroke-width="0.7040000000000002"/>
<line x1="850.4" y1="578.3" x2="845.8" y2="576.5" stroke="#262626" stroke-width="0.5632000000000001"/>
<line x1="845.8" y1="576.5" x2="842.8" y2="575.5" stroke="#262626" stroke-width="0.55"/>
<line x1="842.8" y1="575.5" x2="840.7" y2="575.6" stroke="#262626" stroke-width="0.55"/>
<line x1="842.8" y1="575.5" x2="841.0" y2="573.7" stroke="#262626" stroke-width="0.55"/>
<line x1="845.8" y1="576.5" x2="842.5" y2="575.8" stroke="#262626" stroke-width="0.55"/>
<line x1="842.5" y1="575.8" x2="840.5" y2="575.5" stroke="#262626" stroke-width="0.55"/>
<line x1="842.5" y1="575.8" x2="840.8" y2="574.7" stroke="#262626" stroke-width="0.55"/>
<line x1="850.4" y1="578.3" x2="845.6" y2="578.8" stroke="#262626" stroke-width="0.5632000000000001"/>
<line x1="845.6" y1="578.8" x2="842.0" y2="577.6" stroke="#262626" stroke-width="0.55"/>
<line x1="842.0" y1="577.6" x2="839.8" y2="578.1" stroke="#262626" stroke-width="0.55"/>
<line x1="842.0" y1="577.6" x2="840.4" y2="576.0" stroke="#262626" stroke-width="0.55"/>
<line x1="845.6" y1="578.8" x2="842.7" y2="577.7" stroke="#262626" stroke-width="0.55"/>
<line x1="842.7" y1="577.7" x2="840.8" y2="576.2" stroke="#262626" stroke-width="0.55"/>
<line x1="842.7" y1="577.7" x2="840.8" y2="576.9" stroke="#262626" stroke-width="0.55"/>
<line x1="869.0" y1="608.0" x2="866.8" y2="593.0" stroke="#262626" stroke-width="1.1"/>
<line x1="866.8" y1="593.0" x2="870.7" y2="583.7" stroke="#262626" stroke-width="0.8800000000000001"/>
<line x1="870.7" y1="583.7" x2="873.7" y2="578.9" stroke="#262626" stroke-width="0.7040000000000002"/>
<line x1="873.7" y1="578.9" x2="877.1" y2="577.1" stroke="#262626" stroke-width="0.5632000000000001"/>
<line x1="877.1" y1="577.1" x2="878.7" y2="574.5" stroke="#262626" stroke-width="0.55"/>
<line x1="878.7" y1="574.5" x2="880.5" y2="573.6" stroke="#262626" stroke-width="0.55"/>
<line x1="878.7" y1="574.5" x2="879.0" y2="572.4" stroke="#262626" stroke-width="0.55"/>
<line x1="877.1" y1="577.1" x2="880.0" y2="576.6" stroke="#262626" stroke-width="0.55"/>
<line x1="880.0" y1="576.6" x2="881.5" y2="575.7" stroke="#262626" stroke-width="0.55"/>
<line x1="880.0" y1="576.6" x2="882.0" y2="576.7" stroke="#262626" stroke-width="0.55"/>
<line x1="873.7" y1="578.9" x2="874.6" y2="574.4" stroke="#262626" stroke-width="0.5632000000000001"/>
<line x1="874.6" y1="574.4" x2="874.9" y2="570.4" stroke="#262626" stroke-width="0.55"/>
<line x1="874.9" y1="570.4" x2="873.9" y2="568.3" stroke="#262626" stroke-width="0.55"/>
<line x1="874.9" y1="570.4" x2="875.7" y2="567.9" stroke="#262626" stroke-width="0.55"/>
<line x1="874.6" y1="574.4" x2="873.9" y2="571.2" stroke="#262626" stroke-width="0.55"/>
<line x1="873.9" y1="571.2" x2="874.5" y2="569.2" stroke="#262626" stroke-width="0.55"/>
<line x1="873.9" y1="571.2" x2="872.7" y2="569.6" stroke="#262626" stroke-width="0.55"/>
<line x1="870.7" y1="583.7" x2="875.3" y2="580.3" stroke="#262626" stroke-width="0.7040000000000002"/>
<line x1="875.3" y1="580.3" x2="878.7" y2="578.1" stroke="#262626" stroke-width="0.5632000000000001"/>
<line x1="878.7" y1="578.1" x2="881.4" y2="576.9" stroke="#262626" stroke-width="0.55"/>
<line x1="881.4" y1="576.9" x2="883.0" y2="576.7" stroke="#262626" stroke-width="0.55"/>
<line x1="881.4" y1="576.9" x2="883.1" y2="576.7" stroke="#262626" stroke-width="0.55"/>
<line x1="878.7" y1="578.1" x2="880.7" y2="577.0" stroke="#262626" stroke-width="0.55"/>
<line x1="880.7" y1="577.0" x2="881.5" y2="575.8" stroke="#262626" stroke-width="0.55"/>
<line x1="880.7" y1="577.0" x2="881.8" y2="575.8" stroke="#262626" stroke-width="0.55"/>
<line x1="875.3" y1="580.3" x2="877.7" y2="576.4" stroke="#262626" stroke-width="0.5632000000000001"/>
<line x1="877.7" y1="576.4" x2="878.1" y2="572.9" stroke="#262626" stroke-width="0.55"/>
<line x1="878.1" y1="572.9" x2="877.8" y2="570.5" stroke="#262626" stroke-width="0.55"/>
<line x1="878.1" y1="572.9" x2="877.4" y2="571.0" stroke="#262626" stroke-width="0.55"/>
<line x1="877.7" y1="576.4" x2="880.6" y2="575.0" stroke="#262626" stroke-width="0.55"/>
<line x1="880.6" y1="575.0" x2="883.1" y2="574.2" stroke="#262626" stroke-width="0.55"/>
<line x1="880.6" y1="575.0" x2="882.8" y2="574.0" stroke="#262626" stroke-width="0.55"/>
<line x1="866.8" y1="593.0" x2="861.7" y2="581.8" stroke="#262626" stroke-width="0.8800000000000001"/>
<line x1="861.7" y1="581.8" x2="856.3" y2="576.1" stroke="#262626" stroke-width="0.7040000000000002"/>
<line x1="856.3" y1="576.1" x2="854.8" y2="570.4" stroke="#262626" stroke-width="0.5632000000000001"/>
<line x1="854.8" y1="570.4" x2="853.1" y2="567.5" stroke="#262626" stroke-width="0.55"/>
<line x1="853.1" y1="567.5" x2="851.0" y2="566.3" stroke="#262626" stroke-width="0.55"/>
<line x1="853.1" y1="567.5" x2="850.7" y2="565.9" stroke="#262626" stroke-width="0.55"/>
<line x1="854.8" y1="570.4" x2="855.6" y2="566.6" stroke="#262626" stroke-width="0.55"/>
<line x1="855.6" y1="566.6" x2="856.4" y2="564.0" stroke="#262626" stroke-width="0.55"/>
<line x1="855.6" y1="566.6" x2="854.7" y2="563.6" stroke="#262626" stroke-width="0.55"/>
<line x1="856.3" y1="576.1" x2="852.3" y2="572.9" stroke="#262626" stroke-width="0.5632000000000001"/>
<line x1="852.3" y1="572.9" x2="849.1" y2="572.6" stroke="#262626" stroke-width="0.55"/>
<line x1="849.1" y1="572.6" x2="847.6" y2="571.4" stroke="#262626" stroke-width="0.55"/>
<line x1="849.1" y1="572.6" x2="847.2" y2="571.8" stroke="#262626" stroke-width="0.55"/>
<line x1="852.3" y1="572.9" x2="848.1" y2="572.4" stroke="#262626" stroke-width="0.55"/>
<line x1="848.1" y1="572.4" x2="845.1" y2="572.8" stroke="#262626" stroke-width="0.55"/>
<line x1="848.1" y1="572.4" x2="844.9" y2="572.1" stroke="#262626" stroke-width="0.55"/>
<line x1="861.7" y1="581.8" x2="861.1" y2="574.2" stroke="#262626" stroke-width="0.7040000000000002"/>
<line x1="861.1" y1="574.2" x2="857.3" y2="569.0" stroke="#262626" stroke-width="0.5632000000000001"/>
<line x1="857.3" y1="569.0" x2="852.6" y2="566.9" stroke="#262626" stroke-width="0.55"/>
<line x1="852.6" y1="566.9" x2="848.6" y2="566.9" stroke="#262626" stroke-width="0.55"/>
<line x1="852.6" y1="566.9" x2="849.8" y2="566.9" stroke="#262626" stroke-width="0.55"/>
<line x1="857.3" y1="569.0" x2="853.2" y2="567.6" stroke="#262626" stroke-width="0.55"/>
<line x1="853.2" y1="567.6" x2="850.0" y2="567.1" stroke="#262626" stroke-width="0.55"/>
<line x1="853.2" y1="567.6" x2="849.9" y2="568.0" stroke="#262626" stroke-width="0.55"/>
<line x1="861.1" y1="574.2" x2="859.5" y2="569.0" stroke="#262626" stroke-width="0.5632000000000001"/>
<line x1="859.5" y1="569.0" x2="860.0" y2="566.0" stroke="#262626" stroke-width="0.55"/>
<line x1="860.0" y1="566.0" x2="860.5" y2="564.2" stroke="#262626" stroke-width="0.55"/>
<line x1="860.0" y1="566.0" x2="859.3" y2="563.9" stroke="#262626" stroke-width="0.55"/>
<line x1="859.5" y1="569.0" x2="858.0" y2="565.7" stroke="#262626" stroke-width="0.55"/>
<line x1="858.0" y1="565.7" x2="857.5" y2="563.7" stroke="#262626" stroke-width="0.55"/>
<line x1="858.0" y1="565.7" x2="856.4" y2="563.6" stroke="#262626" stroke-width="0.55"/>
<line x1="869.0" y1="608.0" x2="870.3" y2="593.9" stroke="#262626" stroke-width="1.1"/>
<line x1="870.3" y1="593.9" x2="869.7" y2="583.5" stroke="#262626" stroke-width="0.8800000000000001"/>
<line x1="869.7" y1="583.5" x2="866.2" y2="576.7" stroke="#262626" stroke-width="0.7040000000000002"/>
<line x1="866.2" y1="576.7" x2="864.8" y2="572.7" stroke="#262626" stroke-width="0.5632000000000001"/>
<line x1="864.8" y1="572.7" x2="862.8" y2="570.3" stroke="#262626" stroke-width="0.55"/>
<line x1="862.8" y1="570.3" x2="860.6" y2="569.7" stroke="#262626" stroke-width="0.55"/>
<line x1="862.8" y1="570.3" x2="860.8" y2="569.5" stroke="#262626" stroke-width="0.55"/>
<line x1="864.8" y1="572.7" x2="864.3" y2="570.0" stroke="#262626" stroke-width="0.55"/>
<line x1="864.3" y1="570.0" x2="863.7" y2="568.6" stroke="#262626" stroke-width="0.55"/>
<line x1="864.3" y1="570.0" x2="864.1" y2="567.9" stroke="#262626" stroke-width="0.55"/>
<line x1="866.2" y1="576.7" x2="865.5" y2="572.5" stroke="#262626" stroke-width="0.5632000000000001"/>
<line x1="865.5" y1="572.5" x2="865.8" y2="569.0" stroke="#262626" stroke-width="0.55"/>
<line x1="865.8" y1="569.0" x2="866.6" y2="566.7" stroke="#262626" stroke-width="0.55"/>
<line x1="865.8" y1="569.0" x2="866.4" y2="566.9" stroke="#262626" stroke-width="0.55"/>
<line x1="865.5" y1="572.5" x2="863.7" y2="569.8" stroke="#262626" stroke-width="0.55"/>
<line x1="863.7" y1="569.8" x2="863.6" y2="567.8" stroke="#262626" stroke-width="0.55"/>
<line x1="863.7" y1="569.8" x2="863.2" y2="567.4" stroke="#262626" stroke-width="0.55"/>
<line x1="869.7" y1="583.5" x2="869.3" y2="576.9" stroke="#262626" stroke-width="0.7040000000000002"/>
<line x1="869.3" y1="576.9" x2="866.7" y2="573.4" stroke="#262626" stroke-width="0.5632000000000001"/>
<line x1="866.7" y1="573.4" x2="866.3" y2="570.1" stroke="#262626" stroke-width="0.55"/>
<line x1="866.3" y1="570.1" x2="866.7" y2="568.1" stroke="#262626" stroke-width="0.55"/>
<line x1="866.3" y1="570.1" x2="864.7" y2="567.8" stroke="#262626" stroke-width="0.55"/>
<line x1="866.7" y1="573.4" x2="866.3" y2="570.2" stroke="#262626" stroke-width="0.55"/>
<line x1="866.3" y1="570.2" x2="866.9" y2="568.5" stroke="#262626" stroke-width="0.55"/>
<line x1="866.3" y1="570.2" x2="867.4" y2="568.0" stroke="#262626" stroke-width="0.55"/>
<line x1="869.3" y1="576.9" x2="869.4" y2="573.2" stroke="#262626" stroke-width="0.5632000000000001"/>
<line x1="869.4" y1="573.2" x2="868.9" y2="571.2" stroke="#262626" stroke-width="0.55"/>
<line x1="868.9" y1="571.2" x2="868.4" y2="569.5" stroke="#262626" stroke-width="0.55"/>
<line x1="868.9" y1="571.2" x2="868.8" y2="569.6" stroke="#262626" stroke-width="0.55"/>
<line x1="869.4" y1="573.2" x2="870.1" y2="570.3" stroke="#262626" stroke-width="0.55"/>
<line x1="870.1" y1="570.3" x2="871.1" y2="568.2" stroke="#262626" stroke-width="0.55"/>
<line x1="870.1" y1="570.3" x2="870.0" y2="567.8" stroke="#262626" stroke-width="0.55"/>
<line x1="870.3" y1="593.9" x2="869.8" y2="583.6" stroke="#262626" stroke-width="0.8800000000000001"/>
<line x1="869.8" y1="583.6" x2="866.1" y2="578.0" stroke="#262626" stroke-width="0.7040000000000002"/>
<line x1="866.1" y1="578.0" x2="865.0" y2="574.1" stroke="#262626" stroke-width="0.5632000000000001"/>
<line x1="865.0" y1="574.1" x2="865.3" y2="571.8" stroke="#262626" stroke-width="0.55"/>
<line x1="865.3" y1="571.8" x2="865.6" y2="570.3" stroke="#262626" stroke-width="0.55"/>
<line x1="865.3" y1="571.8" x2="865.5" y2="570.5" stroke="#262626" stroke-width="0.55"/>
<line x1="865.0" y1="574.1" x2="863.7" y2="571.9" stroke="#262626" stroke-width="0.55"/>
<line x1="863.7" y1="571.9" x2="862.3" y2="570.4" stroke="#262626" stroke-width="0.55"/>
<line x1="863.7" y1="571.9" x2="861.9" y2="570.8" stroke="#262626" stroke-width="0.55"/>
<line x1="866.1" y1="578.0" x2="865.8" y2="573.8" stroke="#262626" stroke-width="0.5632000000000001"/>
<line x1="865.8" y1="573.8" x2="867.3" y2="570.7" stroke="#262626" stroke-width="0.55"/>
<line x1="867.3" y1="570.7" x2="868.5" y2="569.2" stroke="#262626" stroke-width="0.55"/>
<line x1="867.3" y1="570.7" x2="867.9" y2="568.8" stroke="#262626" stroke-width="0.55"/>
<line x1="865.8" y1="573.8" x2="866.5" y2="570.5" stroke="#262626" stroke-width="0.55"/>
<line x1="866.5" y1="570.5" x2="867.6" y2="568.5" stroke="#262626" stroke-width="0.55"/>
<line x1="866.5" y1="570.5" x2="866.3" y2="567.7" stroke="#262626" stroke-width="0.55"/>
<line x1="869.8" y1="583.6" x2="871.4" y2="576.3" stroke="#262626" stroke-width="0.7040000000000002"/>
<line x1="871.4" y1="576.3" x2="875.1" y2="572.0" stroke="#262626" stroke-width="0.5632000000000001"/>
<line x1="875.1" y1="572.0" x2="877.4" y2="569.8" stroke="#262626" stroke-width="0.55"/>
<line x1="877.4" y1="569.8" x2="879.9" y2="569.0" stroke="#262626" stroke-width="0.55"/>
<line x1="877.4" y1="569.8" x2="879.6" y2="568.9" stroke="#262626" stroke-width="0.55"/>
<line x1="875.1" y1="572.0" x2="879.2" y2="570.4" stroke="#262626" stroke-width="0.55"/>
<line x1="879.2" y1="570.4" x2="882.0" y2="569.0" stroke="#262626" stroke-width="0.55"/>
<line x1="879.2" y1="570.4" x2="882.2" y2="568.9" stroke="#262626" stroke-width="0.55"/>
<line x1="871.4" y1="576.3" x2="874.5" y2="572.1" stroke="#262626" stroke-width="0.5632000000000001"/>
<line x1="874.5" y1="572.1" x2="878.4" y2="570.6" stroke="#262626" stroke-width="0.55"/>
<line x1="878.4" y1="570.6" x2="881.2" y2="568.8" stroke="#262626" stroke-width="0.55"/>
<line x1="878.4" y1="570.6" x2="880.4" y2="568.9" stroke="#262626" stroke-width="0.55"/>
<line x1="874.5" y1="572.1" x2="874.7" y2="568.8" stroke="#262626" stroke-width="0.55"/>
<line x1="874.7" y1="568.8" x2="875.1" y2="566.2" stroke="#262626" stroke-width="0.55"/>
<line x1="874.7" y1="568.8" x2="875.5" y2="566.5" stroke="#262626" stroke-width="0.55"/>
<line x1="876.0" y1="612.0" x2="889.0" y2="598.8" stroke="#262626" stroke-width="1.1"/>
<line x1="889.0" y1="598.8" x2="901.3" y2="595.4" stroke="#262626" stroke-width="0.8800000000000001"/>
<line x1="901.3" y1="595.4" x2="909.7" y2="597.4" stroke="#262626" stroke-width="0.7040000000000002"/>
<line x1="909.7" y1="597.4" x2="916.3" y2="596.4" stroke="#262626" stroke-width="0.5632000000000001"/>
<line x1="909.7" y1="597.4" x2="915.9" y2="596.7" stroke="#262626" stroke-width="0.5632000000000001"/>
<line x1="901.3" y1="595.4" x2="908.6" y2="596.7" stroke="#262626" stroke-width="0.7040000000000002"/>
<line x1="908.6" y1="596.7" x2="912.7" y2="597.9" stroke="#262626" stroke-width="0.5632000000000001"/>
<line x1="912.7" y1="597.9" x2="915.9" y2="597.6" stroke="#262626" stroke-width="0.55"/>
<line x1="912.7" y1="597.9" x2="915.8" y2="597.5" stroke="#262626" stroke-width="0.55"/>
<line x1="908.6" y1="596.7" x2="914.2" y2="598.3" stroke="#262626" stroke-width="0.5632000000000001"/>
<line x1="889.0" y1="598.8" x2="897.2" y2="589.3" stroke="#262626" stroke-width="0.8800000000000001"/>
<line x1="897.2" y1="589.3" x2="898.6" y2="581.8" stroke="#262626" stroke-width="0.7040000000000002"/>
<line x1="898.6" y1="581.8" x2="900.8" y2="578.2" stroke="#262626" stroke-width="0.5632000000000001"/>
<line x1="900.8" y1="578.2" x2="903.8" y2="576.7" stroke="#262626" stroke-width="0.55"/>
<line x1="903.8" y1="576.7" x2="905.1" y2="575.1" stroke="#262626" stroke-width="0.55"/>
<line x1="903.8" y1="576.7" x2="905.3" y2="574.6" stroke="#262626" stroke-width="0.55"/>
<line x1="900.8" y1="578.2" x2="903.4" y2="575.9" stroke="#262626" stroke-width="0.55"/>
<line x1="903.4" y1="575.9" x2="905.0" y2="573.6" stroke="#262626" stroke-width="0.55"/>
<line x1="903.4" y1="575.9" x2="904.7" y2="574.2" stroke="#262626" stroke-width="0.55"/>
<line x1="898.6" y1="581.8" x2="902.3" y2="577.1" stroke="#262626" stroke-width="0.5632000000000001"/>
<line x1="902.3" y1="577.1" x2="906.5" y2="575.0" stroke="#262626" stroke-width="0.55"/>
<line x1="906.5" y1="575.0" x2="909.5" y2="574.4" stroke="#262626" stroke-width="0.55"/>
<line x1="906.5" y1="575.0" x2="909.7" y2="572.9" stroke="#262626" stroke-width="0.55"/>
<line x1="902.3" y1="577.1" x2="904.4" y2="574.0" stroke="#262626" stroke-width="0.55"/>
<line x1="904.4" y1="574.0" x2="905.6" y2="571.3" stroke="#262626" stroke-width="0.55"/>
<line x1="904.4" y1="574.0" x2="906.3" y2="571.7" stroke="#262626" stroke-width="0.55"/>
<line x1="897.2" y1="589.3" x2="901.4" y2="581.4" stroke="#262626" stroke-width="0.7040000000000002"/>
<line x1="901.4" y1="581.4" x2="903.7" y2="576.4" stroke="#262626" stroke-width="0.5632000000000001"/>
<line x1="903.7" y1="576.4" x2="906.7" y2="574.0" stroke="#262626" stroke-width="0.55"/>
<line x1="906.7" y1="574.0" x2="908.0" y2="571.1" stroke="#262626" stroke-width="0.55"/>
<line x1="906.7" y1="574.0" x2="909.5" y2="573.1" stroke="#262626" stroke-width="0.55"/>
<line x1="903.7" y1="576.4" x2="906.0" y2="574.2" stroke="#262626" stroke-width="0.55"/>
<line x1="906.0" y1="574.2" x2="907.4" y2="572.8" stroke="#262626" stroke-width="0.55"/>
<line x1="906.0" y1="574.2" x2="907.3" y2="572.6" stroke="#262626" stroke-width="0.55"/>
<line x1="901.4" y1="581.4" x2="904.3" y2="574.5" stroke="#262626" stroke-width="0.5632000000000001"/>
<line x1="904.3" y1="574.5" x2="905.6" y2="569.3" stroke="#262626" stroke-width="0.55"/>
<line x1="905.6" y1="569.3" x2="905.4" y2="565.8" stroke="#262626" stroke-width="0.55"/>
<line x1="905.6" y1="569.3" x2="908.3" y2="565.6" stroke="#262626" stroke-width="0.55"/>
<line x1="904.3" y1="574.5" x2="906.5" y2="570.7" stroke="#262626" stroke-width="0.55"/>
<line x1="906.5" y1="570.7" x2="909.3" y2="569.3" stroke="#262626" stroke-width="0.55"/>
<line x1="906.5" y1="570.7" x2="907.3" y2="567.6" stroke="#262626" stroke-width="0.55"/>
<line x1="876.0" y1="612.0" x2="891.2" y2="600.0" stroke="#262626" stroke-width="1.1"/>
<line x1="891.2" y1="600.0" x2="899.2" y2="589.5" stroke="#262626" stroke-width="0.8800000000000001"/>
<line x1="899.2" y1="589.5" x2="900.1" y2="580.4" stroke="#262626" stroke-width="0.7040000000000002"/>
<line x1="900.1" y1="580.4" x2="903.1" y2="574.8" stroke="#262626" stroke-width="0.5632000000000001"/>
<line x1="903.1" y1="574.8" x2="905.5" y2="571.7" stroke="#262626" stroke-width="0.55"/>
<line x1="905.5" y1="571.7" x2="905.9" y2="569.4" stroke="#262626" stroke-width="0.55"/>
<line x1="905.5" y1="571.7" x2="908.3" y2="570.5" stroke="#262626" stroke-width="0.55"/>
<line x1="903.1" y1="574.8" x2="904.5" y2="570.6" stroke="#262626" stroke-width="0.55"/>
<line x1="904.5" y1="570.6" x2="906.5" y2="568.4" stroke="#262626" stroke-width="0.55"/>
<line x1="904.5" y1="570.6" x2="905.7" y2="567.6" stroke="#262626" stroke-width="0.55"/>
<line x1="900.1" y1="580.4" x2="899.9" y2="574.7" stroke="#262626" stroke-width="0.5632000000000001"/>
<line x1="899.9" y1="574.7" x2="899.5" y2="570.0" stroke="#262626" stroke-width="0.55"/>
<line x1="899.5" y1="570.0" x2="901.1" y2="566.9" stroke="#262626" stroke-width="0.55"/>
<line x1="899.5" y1="570.0" x2="899.5" y2="566.8" stroke="#262626" stroke-width="0.55"/>
<line x1="899.9" y1="574.7" x2="898.2" y2="570.4" stroke="#262626" stroke-width="0.55"/>
<line x1="898.2" y1="570.4" x2="898.0" y2="566.6" stroke="#262626" stroke-width="0.55"/>
<line x1="898.2" y1="570.4" x2="897.2" y2="567.1" stroke="#262626" stroke-width="0.55"/>
<line x1="899.2" y1="589.5" x2="905.1" y2="583.0" stroke="#262626" stroke-width="0.7040000000000002"/>
<line x1="905.1" y1="583.0" x2="908.8" y2="577.9" stroke="#262626" stroke-width="0.5632000000000001"/>
<line x1="908.8" y1="577.9" x2="911.3" y2="574.2" stroke="#262626" stroke-width="0.55"/>
<line x1="911.3" y1="574.2" x2="911.4" y2="570.7" stroke="#262626" stroke-width="0.55"/>
<line x1="911.3" y1="574.2" x2="911.8" y2="571.4" stroke="#262626" stroke-width="0.55"/>
<line x1="908.8" y1="577.9" x2="912.3" y2="576.6" stroke="#262626" stroke-width="0.55"/>
<line x1="912.3" y1="576.6" x2="914.4" y2="577.1" stroke="#262626" stroke-width="0.55"/>
<line x1="912.3" y1="576.6" x2="914.3" y2="574.7" stroke="#262626" stroke-width="0.55"/>
<line x1="905.1" y1="583.0" x2="908.6" y2="579.2" stroke="#262626" stroke-width="0.5632000000000001"/>
<line x1="908.6" y1="579.2" x2="909.5" y2="575.7" stroke="#262626" stroke-width="0.55"/>
<line x1="909.5" y1="575.7" x2="910.9" y2="573.7" stroke="#262626" stroke-width="0.55"/>
<line x1="909.5" y1="575.7" x2="910.7" y2="573.9" stroke="#262626" stroke-width="0.55"/>
<line x1="908.6" y1="579.2" x2="911.1" y2="576.0" stroke="#262626" stroke-width="0.55"/>
<line x1="911.1" y1="576.0" x2="911.2" y2="573.5" stroke="#262626" stroke-width="0.55"/>
<line x1="911.1" y1="576.0" x2="913.8" y2="574.8" stroke="#262626" stroke-width="0.55"/>
<line x1="891.2" y1="600.0" x2="902.8" y2="596.3" stroke="#262626" stroke-width="0.8800000000000001"/>
<line x1="902.8" y1="596.3" x2="909.6" y2="591.4" stroke="#262626" stroke-width="0.7040000000000002"/>
<line x1="909.6" y1="591.4" x2="915.8" y2="590.1" stroke="#262626" stroke-width="0.5632000000000001"/>
<line x1="909.6" y1="591.4" x2="913.9" y2="586.3" stroke="#262626" stroke-width="0.5632000000000001"/>
<line x1="913.9" y1="586.3" x2="915.4" y2="582.4" stroke="#262626" stroke-width="0.55"/>
<line x1="915.4" y1="582.4" x2="915.5" y2="580.0" stroke="#262626" stroke-width="0.55"/>
<line x1="915.4" y1="582.4" x2="917.4" y2="579.5" stroke="#262626" stroke-width="0.55"/>
<line x1="913.9" y1="586.3" x2="915.7" y2="582.0" stroke="#262626" stroke-width="0.55"/>
<line x1="915.7" y1="582.0" x2="917.0" y2="579.6" stroke="#262626" stroke-width="0.55"/>
<line x1="915.7" y1="582.0" x2="916.7" y2="579.1" stroke="#262626" stroke-width="0.55"/>
<line x1="902.8" y1="596.3" x2="909.7" y2="594.0" stroke="#262626" stroke-width="0.7040000000000002"/>
<line x1="909.7" y1="594.0" x2="913.5" y2="591.5" stroke="#262626" stroke-width="0.5632000000000001"/>
<line x1="913.5" y1="591.5" x2="916.0" y2="590.1" stroke="#262626" stroke-width="0.55"/>
<line x1="916.0" y1="590.1" x2="917.6" y2="589.1" stroke="#262626" stroke-width="0.55"/>
<line x1="913.5" y1="591.5" x2="916.2" y2="590.6" stroke="#262626" stroke-width="0.55"/>
<line x1="916.2" y1="590.6" x2="917.6" y2="589.1" stroke="#262626" stroke-width="0.55"/>
<line x1="909.7" y1="594.0" x2="915.5" y2="595.5" stroke="#262626" stroke-width="0.5632000000000001"/>
<line x1="876.0" y1="612.0" x2="871.0" y2="598.5" stroke="#262626" stroke-width="1.1"/>
<line x1="871.0" y1="598.5" x2="865.8" y2="592.2" stroke="#262626" stroke-width="0.8800000000000001"/>
<line x1="865.8" y1="592.2" x2="863.6" y2="586.2" stroke="#262626" stroke-width="0.7040000000000002"/>
<line x1="863.6" y1="586.2" x2="861.1" y2="583.1" stroke="#262626" stroke-width="0.5632000000000001"/>
<line x1="861.1" y1="583.1" x2="859.1" y2="580.6" stroke="#262626" stroke-width="0.55"/>
<line x1="859.1" y1="580.6" x2="857.5" y2="579.1" stroke="#262626" stroke-width="0.55"/>
<line x1="859.1" y1="580.6" x2="857.5" y2="579.1" stroke="#262626" stroke-width="0.55"/>
<line x1="861.1" y1="583.1" x2="858.6" y2="581.7" stroke="#262626" stroke-width="0.55"/>
<line x1="858.6" y1="581.7" x2="856.2" y2="581.7" stroke="#262626" stroke-width="0.55"/>
<line x1="858.6" y1="581.7" x2="857.4" y2="580.6" stroke="#262626" stroke-width="0.55"/>
<line x1="863.6" y1="586.2" x2="861.5" y2="582.3" stroke="#262626" stroke-width="0.5632000000000001"/>
<line x1="861.5" y1="582.3" x2="861.1" y2="579.6" stroke="#262626" stroke-width="0.55"/>
<line x1="861.1" y1="579.6" x2="860.1" y2="577.5" stroke="#262626" stroke-width="0.55"/>
<line x1="861.1" y1="579.6" x2="860.3" y2="577.5" stroke="#262626" stroke-width="0.55"/>
<line x1="861.5" y1="582.3" x2="860.3" y2="579.6" stroke="#262626" stroke-width="0.55"/>
<line x1="860.3" y1="579.6" x2="859.2" y2="578.0" stroke="#262626" stroke-width="0.55"/>
<line x1="860.3" y1="579.6" x2="859.9" y2="578.0" stroke="#262626" stroke-width="0.55"/>
<line x1="865.8" y1="592.2" x2="859.5" y2="589.4" stroke="#262626" stroke-width="0.7040000000000002"/>
<line x1="859.5" y1="589.4" x2="855.1" y2="589.2" stroke="#262626" stroke-width="0.5632000000000001"/>
<line x1="855.1" y1="589.2" x2="852.3" y2="587.0" stroke="#262626" stroke-width="0.55"/>
<line x1="852.3" y1="587.0" x2="851.4" y2="585.0" stroke="#262626" stroke-width="0.55"/>
<line x1="852.3" y1="587.0" x2="851.0" y2="584.9" stroke="#262626" stroke-width="0.55"/>
<line x1="855.1" y1="589.2" x2="852.0" y2="588.2" stroke="#262626" stroke-width="0.55"/>
<line x1="852.0" y1="588.2" x2="850.5" y2="586.8" stroke="#262626" stroke-width="0.55"/>
<line x1="852.0" y1="588.2" x2="849.5" y2="587.1" stroke="#262626" stroke-width="0.55"/>
<line x1="859.5" y1="589.4" x2="855.6" y2="586.4" stroke="#262626" stroke-width="0.5632000000000001"/>
<line x1="855.6" y1="586.4" x2="852.1" y2="584.3" stroke="#262626" stroke-width="0.55"/>
<line x1="852.1" y1="584.3" x2="849.8" y2="583.5" stroke="#262626" stroke-width="0.55"/>
<line x1="852.1" y1="584.3" x2="849.0" y2="583.0" stroke="#262626" stroke-width="0.55"/>
<line x1="855.6" y1="586.4" x2="853.2" y2="583.8" stroke="#262626" stroke-width="0.55"/>
<line x1="853.2" y1="583.8" x2="852.5" y2="581.6" stroke="#262626" stroke-width="0.55"/>
<line x1="853.2" y1="583.8" x2="851.5" y2="581.4" stroke="#262626" stroke-width="0.55"/>
<line x1="871.0" y1="598.5" x2="868.9" y2="587.2" stroke="#262626" stroke-width="0.8800000000000001"/>
<line x1="868.9" y1="587.2" x2="870.2" y2="577.6" stroke="#262626" stroke-width="0.7040000000000002"/>
<line x1="870.2" y1="577.6" x2="869.7" y2="571.8" stroke="#262626" stroke-width="0.5632000000000001"/>
<line x1="869.7" y1="571.8" x2="868.5" y2="568.6" stroke="#262626" stroke-width="0.55"/>
<line x1="868.5" y1="568.6" x2="867.9" y2="566.3" stroke="#262626" stroke-width="0.55"/>
<line x1="868.5" y1="568.6" x2="868.8" y2="565.9" stroke="#262626" stroke-width="0.55"/>
<line x1="869.7" y1="571.8" x2="867.4" y2="568.0" stroke="#262626" stroke-width="0.55"/>
<line x1="867.4" y1="568.0" x2="864.4" y2="565.9" stroke="#262626" stroke-width="0.55"/>
<line x1="867.4" y1="568.0" x2="866.3" y2="565.4" stroke="#262626" stroke-width="0.55"/>
<line x1="870.2" y1="577.6" x2="871.7" y2="571.1" stroke="#262626" stroke-width="0.5632000000000001"/>
<line x1="871.7" y1="571.1" x2="870.8" y2="566.2" stroke="#262626" stroke-width="0.55"/>
<line x1="870.8" y1="566.2" x2="871.7" y2="562.6" stroke="#262626" stroke-width="0.55"/>
<line x1="870.8" y1="566.2" x2="870.4" y2="563.1" stroke="#262626" stroke-width="0.55"/>
<line x1="871.7" y1="571.1" x2="872.6" y2="566.1" stroke="#262626" stroke-width="0.55"/>
<line x1="872.6" y1="566.1" x2="871.6" y2="563.4" stroke="#262626" stroke-width="0.55"/>
<line x1="872.6" y1="566.1" x2="872.5" y2="563.2" stroke="#262626" stroke-width="0.55"/>
<line x1="868.9" y1="587.2" x2="869.5" y2="580.5" stroke="#262626" stroke-width="0.7040000000000002"/>
<line x1="869.5" y1="580.5" x2="872.4" y2="576.7" stroke="#262626" stroke-width="0.5632000000000001"/>
<line x1="872.4" y1="576.7" x2="873.3" y2="574.0" stroke="#262626" stroke-width="0.55"/>
<line x1="873.3" y1="574.0" x2="874.9" y2="572.5" stroke="#262626" stroke-width="0.55"/>
<line x1="873.3" y1="574.0" x2="873.3" y2="572.0" stroke="#262626" stroke-width="0.55"/>
<line x1="872.4" y1="576.7" x2="875.0" y2="574.0" stroke="#262626" stroke-width="0.55"/>
<line x1="875.0" y1="574.0" x2="877.5" y2="573.2" stroke="#262626" stroke-width="0.55"/>
<line x1="875.0" y1="574.0" x2="875.9" y2="570.8" stroke="#262626" stroke-width="0.55"/>
<line x1="869.5" y1="580.5" x2="871.8" y2="576.0" stroke="#262626" stroke-width="0.5632000000000001"/>
<line x1="871.8" y1="576.0" x2="873.7" y2="572.8" stroke="#262626" stroke-width="0.55"/>
<line x1="873.7" y1="572.8" x2="875.9" y2="571.7" stroke="#262626" stroke-width="0.55"/>
<line x1="873.7" y1="572.8" x2="874.3" y2="570.2" stroke="#262626" stroke-width="0.55"/>
<line x1="871.8" y1="576.0" x2="875.4" y2="573.8" stroke="#262626" stroke-width="0.55"/>
<line x1="875.4" y1="573.8" x2="877.0" y2="571.3" stroke="#262626" stroke-width="0.55"/>
<line x1="875.4" y1="573.8" x2="878.1" y2="572.5" stroke="#262626" stroke-width="0.55"/>
<line x1="876.0" y1="612.0" x2="886.7" y2="597.7" stroke="#262626" stroke-width="1.1"/>
<line x1="886.7" y1="597.7" x2="895.2" y2="588.2" stroke="#262626" stroke-width="0.8800000000000001"/>
<line x1="895.2" y1="588.2" x2="902.7" y2="585.8" stroke="#262626" stroke-width="0.7040000000000002"/>
<line x1="902.7" y1="585.8" x2="906.7" y2="583.3" stroke="#262626" stroke-width="0.5632000000000001"/>
<line x1="906.7" y1="583.3" x2="910.1" y2="581.2" stroke="#262626" stroke-width="0.55"/>
<line x1="910.1" y1="581.2" x2="912.6" y2="579.3" stroke="#262626" stroke-width="0.55"/>
<line x1="910.1" y1="581.2" x2="911.6" y2="579.5" stroke="#262626" stroke-width="0.55"/>
<line x1="906.7" y1="583.3" x2="908.5" y2="580.5" stroke="#262626" stroke-width="0.55"/>
<line x1="908.5" y1="580.5" x2="909.1" y2="578.7" stroke="#262626" stroke-width="0.55"/>
<line x1="908.5" y1="580.5" x2="909.7" y2="578.6" stroke="#262626" stroke-width="0.55"/>
<line x1="902.7" y1="585.8" x2="908.3" y2="587.2" stroke="#262626" stroke-width="0.5632000000000001"/>
<line x1="908.3" y1="587.2" x2="912.6" y2="586.6" stroke="#262626" stroke-width="0.55"/>
<line x1="912.6" y1="586.6" x2="916.1" y2="587.4" stroke="#262626" stroke-width="0.55"/>
<line x1="912.6" y1="586.6" x2="915.2" y2="586.9" stroke="#262626" stroke-width="0.55"/>
<line x1="908.3" y1="587.2" x2="912.5" y2="589.7" stroke="#262626" stroke-width="0.55"/>
<line x1="912.5" y1="589.7" x2="915.2" y2="591.7" stroke="#262626" stroke-width="0.55"/>
<line x1="912.5" y1="589.7" x2="915.5" y2="590.5" stroke="#262626" stroke-width="0.55"/>
<line x1="895.2" y1="588.2" x2="904.3" y2="584.5" stroke="#262626" stroke-width="0.7040000000000002"/>
<line x1="904.3" y1="584.5" x2="912.0" y2="584.6" stroke="#262626" stroke-width="0.5632000000000001"/>
<line x1="912.0" y1="584.6" x2="917.7" y2="583.8" stroke="#262626" stroke-width="0.55"/>
<line x1="912.0" y1="584.6" x2="916.4" y2="587.4" stroke="#262626" stroke-width="0.55"/>
<line x1="904.3" y1="584.5" x2="909.8" y2="579.0" stroke="#262626" stroke-width="0.5632000000000001"/>
<line x1="909.8" y1="579.0" x2="912.3" y2="574.8" stroke="#262626" stroke-width="0.55"/>
<line x1="912.3" y1="574.8" x2="913.0" y2="572.2" stroke="#262626" stroke-width="0.55"/>
<line x1="912.3" y1="574.8" x2="915.3" y2="572.7" stroke="#262626" stroke-width="0.55"/>
<line x1="909.8" y1="579.0" x2="911.2" y2="572.6" stroke="#262626" stroke-width="0.55"/>
<line x1="911.2" y1="572.6" x2="911.8" y2="568.9" stroke="#262626" stroke-width="0.55"/>
<line x1="911.2" y1="572.6" x2="912.4" y2="567.3" stroke="#262626" stroke-width="0.55"/>
<line x1="886.7" y1="597.7" x2="894.4" y2="584.8" stroke="#262626" stroke-width="0.8800000000000001"/>
<line x1="894.4" y1="584.8" x2="903.2" y2="576.4" stroke="#262626" stroke-width="0.7040000000000002"/>
<line x1="903.2" y1="576.4" x2="906.0" y2="569.0" stroke="#262626" stroke-width="0.5632000000000001"/>
<line x1="906.0" y1="569.0" x2="910.7" y2="565.4" stroke="#262626" stroke-width="0.55"/>
<line x1="910.7" y1="565.4" x2="914.0" y2="562.5" stroke="#262626" stroke-width="0.55"/>
<line x1="906.0" y1="569.0" x2="909.3" y2="565.1" stroke="#262626" stroke-width="0.55"/>
<line x1="909.3" y1="565.1" x2="912.2" y2="562.6" stroke="#262626" stroke-width="0.55"/>
<line x1="909.3" y1="565.1" x2="910.8" y2="561.3" stroke="#262626" stroke-width="0.55"/>
<line x1="903.2" y1="576.4" x2="911.7" y2="571.6" stroke="#262626" stroke-width="0.5632000000000001"/>
<line x1="894.4" y1="584.8" x2="904.1" y2="579.9" stroke="#262626" stroke-width="0.7040000000000002"/>
<line x1="904.1" y1="579.9" x2="910.6" y2="575.6" stroke="#262626" stroke-width="0.5632000000000001"/>
<line x1="910.6" y1="575.6" x2="916.1" y2="575.1" stroke="#262626" stroke-width="0.55"/>
<line x1="910.6" y1="575.6" x2="914.9" y2="572.8" stroke="#262626" stroke-width="0.55"/>
<line x1="904.1" y1="579.9" x2="912.4" y2="578.4" stroke="#262626" stroke-width="0.5632000000000001"/>
<line x1="845.0" y1="615.0" x2="843.6" y2="593.8" stroke="#262626" stroke-width="1.1"/>
<line x1="843.6" y1="593.8" x2="833.4" y2="580.4" stroke="#262626" stroke-width="0.8800000000000001"/>
<line x1="833.4" y1="580.4" x2="828.5" y2="571.0" stroke="#262626" stroke-width="0.7040000000000002"/>
<line x1="828.5" y1="571.0" x2="824.8" y2="566.0" stroke="#262626" stroke-width="0.5632000000000001"/>
<line x1="824.8" y1="566.0" x2="823.9" y2="562.5" stroke="#262626" stroke-width="0.55"/>
<line x1="823.9" y1="562.5" x2="822.9" y2="560.4" stroke="#262626" stroke-width="0.55"/>
<line x1="823.9" y1="562.5" x2="823.9" y2="560.5" stroke="#262626" stroke-width="0.55"/>
<line x1="828.5" y1="571.0" x2="823.2" y2="566.1" stroke="#262626" stroke-width="0.5632000000000001"/>
<line x1="833.4" y1="580.4" x2="832.3" y2="566.6" stroke="#262626" stroke-width="0.7040000000000002"/>
<line x1="832.3" y1="566.6" x2="833.5" y2="556.2" stroke="#262626" stroke-width="0.5632000000000001"/>
<line x1="833.5" y1="556.2" x2="836.9" y2="551.4" stroke="#262626" stroke-width="0.55"/>
<line x1="836.9" y1="551.4" x2="841.2" y2="549.3" stroke="#262626" stroke-width="0.55"/>
<line x1="836.9" y1="551.4" x2="838.1" y2="547.3" stroke="#262626" stroke-width="0.55"/>
<line x1="833.5" y1="556.2" x2="836.5" y2="551.1" stroke="#262626" stroke-width="0.55"/>
<line x1="836.5" y1="551.1" x2="838.8" y2="548.0" stroke="#262626" stroke-width="0.55"/>
<line x1="836.5" y1="551.1" x2="840.8" y2="548.5" stroke="#262626" stroke-width="0.55"/>
<line x1="832.3" y1="566.6" x2="833.1" y2="558.5" stroke="#262626" stroke-width="0.5632000000000001"/>
<line x1="833.1" y1="558.5" x2="832.4" y2="553.1" stroke="#262626" stroke-width="0.55"/>
<line x1="832.4" y1="553.1" x2="831.3" y2="548.9" stroke="#262626" stroke-width="0.55"/>
<line x1="832.4" y1="553.1" x2="831.4" y2="549.9" stroke="#262626" stroke-width="0.55"/>
<line x1="833.1" y1="558.5" x2="836.0" y2="553.5" stroke="#262626" stroke-width="0.55"/>
<line x1="836.0" y1="553.5" x2="837.7" y2="550.4" stroke="#262626" stroke-width="0.55"/>
<line x1="836.0" y1="553.5" x2="836.5" y2="549.6" stroke="#262626" stroke-width="0.55"/>
<line x1="843.6" y1="593.8" x2="836.6" y2="582.6" stroke="#262626" stroke-width="0.8800000000000001"/>
<line x1="836.6" y1="582.6" x2="833.3" y2="575.9" stroke="#262626" stroke-width="0.7040000000000002"/>
<line x1="833.3" y1="575.9" x2="830.8" y2="570.1" stroke="#262626" stroke-width="0.5632000000000001"/>
<line x1="830.8" y1="570.1" x2="830.7" y2="566.3" stroke="#262626" stroke-width="0.55"/>
<line x1="830.7" y1="566.3" x2="830.5" y2="563.5" stroke="#262626" stroke-width="0.55"/>
<line x1="830.7" y1="566.3" x2="832.2" y2="563.9" stroke="#262626" stroke-width="0.55"/>
<line x1="830.8" y1="570.1" x2="830.0" y2="565.6" stroke="#262626" stroke-width="0.55"/>
<line x1="830.0" y1="565.6" x2="828.9" y2="562.4" stroke="#262626" stroke-width="0.55"/>
<line x1="830.0" y1="565.6" x2="831.2" y2="562.5" stroke="#262626" stroke-width="0.55"/>
<line x1="833.3" y1="575.9" x2="828.6" y2="573.0" stroke="#262626" stroke-width="0.5632000000000001"/>
<line x1="828.6" y1="573.0" x2="827.1" y2="569.6" stroke="#262626" stroke-width="0.55"/>
<line x1="827.1" y1="569.6" x2="826.5" y2="567.3" stroke="#262626" stroke-width="0.55"/>
<line x1="827.1" y1="569.6" x2="826.2" y2="567.5" stroke="#262626" stroke-width="0.55"/>
<line x1="828.6" y1="573.0" x2="825.4" y2="570.1" stroke="#262626" stroke-width="0.55"/>
<line x1="825.4" y1="570.1" x2="822.8" y2="569.0" stroke="#262626" stroke-width="0.55"/>
<line x1="825.4" y1="570.1" x2="824.2" y2="567.1" stroke="#262626" stroke-width="0.55"/>
<line x1="836.6" y1="582.6" x2="827.8" y2="577.7" stroke="#262626" stroke-width="0.7040000000000002"/>
<line x1="827.8" y1="577.7" x2="820.3" y2="575.5" stroke="#262626" stroke-width="0.5632000000000001"/>
<line x1="827.8" y1="577.7" x2="821.4" y2="574.5" stroke="#262626" stroke-width="0.5632000000000001"/>
<line x1="845.0" y1="615.0" x2="852.9" y2="597.0" stroke="#262626" stroke-width="1.1"/>
<line x1="852.9" y1="597.0" x2="855.6" y2="586.4" stroke="#262626" stroke-width="0.8800000000000001"/>
<line x1="855.6" y1="586.4" x2="860.1" y2="579.9" stroke="#262626" stroke-width="0.7040000000000002"/>
<line x1="860.1" y1="579.9" x2="864.1" y2="575.3" stroke="#262626" stroke-width="0.5632000000000001"/>
<line x1="864.1" y1="575.3" x2="866.6" y2="572.8" stroke="#262626" stroke-width="0.55"/>
<line x1="866.6" y1="572.8" x2="868.1" y2="570.3" stroke="#262626" stroke-width="0.55"/>
<line x1="866.6" y1="572.8" x2="868.3" y2="571.0" stroke="#262626" stroke-width="0.55"/>
<line x1="864.1" y1="575.3" x2="866.5" y2="571.2" stroke="#262626" stroke-width="0.55"/>
<line x1="866.5" y1="571.2" x2="866.3" y2="568.5" stroke="#262626" stroke-width="0.55"/>
<line x1="866.5" y1="571.2" x2="869.0" y2="569.0" stroke="#262626" stroke-width="0.55"/>
<line x1="860.1" y1="579.9" x2="860.6" y2="575.3" stroke="#262626" stroke-width="0.5632000000000001"/>
<line x1="860.6" y1="575.3" x2="859.2" y2="572.6" stroke="#262626" stroke-width="0.55"/>
<line x1="859.2" y1="572.6" x2="857.9" y2="570.8" stroke="#262626" stroke-width="0.55"/>
<line x1="859.2" y1="572.6" x2="857.8" y2="571.8" stroke="#262626" stroke-width="0.55"/>
<line x1="860.6" y1="575.3" x2="861.5" y2="572.8" stroke="#262626" stroke-width="0.55"/>
<line x1="861.5" y1="572.8" x2="862.6" y2="571.5" stroke="#262626" stroke-width="0.55"/>
<line x1="861.5" y1="572.8" x2="861.8" y2="570.6" stroke="#262626" stroke-width="0.55"/>
<line x1="855.6" y1="586.4" x2="857.4" y2="578.0" stroke="#262626" stroke-width="0.7040000000000002"/>
<line x1="857.4" y1="578.0" x2="862.3" y2="573.1" stroke="#262626" stroke-width="0.5632000000000001"/>
<line x1="862.3" y1="573.1" x2="864.7" y2="568.2" stroke="#262626" stroke-width="0.55"/>
<line x1="864.7" y1="568.2" x2="866.9" y2="565.2" stroke="#262626" stroke-width="0.55"/>
<line x1="864.7" y1="568.2" x2="864.4" y2="565.0" stroke="#262626" stroke-width="0.55"/>
<line x1="862.3" y1="573.1" x2="864.5" y2="569.8" stroke="#262626" stroke-width="0.55"/>
<line x1="864.5" y1="569.8" x2="866.9" y2="568.1" stroke="#262626" stroke-width="0.55"/>
<line x1="864.5" y1="569.8" x2="866.2" y2="567.8" stroke="#262626" stroke-width="0.55"/>
<line x1="857.4" y1="578.0" x2="857.8" y2="570.9" stroke="#262626" stroke-width="0.5632000000000001"/>
<line x1="857.8" y1="570.9" x2="860.3" y2="566.3" stroke="#262626" stroke-width="0.55"/>
<line x1="860.3" y1="566.3" x2="862.8" y2="563.0" stroke="#262626" stroke-width="0.55"/>
<line x1="860.3" y1="566.3" x2="863.1" y2="564.2" stroke="#262626" stroke-width="0.55"/>
<line x1="857.8" y1="570.9" x2="858.6" y2="567.1" stroke="#262626" stroke-width="0.55"/>
<line x1="858.6" y1="567.1" x2="858.1" y2="564.8" stroke="#262626" stroke-width="0.55"/>
<line x1="858.6" y1="567.1" x2="858.5" y2="564.8" stroke="#262626" stroke-width="0.55"/>
<line x1="852.9" y1="597.0" x2="861.4" y2="586.4" stroke="#262626" stroke-width="0.8800000000000001"/>
<line x1="861.4" y1="586.4" x2="867.3" y2="578.2" stroke="#262626" stroke-width="0.7040000000000002"/>
<line x1="867.3" y1="578.2" x2="868.0" y2="571.7" stroke="#262626" stroke-width="0.5632000000000001"/>
<line x1="868.0" y1="571.7" x2="869.1" y2="567.9" stroke="#262626" stroke-width="0.55"/>
<line x1="869.1" y1="567.9" x2="869.2" y2="565.2" stroke="#262626" stroke-width="0.55"/>
<line x1="869.1" y1="567.9" x2="870.3" y2="564.9" stroke="#262626" stroke-width="0.55"/>
<line x1="868.0" y1="571.7" x2="867.4" y2="568.0" stroke="#262626" stroke-width="0.55"/>
<line x1="867.4" y1="568.0" x2="867.1" y2="565.6" stroke="#262626" stroke-width="0.55"/>
<line x1="867.4" y1="568.0" x2="868.3" y2="565.8" stroke="#262626" stroke-width="0.55"/>
<line x1="867.3" y1="578.2" x2="868.2" y2="572.4" stroke="#262626" stroke-width="0.5632000000000001"/>
<line x1="868.2" y1="572.4" x2="870.1" y2="569.1" stroke="#262626" stroke-width="0.55"/>
<line x1="870.1" y1="569.1" x2="871.7" y2="566.4" stroke="#262626" stroke-width="0.55"/>
<line x1="870.1" y1="569.1" x2="871.9" y2="567.1" stroke="#262626" stroke-width="0.55"/>
<line x1="868.2" y1="572.4" x2="870.1" y2="569.0" stroke="#262626" stroke-width="0.55"/>
<line x1="870.1" y1="569.0" x2="872.5" y2="567.1" stroke="#262626" stroke-width="0.55"/>
<line x1="870.1" y1="569.0" x2="869.8" y2="566.1" stroke="#262626" stroke-width="0.55"/>
<line x1="861.4" y1="586.4" x2="865.5" y2="579.1" stroke="#262626" stroke-width="0.7040000000000002"/>
<line x1="865.5" y1="579.1" x2="870.7" y2="576.2" stroke="#262626" stroke-width="0.5632000000000001"/>
<line x1="870.7" y1="576.2" x2="874.9" y2="573.9" stroke="#262626" stroke-width="0.55"/>
<line x1="874.9" y1="573.9" x2="876.6" y2="570.5" stroke="#262626" stroke-width="0.55"/>
<line x1="874.9" y1="573.9" x2="878.9" y2="573.3" stroke="#262626" stroke-width="0.55"/>
<line x1="870.7" y1="576.2" x2="872.6" y2="572.9" stroke="#262626" stroke-width="0.55"/>
<line x1="872.6" y1="572.9" x2="873.1" y2="570.3" stroke="#262626" stroke-width="0.55"/>
<line x1="872.6" y1="572.9" x2="874.5" y2="570.5" stroke="#262626" stroke-width="0.55"/>
<line x1="865.5" y1="579.1" x2="868.2" y2="575.4" stroke="#262626" stroke-width="0.5632000000000001"/>
<line x1="868.2" y1="575.4" x2="868.5" y2="571.8" stroke="#262626" stroke-width="0.55"/>
<line x1="868.5" y1="571.8" x2="868.7" y2="569.7" stroke="#262626" stroke-width="0.55"/>
<line x1="868.5" y1="571.8" x2="868.9" y2="569.2" stroke="#262626" stroke-width="0.55"/>
<line x1="868.2" y1="575.4" x2="870.8" y2="572.6" stroke="#262626" stroke-width="0.55"/>
<line x1="870.8" y1="572.6" x2="873.4" y2="571.0" stroke="#262626" stroke-width="0.55"/>
<line x1="870.8" y1="572.6" x2="872.0" y2="569.6" stroke="#262626" stroke-width="0.55"/>
<line x1="845.0" y1="615.0" x2="833.2" y2="599.1" stroke="#262626" stroke-width="1.1"/>
<line x1="833.2" y1="599.1" x2="824.5" y2="589.2" stroke="#262626" stroke-width="0.8800000000000001"/>
<line x1="824.5" y1="589.2" x2="819.6" y2="580.0" stroke="#262626" stroke-width="0.7040000000000002"/>
<line x1="819.6" y1="580.0" x2="819.7" y2="572.5" stroke="#262626" stroke-width="0.5632000000000001"/>
<line x1="819.7" y1="572.5" x2="823.2" y2="567.4" stroke="#262626" stroke-width="0.55"/>
<line x1="823.2" y1="567.4" x2="824.4" y2="562.8" stroke="#262626" stroke-width="0.55"/>
<line x1="823.2" y1="567.4" x2="824.7" y2="562.9" stroke="#262626" stroke-width="0.55"/>
<line x1="824.5" y1="589.2" x2="821.5" y2="580.9" stroke="#262626" stroke-width="0.7040000000000002"/>
<line x1="821.5" y1="580.9" x2="820.8" y2="574.8" stroke="#262626" stroke-width="0.5632000000000001"/>
<line x1="833.2" y1="599.1" x2="824.1" y2="592.3" stroke="#262626" stroke-width="0.8800000000000001"/>
<line x1="824.1" y1="592.3" x2="818.3" y2="586.8" stroke="#262626" stroke-width="0.7040000000000002"/>
<line x1="824.1" y1="592.3" x2="820.8" y2="584.9" stroke="#262626" stroke-width="0.7040000000000002"/>
<line x1="820.8" y1="584.9" x2="819.3" y2="578.3" stroke="#262626" stroke-width="0.5632000000000001"/>
<line x1="819.3" y1="578.3" x2="820.0" y2="574.5" stroke="#262626" stroke-width="0.55"/>
<line x1="820.0" y1="574.5" x2="819.9" y2="571.7" stroke="#262626" stroke-width="0.55"/>
<line x1="820.0" y1="574.5" x2="821.5" y2="572.7" stroke="#262626" stroke-width="0.55"/>
<line x1="820.8" y1="584.9" x2="819.7" y2="578.6" stroke="#262626" stroke-width="0.5632000000000001"/>
<line x1="819.7" y1="578.6" x2="821.0" y2="574.3" stroke="#262626" stroke-width="0.55"/>
<line x1="821.0" y1="574.3" x2="821.2" y2="571.4" stroke="#262626" stroke-width="0.55"/>
<line x1="821.0" y1="574.3" x2="822.7" y2="571.5" stroke="#262626" stroke-width="0.55"/>
<line x1="845.0" y1="615.0" x2="856.4" y2="599.8" stroke="#262626" stroke-width="1.1"/>
<line x1="856.4" y1="599.8" x2="865.4" y2="593.5" stroke="#262626" stroke-width="0.8800000000000001"/>
<line x1="865.4" y1="593.5" x2="873.5" y2="592.7" stroke="#262626" stroke-width="0.7040000000000002"/>
<line x1="873.5" y1="592.7" x2="878.9" y2="589.4" stroke="#262626" stroke-width="0.5632000000000001"/>
<line x1="878.9" y1="589.4" x2="882.9" y2="586.2" stroke="#262626" stroke-width="0.55"/>
<line x1="882.9" y1="586.2" x2="884.5" y2="583.4" stroke="#262626" stroke-width="0.55"/>
<line x1="882.9" y1="586.2" x2="885.2" y2="583.8" stroke="#262626" stroke-width="0.55"/>
<line x1="878.9" y1="589.4" x2="882.3" y2="586.2" stroke="#262626" stroke-width="0.55"/>
<line x1="882.3" y1="586.2" x2="883.2" y2="583.8" stroke="#262626" stroke-width="0.55"/>
<line x1="882.3" y1="586.2" x2="885.2" y2="583.8" stroke="#262626" stroke-width="0.55"/>
<line x1="873.5" y1="592.7" x2="879.0" y2="590.6" stroke="#262626" stroke-width="0.5632000000000001"/>
<line x1="879.0" y1="590.6" x2="881.8" y2="588.8" stroke="#262626" stroke-width="0.55"/>
<line x1="881.8" y1="588.8" x2="884.4" y2="587.8" stroke="#262626" stroke-width="0.55"/>
<line x1="881.8" y1="588.8" x2="883.4" y2="587.2" stroke="#262626" stroke-width="0.55"/>
<line x1="879.0" y1="590.6" x2="883.5" y2="590.4" stroke="#262626" stroke-width="0.55"/>
<line x1="883.5" y1="590.4" x2="885.9" y2="591.5" stroke="#262626" stroke-width="0.55"/>
<line x1="883.5" y1="590.4" x2="886.1" y2="589.5" stroke="#262626" stroke-width="0.55"/>
<line x1="865.4" y1="593.5" x2="871.8" y2="592.6" stroke="#262626" stroke-width="0.7040000000000002"/>
<line x1="871.8" y1="592.6" x2="876.3" y2="592.8" stroke="#262626" stroke-width="0.5632000000000001"/>
<line x1="876.3" y1="592.8" x2="878.6" y2="593.7" stroke="#262626" stroke-width="0.55"/>
<line x1="878.6" y1="593.7" x2="880.1" y2="595.3" stroke="#262626" stroke-width="0.55"/>
<line x1="878.6" y1="593.7" x2="880.1" y2="593.6" stroke="#262626" stroke-width="0.55"/>
<line x1="876.3" y1="592.8" x2="878.9" y2="591.7" stroke="#262626" stroke-width="0.55"/>
<line x1="878.9" y1="591.7" x2="880.8" y2="590.2" stroke="#262626" stroke-width="0.55"/>
<line x1="878.9" y1="591.7" x2="880.5" y2="590.6" stroke="#262626" stroke-width="0.55"/>
<line x1="871.8" y1="592.6" x2="877.0" y2="592.1" stroke="#262626" stroke-width="0.5632000000000001"/>
<line x1="877.0" y1="592.1" x2="880.4" y2="591.0" stroke="#262626" stroke-width="0.55"/>
<line x1="880.4" y1="591.0" x2="882.3" y2="588.8" stroke="#262626" stroke-width="0.55"/>
<line x1="880.4" y1="591.0" x2="882.1" y2="589.1" stroke="#262626" stroke-width="0.55"/>
<line x1="877.0" y1="592.1" x2="880.8" y2="593.1" stroke="#262626" stroke-width="0.55"/>
<line x1="880.8" y1="593.1" x2="883.7" y2="592.8" stroke="#262626" stroke-width="0.55"/>
<line x1="880.8" y1="593.1" x2="883.8" y2="592.8" stroke="#262626" stroke-width="0.55"/>
<line x1="856.4" y1="599.8" x2="859.8" y2="586.9" stroke="#262626" stroke-width="0.8800000000000001"/>
<line x1="859.8" y1="586.9" x2="860.3" y2="576.1" stroke="#262626" stroke-width="0.7040000000000002"/>
<line x1="860.3" y1="576.1" x2="858.0" y2="570.0" stroke="#262626" stroke-width="0.5632000000000001"/>
<line x1="858.0" y1="570.0" x2="859.1" y2="565.2" stroke="#262626" stroke-width="0.55"/>
<line x1="859.1" y1="565.2" x2="858.6" y2="562.3" stroke="#262626" stroke-width="0.55"/>
<line x1="859.1" y1="565.2" x2="859.2" y2="561.6" stroke="#262626" stroke-width="0.55"/>
<line x1="858.0" y1="570.0" x2="855.1" y2="567.6" stroke="#262626" stroke-width="0.55"/>
<line x1="855.1" y1="567.6" x2="852.7" y2="566.5" stroke="#262626" stroke-width="0.55"/>
<line x1="855.1" y1="567.6" x2="852.8" y2="567.0" stroke="#262626" stroke-width="0.55"/>
<line x1="860.3" y1="576.1" x2="858.3" y2="567.3" stroke="#262626" stroke-width="0.5632000000000001"/>
<line x1="858.3" y1="567.3" x2="858.2" y2="560.7" stroke="#262626" stroke-width="0.55"/>
<line x1="858.2" y1="560.7" x2="858.6" y2="557.0" stroke="#262626" stroke-width="0.55"/>
<line x1="858.2" y1="560.7" x2="859.8" y2="557.0" stroke="#262626" stroke-width="0.55"/>
<line x1="858.3" y1="567.3" x2="857.6" y2="560.1" stroke="#262626" stroke-width="0.55"/>
<line x1="857.6" y1="560.1" x2="855.4" y2="556.2" stroke="#262626" stroke-width="0.55"/>
<line x1="857.6" y1="560.1" x2="859.7" y2="555.5" stroke="#262626" stroke-width="0.55"/>
<line x1="859.8" y1="586.9" x2="863.3" y2="578.1" stroke="#262626" stroke-width="0.7040000000000002"/>
<line x1="863.3" y1="578.1" x2="863.2" y2="570.9" stroke="#262626" stroke-width="0.5632000000000001"/>
<line x1="863.2" y1="570.9" x2="864.6" y2="567.0" stroke="#262626" stroke-width="0.55"/>
<line x1="864.6" y1="567.0" x2="866.7" y2="564.1" stroke="#262626" stroke-width="0.55"/>
<line x1="864.6" y1="567.0" x2="866.2" y2="564.1" stroke="#262626" stroke-width="0.55"/>
<line x1="863.2" y1="570.9" x2="861.9" y2="565.8" stroke="#262626" stroke-width="0.55"/>
<line x1="861.9" y1="565.8" x2="862.5" y2="562.1" stroke="#262626" stroke-width="0.55"/>
<line x1="861.9" y1="565.8" x2="861.7" y2="562.5" stroke="#262626" stroke-width="0.55"/>
<line x1="863.3" y1="578.1" x2="863.6" y2="570.4" stroke="#262626" stroke-width="0.5632000000000001"/>
<line x1="863.6" y1="570.4" x2="863.7" y2="566.0" stroke="#262626" stroke-width="0.55"/>
<line x1="863.7" y1="566.0" x2="864.2" y2="563.4" stroke="#262626" stroke-width="0.55"/>
<line x1="863.7" y1="566.0" x2="863.7" y2="563.3" stroke="#262626" stroke-width="0.55"/>
<line x1="863.6" y1="570.4" x2="863.8" y2="565.3" stroke="#262626" stroke-width="0.55"/>
<line x1="863.8" y1="565.3" x2="863.2" y2="561.6" stroke="#262626" stroke-width="0.55"/>
<line x1="863.8" y1="565.3" x2="864.2" y2="561.3" stroke="#262626" stroke-width="0.55"/>
<line x1="825.9" y1="593.9" x2="829.3" y2="591.2" stroke="#222" stroke-width="0.7"/>
<line x1="871.7" y1="581.6" x2="876.0" y2="580.1" stroke="#222" stroke-width="0.7"/>
<line x1="854.1" y1="588.4" x2="855.6" y2="583.8" stroke="#222" stroke-width="0.7"/>
<line x1="851.8" y1="606.0" x2="854.3" y2="601.0" stroke="#222" stroke-width="0.7"/>
<line x1="836.7" y1="556.1" x2="840.1" y2="548.9" stroke="#222" stroke-width="0.7"/>
<line x1="867.8" y1="581.4" x2="873.2" y2="576.7" stroke="#222" stroke-width="0.7"/>
<line x1="829.9" y1="605.4" x2="833.9" y2="602.3" stroke="#222" stroke-width="0.7"/>
<line x1="861.3" y1="578.8" x2="863.2" y2="573.7" stroke="#222" stroke-width="0.7"/>
<line x1="842.6" y1="592.9" x2="846.7" y2="591.2" stroke="#222" stroke-width="0.7"/>
<line x1="834.4" y1="563.8" x2="836.8" y2="558.1" stroke="#222" stroke-width="0.7"/>
<line x1="858.7" y1="558.8" x2="859.9" y2="555.7" stroke="#222" stroke-width="0.7"/>
<line x1="856.1" y1="580.9" x2="860.8" y2="575.9" stroke="#222" stroke-width="0.7"/>
<line x1="863.0" y1="592.3" x2="865.5" y2="589.8" stroke="#222" stroke-width="0.7"/>
<line x1="824.0" y1="575.3" x2="827.8" y2="573.1" stroke="#222" stroke-width="0.7"/>
<line x1="849.0" y1="576.4" x2="854.5" y2="573.7" stroke="#222" stroke-width="0.7"/>
<line x1="861.5" y1="549.4" x2="865.8" y2="546.4" stroke="#222" stroke-width="0.7"/>
<line x1="834.8" y1="569.3" x2="839.0" y2="565.9" stroke="#222" stroke-width="0.7"/>
<line x1="847.6" y1="557.3" x2="851.9" y2="552.1" stroke="#222" stroke-width="0.7"/>
<line x1="846.6" y1="559.3" x2="851.3" y2="557.2" stroke="#222" stroke-width="0.7"/>
<line x1="844.2" y1="559.1" x2="849.2" y2="555.7" stroke="#222" stroke-width="0.7"/>
<line x1="827.0" y1="573.9" x2="831.8" y2="568.5" stroke="#222" stroke-width="0.7"/>
<line x1="859.6" y1="570.1" x2="862.0" y2="567.7" stroke="#222" stroke-width="0.7"/>
<line x1="842.7" y1="591.7" x2="847.5" y2="586.8" stroke="#222" stroke-width="0.7"/>
<line x1="844.2" y1="592.5" x2="850.8" y2="589.6" stroke="#222" stroke-width="0.7"/>
<line x1="873.4" y1="560.8" x2="877.7" y2="559.3" stroke="#222" stroke-width="0.7"/>
<line x1="849.8" y1="570.7" x2="854.5" y2="566.4" stroke="#222" stroke-width="0.7"/>
<line x1="835.9" y1="558.3" x2="840.4" y2="555.0" stroke="#222" stroke-width="0.7"/>
<line x1="857.7" y1="547.5" x2="862.8" y2="541.4" stroke="#222" stroke-width="0.7"/>
<line x1="833.7" y1="594.4" x2="836.7" y2="592.1" stroke="#222" stroke-width="0.7"/>
<line x1="832.9" y1="583.3" x2="836.4" y2="576.6" stroke="#222" stroke-width="0.7"/>
<line x1="857.5" y1="591.2" x2="864.3" y2="587.4" stroke="#222" stroke-width="0.7"/>
<line x1="837.8" y1="562.1" x2="841.6" y2="556.8" stroke="#222" stroke-width="0.7"/>
<line x1="855.7" y1="604.0" x2="859.7" y2="599.8" stroke="#222" stroke-width="0.7"/>
<line x1="874.7" y1="585.0" x2="879.6" y2="580.3" stroke="#222" stroke-width="0.7"/>
<line x1="850.8" y1="573.6" x2="855.3" y2="570.7" stroke="#222" stroke-width="0.7"/>
<line x1="869.5" y1="562.4" x2="873.0" y2="558.5" stroke="#222" stroke-width="0.7"/>
<line x1="841.2" y1="575.7" x2="843.7" y2="573.4" stroke="#222" stroke-width="0.7"/>
<line x1="841.3" y1="546.8" x2="845.5" y2="545.1" stroke="#222" stroke-width="0.7"/>
<line x1="835.6" y1="581.8" x2="839.5" y2="575.3" stroke="#222" stroke-width="0.7"/>
<line x1="858.2" y1="569.1" x2="863.5" y2="565.7" stroke="#222" stroke-width="0.7"/>
<line x1="853.6" y1="603.6" x2="855.6" y2="598.9" stroke="#222" stroke-width="0.7"/>
<line x1="843.8" y1="609.9" x2="847.8" y2="605.5" stroke="#222" stroke-width="0.7"/>
<line x1="842.1" y1="545.6" x2="845.4" y2="538.5" stroke="#222" stroke-width="0.7"/>
<line x1="875.2" y1="552.2" x2="877.1" y2="548.6" stroke="#222" stroke-width="0.7"/>
<line x1="851.3" y1="557.6" x2="854.6" y2="553.9" stroke="#222" stroke-width="0.7"/>
<line x1="842.0" y1="607.5" x2="846.2" y2="605.4" stroke="#222" stroke-width="0.7"/>
<line x1="867.2" y1="569.5" x2="869.6" y2="564.3" stroke="#222" stroke-width="0.7"/>
<line x1="846.2" y1="553.2" x2="848.8" y2="551.3" stroke="#222" stroke-width="0.7"/>
<line x1="877.0" y1="610.7" x2="881.8" y2="608.5" stroke="#222" stroke-width="0.7"/>
<line x1="870.5" y1="585.5" x2="873.5" y2="580.5" stroke="#222" stroke-width="0.7"/>
<line x1="837.5" y1="588.9" x2="839.8" y2="584.5" stroke="#222" stroke-width="0.7"/>
<line x1="832.1" y1="546.1" x2="834.6" y2="544.1" stroke="#222" stroke-width="0.7"/>
<line x1="879.1" y1="551.4" x2="883.9" y2="547.7" stroke="#222" stroke-width="0.7"/>
<line x1="860.4" y1="593.2" x2="864.4" y2="590.7" stroke="#222" stroke-width="0.7"/>
<line x1="850.5" y1="563.7" x2="852.3" y2="558.9" stroke="#222" stroke-width="0.7"/>
<line x1="874.4" y1="575.3" x2="878.9" y2="570.4" stroke="#222" stroke-width="0.7"/>
<line x1="858.8" y1="570.5" x2="864.9" y2="568.0" stroke="#222" stroke-width="0.7"/>
<line x1="862.3" y1="576.7" x2="869.2" y2="574.3" stroke="#222" stroke-width="0.7"/>
<line x1="843.9" y1="594.6" x2="847.7" y2="590.7" stroke="#222" stroke-width="0.7"/>
<line x1="826.3" y1="580.0" x2="832.8" y2="576.8" stroke="#222" stroke-width="0.7"/>
<line x1="840.4" y1="569.3" x2="842.8" y2="566.4" stroke="#222" stroke-width="0.7"/>
<line x1="844.7" y1="604.6" x2="848.0" y2="599.1" stroke="#222" stroke-width="0.7"/>
<line x1="843.6" y1="606.5" x2="848.2" y2="603.8" stroke="#222" stroke-width="0.7"/>
<line x1="852.7" y1="576.3" x2="859.4" y2="573.8" stroke="#222" stroke-width="0.7"/>
<line x1="839.1" y1="569.7" x2="841.7" y2="562.9" stroke="#222" stroke-width="0.7"/>
<line x1="860.5" y1="552.8" x2="864.7" y2="550.7" stroke="#222" stroke-width="0.7"/>
<line x1="821.2" y1="589.1" x2="823.6" y2="583.2" stroke="#222" stroke-width="0.7"/>
<line x1="837.9" y1="596.9" x2="839.2" y2="593.1" stroke="#222" stroke-width="0.7"/>
<line x1="864.9" y1="545.4" x2="869.0" y2="543.5" stroke="#222" stroke-width="0.7"/>
<line x1="847.2" y1="607.9" x2="850.4" y2="605.1" stroke="#222" stroke-width="0.7"/>
<line x1="830.5" y1="587.6" x2="833.9" y2="582.0" stroke="#222" stroke-width="0.7"/>
<line x1="839.3" y1="608.5" x2="842.7" y2="601.8" stroke="#222" stroke-width="0.7"/>
<line x1="847.6" y1="608.7" x2="849.4" y2="603.4" stroke="#222" stroke-width="0.7"/>
<line x1="853.2" y1="581.8" x2="855.9" y2="575.9" stroke="#222" stroke-width="0.7"/>
<line x1="874.5" y1="611.3" x2="877.4" y2="607.7" stroke="#222" stroke-width="0.7"/>
<line x1="839.1" y1="550.8" x2="841.7" y2="548.7" stroke="#222" stroke-width="0.7"/>
<line x1="827.1" y1="608.7" x2="831.2" y2="606.3" stroke="#222" stroke-width="0.7"/>
<line x1="848.6" y1="556.9" x2="851.2" y2="549.5" stroke="#222" stroke-width="0.7"/>
<line x1="846.6" y1="599.7" x2="849.6" y2="598.7" stroke="#222" stroke-width="0.7"/>
<line x1="833.1" y1="586.2" x2="834.3" y2="583.2" stroke="#222" stroke-width="0.7"/>
<line x1="826.8" y1="556.8" x2="831.1" y2="554.7" stroke="#222" stroke-width="0.7"/>
<line x1="849.6" y1="547.8" x2="851.1" y2="543.5" stroke="#222" stroke-width="0.7"/>
<line x1="857.6" y1="578.6" x2="862.1" y2="572.6" stroke="#222" stroke-width="0.7"/>
<line x1="878.6" y1="609.4" x2="880.8" y2="606.1" stroke="#222" stroke-width="0.7"/>
<line x1="831.1" y1="601.5" x2="834.5" y2="600.3" stroke="#222" stroke-width="0.7"/>
<line x1="869.4" y1="562.9" x2="874.4" y2="558.8" stroke="#222" stroke-width="0.7"/>
<line x1="862.8" y1="558.9" x2="868.9" y2="555.8" stroke="#222" stroke-width="0.7"/>
<line x1="828.3" y1="572.7" x2="831.4" y2="569.0" stroke="#222" stroke-width="0.7"/>
<line x1="825.5" y1="586.5" x2="831.4" y2="583.4" stroke="#222" stroke-width="0.7"/>
<line x1="835.9" y1="581.7" x2="841.4" y2="579.1" stroke="#222" stroke-width="0.7"/>
<line x1="854.1" y1="557.6" x2="858.5" y2="552.6" stroke="#222" stroke-width="0.7"/>
<line x1="820.7" y1="590.7" x2="822.7" y2="588.0" stroke="#222" stroke-width="0.7"/>
<line x1="831.7" y1="559.1" x2="835.6" y2="557.7" stroke="#222" stroke-width="0.7"/>
<line x1="860.6" y1="568.6" x2="865.0" y2="563.4" stroke="#222" stroke-width="0.7"/>
<line x1="879.3" y1="576.1" x2="884.8" y2="573.4" stroke="#222" stroke-width="0.7"/>
<line x1="834.8" y1="611.7" x2="837.3" y2="608.2" stroke="#222" stroke-width="0.7"/>
<line x1="851.0" y1="587.7" x2="855.3" y2="584.9" stroke="#222" stroke-width="0.7"/>
<line x1="829.0" y1="562.3" x2="831.1" y2="559.1" stroke="#222" stroke-width="0.7"/>
<line x1="859.3" y1="582.8" x2="860.3" y2="579.6" stroke="#222" stroke-width="0.7"/>
<line x1="823.6" y1="591.3" x2="830.3" y2="587.0" stroke="#222" stroke-width="0.7"/>
<line x1="831.5" y1="567.9" x2="836.6" y2="565.3" stroke="#222" stroke-width="0.7"/>
<line x1="821.8" y1="582.7" x2="828.3" y2="578.1" stroke="#222" stroke-width="0.7"/>
<line x1="845.7" y1="565.0" x2="849.5" y2="562.5" stroke="#222" stroke-width="0.7"/>
<line x1="821.3" y1="597.8" x2="827.9" y2="593.5" stroke="#222" stroke-width="0.7"/>
<line x1="852.6" y1="549.6" x2="854.7" y2="545.8" stroke="#222" stroke-width="0.7"/>
<line x1="861.4" y1="611.1" x2="865.2" y2="609.8" stroke="#222" stroke-width="0.7"/>
<line x1="867.3" y1="581.4" x2="870.8" y2="580.1" stroke="#222" stroke-width="0.7"/>
<line x1="869.3" y1="596.9" x2="873.4" y2="591.1" stroke="#222" stroke-width="0.7"/>
<line x1="855.3" y1="611.5" x2="858.6" y2="609.6" stroke="#222" stroke-width="0.7"/>
<line x1="841.1" y1="568.4" x2="844.1" y2="561.1" stroke="#222" stroke-width="0.7"/>
<line x1="831.0" y1="591.7" x2="834.3" y2="588.5" stroke="#222" stroke-width="0.7"/>
<line x1="866.8" y1="559.7" x2="868.5" y2="556.8" stroke="#222" stroke-width="0.7"/>
<line x1="826.4" y1="599.0" x2="832.2" y2="595.5" stroke="#222" stroke-width="0.7"/>
<line x1="822.8" y1="591.4" x2="826.2" y2="586.2" stroke="#222" stroke-width="0.7"/>
<line x1="835.6" y1="574.4" x2="837.8" y2="567.8" stroke="#222" stroke-width="0.7"/>
<line x1="861.5" y1="550.6" x2="863.9" y2="544.5" stroke="#222" stroke-width="0.7"/>
<line x1="858.6" y1="610.5" x2="862.0" y2="607.8" stroke="#222" stroke-width="0.7"/>
<line x1="853.0" y1="589.0" x2="856.0" y2="586.5" stroke="#222" stroke-width="0.7"/>
<line x1="857.2" y1="567.1" x2="860.8" y2="565.8" stroke="#222" stroke-width="0.7"/>
<line x1="825.1" y1="559.1" x2="826.0" y2="556.1" stroke="#222" stroke-width="0.7"/>
<line x1="819.5" y1="582.5" x2="824.3" y2="577.0" stroke="#222" stroke-width="0.7"/>
<line x1="827.2" y1="609.9" x2="830.2" y2="607.0" stroke="#222" stroke-width="0.7"/>
<line x1="830.4" y1="563.8" x2="833.4" y2="561.9" stroke="#222" stroke-width="0.7"/>
<line x1="823.2" y1="606.0" x2="829.0" y2="600.6" stroke="#222" stroke-width="0.7"/>
<line x1="819.8" y1="597.6" x2="824.2" y2="594.6" stroke="#222" stroke-width="0.7"/>
<line x1="862.0" y1="583.2" x2="866.0" y2="581.6" stroke="#222" stroke-width="0.7"/>
<line x1="822.3" y1="588.4" x2="826.1" y2="583.6" stroke="#222" stroke-width="0.7"/>
<line x1="849.2" y1="564.0" x2="851.9" y2="562.2" stroke="#222" stroke-width="0.7"/>
<line x1="833.8" y1="606.8" x2="836.0" y2="603.1" stroke="#222" stroke-width="0.7"/>
<line x1="840.6" y1="579.1" x2="844.0" y2="575.5" stroke="#222" stroke-width="0.7"/>
<line x1="826.0" y1="577.1" x2="828.7" y2="570.1" stroke="#222" stroke-width="0.7"/>
<line x1="846.1" y1="564.8" x2="849.2" y2="563.4" stroke="#222" stroke-width="0.7"/>
<line x1="868.6" y1="594.9" x2="874.3" y2="591.9" stroke="#222" stroke-width="0.7"/>
<line x1="852.2" y1="574.7" x2="857.7" y2="569.4" stroke="#222" stroke-width="0.7"/>
<line x1="841.4" y1="581.1" x2="843.2" y2="576.4" stroke="#222" stroke-width="0.7"/>
<line x1="841.4" y1="566.3" x2="844.6" y2="561.6" stroke="#222" stroke-width="0.7"/>
<line x1="860.0" y1="545.4" x2="863.8" y2="539.5" stroke="#222" stroke-width="0.7"/>
<line x1="832.8" y1="607.1" x2="835.2" y2="603.9" stroke="#222" stroke-width="0.7"/>
<line x1="830.5" y1="559.6" x2="833.3" y2="552.4" stroke="#222" stroke-width="0.7"/>
<line x1="879.9" y1="578.5" x2="881.1" y2="575.7" stroke="#222" stroke-width="0.7"/>
<line x1="859.3" y1="545.8" x2="863.3" y2="540.7" stroke="#222" stroke-width="0.7"/>
<line x1="840.9" y1="557.0" x2="843.2" y2="551.8" stroke="#222" stroke-width="0.7"/>
<line x1="832.4" y1="554.9" x2="838.8" y2="550.5" stroke="#222" stroke-width="0.7"/>
<line x1="835.6" y1="560.3" x2="837.0" y2="556.0" stroke="#222" stroke-width="0.7"/>
<line x1="868.1" y1="577.3" x2="872.5" y2="571.1" stroke="#222" stroke-width="0.7"/>
<line x1="878.2" y1="552.5" x2="882.2" y2="551.1" stroke="#222" stroke-width="0.7"/>
<line x1="826.9" y1="555.2" x2="829.3" y2="550.3" stroke="#222" stroke-width="0.7"/>
<line x1="852.5" y1="595.1" x2="856.3" y2="593.6" stroke="#222" stroke-width="0.7"/>
<line x1="838.7" y1="584.0" x2="843.2" y2="580.9" stroke="#222" stroke-width="0.7"/>
<line x1="875.7" y1="548.3" x2="879.0" y2="544.6" stroke="#222" stroke-width="0.7"/>
<line x1="858.6" y1="567.1" x2="860.4" y2="561.0" stroke="#222" stroke-width="0.7"/>
<line x1="853.4" y1="561.9" x2="857.4" y2="558.7" stroke="#222" stroke-width="0.7"/>
<line x1="844.3" y1="558.8" x2="849.5" y2="556.8" stroke="#222" stroke-width="0.7"/>
<line x1="836.5" y1="581.7" x2="840.6" y2="578.4" stroke="#222" stroke-width="0.7"/>
<line x1="875.3" y1="596.3" x2="882.4" y2="592.8" stroke="#222" stroke-width="0.7"/>
<line x1="819.1" y1="589.6" x2="822.3" y2="584.8" stroke="#222" stroke-width="0.7"/>
<line x1="863.5" y1="581.6" x2="869.1" y2="578.9" stroke="#222" stroke-width="0.7"/>
<line x1="823.2" y1="582.7" x2="829.3" y2="580.2" stroke="#222" stroke-width="0.7"/>
<line x1="873.3" y1="609.7" x2="876.5" y2="605.7" stroke="#222" stroke-width="0.7"/>
<line x1="855.7" y1="567.6" x2="859.4" y2="563.5" stroke="#222" stroke-width="0.7"/>
<line x1="862.3" y1="601.0" x2="863.9" y2="598.5" stroke="#222" stroke-width="0.7"/>
<line x1="849.9" y1="550.2" x2="853.6" y2="543.8" stroke="#222" stroke-width="0.7"/>
<line x1="840.9" y1="577.5" x2="844.2" y2="576.0" stroke="#222" stroke-width="0.7"/>
<line x1="828.0" y1="564.4" x2="829.2" y2="560.4" stroke="#222" stroke-width="0.7"/>
<line x1="878.1" y1="583.9" x2="879.3" y2="579.8" stroke="#222" stroke-width="0.7"/>
<path d="M815 650 Q813 640 819 636 Q825 633 829 638 L832 648 L829 656 L828 668 M823 656 L821 668" stroke="#333" stroke-width="1.6" fill="none"/>
<path d="M829 642 Q834 638 838 644 L841 654 L839 666 M834 656 L833 666" stroke="#333" stroke-width="1.5" fill="none"/>
<circle cx="816.5" cy="642" r="3.6" fill="#222"/><circle cx="822.5" cy="632.5" r="2.6" fill="#444"/><circle cx="832" cy="640" r="3.4" fill="#2a2a2a"/><circle cx="837" cy="646" r="2.6" fill="#333"/>
<line x1="878.0" y1="600.0" x2="878.0" y2="662.0" stroke="#555" stroke-width="0.9"/>
<line x1="884.0" y1="600.0" x2="884.0" y2="662.0" stroke="#555" stroke-width="0.9"/>
<line x1="890.0" y1="600.0" x2="890.0" y2="662.0" stroke="#555" stroke-width="0.9"/>
<line x1="896.0" y1="600.0" x2="896.0" y2="662.0" stroke="#555" stroke-width="0.9"/>
<line x1="878.0" y1="600.0" x2="905.0" y2="585.0" stroke="#444" stroke-width="1"/>
<line x1="878.0" y1="662.0" x2="905.0" y2="682.0" stroke="#444" stroke-width="1"/>
</g>
<rect x="397.6" y="317.6" width="895.5" height="413.6" fill="none" stroke="#4ccdf9" stroke-width="3"/>
<circle cx="397.6" cy="317.6" r="9" fill="#00c0fe"/><circle cx="1293.1" cy="317.6" r="9" fill="#00c0fe"/>
<circle cx="397.6" cy="731.2" r="9" fill="#00c0fe"/><circle cx="1293.1" cy="731.2" r="9" fill="#00c0fe"/>
</svg>

<!-- toolbar -->
<div class="abs" style="left:324px;top:222px;width:1043px;height:59.5px;background:#262626;border:1.5px solid #434343;border-radius:17px;box-sizing:border-box;box-shadow:0 2px 7px rgba(0,0,0,.35)"></div>
<div class="abs" style="left:325.5px;top:223.5px;width:58px;height:56.5px;background:radial-gradient(circle at 28.5px 28.5px,rgba(125,112,140,.6) 0,rgba(108,98,124,.42) 12px,rgba(82,76,96,.22) 22px,rgba(38,38,38,0) 32px);border-radius:15.5px 0 0 15.5px"></div>
<svg class="abs" style="left:336px;top:234px" width="36" height="34" viewBox="0 0 36 34">
<defs><linearGradient id="gai" x1="0" y1="1" x2="1" y2="0"><stop offset="0" stop-color="#f4b8ec"/><stop offset="1" stop-color="#b8b8f8"/></linearGradient></defs>
<path d="M16 9.8 H8.2 a2.2 2.2 0 0 0 -2.2 2.2 V29 L9 25.9 H23.4 a2.2 2.2 0 0 0 2.2 -2.2 V21" fill="none" stroke="url(#gai)" stroke-width="2.6" stroke-linecap="round" stroke-linejoin="round"/>
<path d="M26.5 3.4 Q27.8 8.6 33 9.9 Q27.8 11.2 26.5 16.4 Q25.2 11.2 20 9.9 Q25.2 8.6 26.5 3.4 Z" fill="#dcc4f8"/>
</svg>
<div class="abs" style="left:383.7px;top:233.6px;width:1.5px;height:35.4px;background:#424242"></div>
<div class="abs" style="left:397.3px;top:233.5px;width:194px;height:35.8px;background:#5e4f5e;border-radius:8px"></div>
<svg class="abs" style="left:406px;top:236.8px" width="32" height="30" viewBox="0 0 32 30">
<g fill="none" stroke="#f2b6f0" stroke-width="1.5" stroke-linejoin="round">
<path d="M4.7 26.7 V5.3 a1 1 0 0 1 1 -1 H13.8 a1 1 0 0 1 1 1 V26.7 Z"/>
<path d="M9.7 4.3 V26.7 M4.7 9.5 H14.8 M4.7 14.7 H14.8 M4.7 19.9 H14.8"/>
<path d="M14.8 9.6 H26.2 a1 1 0 0 1 1 1 V25.7 a1 1 0 0 1 -1 1 H14.8"/>
<path d="M14.8 15.2 H17.8 M14.8 20.4 H17.8"/>
</g>
<circle cx="21.7" cy="15.3" r="0.9" fill="#f2b6f0"/><circle cx="21.7" cy="20.4" r="0.9" fill="#f2b6f0"/>
</svg>
<div class="t" style="left:445px;top:242.8px;font-size:20.8px;color:#f0b6ee;-webkit-text-stroke:0.3px #f0b6ee;">Render design</div>
<svg class="abs" style="left:612px;top:237px" width="30" height="30" viewBox="0 0 30 30">
<rect x="4" y="3.8" width="22.7" height="22.6" rx="2.6" fill="none" stroke="#dedede" stroke-width="2"/>
<path d="M12.1 16.3 L18.3 10.1 M12.2 20.6 L22.6 10.2 M16.5 20.5 L22.4 14.6" stroke="#dedede" stroke-width="1.8" stroke-linecap="round"/>
<circle cx="12.7" cy="10.3" r="1" fill="#dedede"/><circle cx="21.8" cy="19.6" r="1" fill="#dedede"/>
</svg>
<div class="t w" style="left:650.8px;top:242.8px;font-size:20.7px;-webkit-text-stroke:0.3px #f2f2f2;">Edit Material</div>
<svg class="abs" style="left:800px;top:239px" width="27" height="26" viewBox="0 0 27 26">
<g fill="#f2f2f2">
<circle cx="6.3" cy="2.7" r="2.1"/><circle cx="20.6" cy="2.7" r="2.1"/><circle cx="13.4" cy="4.8" r="2.1"/>
<path d="M2.2 6.6 H9.2 Q7.8 8 7.8 10 V21 H4.3 V14.3 H2.2 Z"/>
<path d="M24.6 6.6 H17.6 Q19 8 19 10 V21 H22.5 V14.3 H24.6 Z"/>
<path d="M9.3 8.8 H17.5 V16.5 H15.6 V24.6 H11.2 V16.5 H9.3 Z"/>
</g></svg>
<div class="t w" style="left:836.3px;top:242.9px;font-size:20.6px;-webkit-text-stroke:0.3px #f2f2f2;">Populate</div>
<svg class="abs" style="left:950px;top:236px" width="34" height="30" viewBox="0 0 34 30">
<path d="M10.6 7.6 L21.8 3.6 L29 21.6 L17.4 25.8 Z" fill="none" stroke="#e8e8e8" stroke-width="1.8" stroke-linejoin="round"/>
<circle cx="15.4" cy="9.8" r="1.2" fill="#eee"/>
<path d="M6.2 18.8 Q3.6 22.4 5.4 25.6 M10.4 20 Q10.4 24 12.6 27.6" fill="none" stroke="#d8d8d8" stroke-width="1.5" stroke-linecap="round"/>
</svg>
<div class="t w" style="left:989.8px;top:242.9px;font-size:20.6px;-webkit-text-stroke:0.3px #f2f2f2;">Generate style</div>
<div class="abs" style="left:1148.5px;top:233.5px;width:1.5px;height:35px;background:#424242"></div>
<svg class="abs" style="left:1164px;top:235px" width="32" height="32" viewBox="0 0 32 32">
<path d="M16 6.8 H6.9 a2.5 2.5 0 0 0 -2.5 2.5 V25.3 a2.5 2.5 0 0 0 2.5 2.5 H22.9 a2.5 2.5 0 0 0 2.5 -2.5 V16.2" fill="none" stroke="#e6e6e6" stroke-width="1.9" stroke-linecap="round"/>
<path d="M8 22.6 L10.8 18.8 L14 21 L18 17 L22.4 22.6 Z" fill="#f2f2f2"/>
<path d="M23.20 2.80 L24.61 6.26 L28.34 6.53 L25.48 8.94 L26.37 12.57 L23.20 10.60 L20.03 12.57 L20.92 8.94 L18.06 6.53 L21.79 6.26 Z" fill="#fafafa"/>
<path d="M18.6 1.6 L19.6 2.8 M28.4 1.6 L27.4 2.8 M17 11.4 L18.4 11 M29.6 11.4 L28.2 11" stroke="#c8c8c8" stroke-width="1.1" stroke-linecap="round"/>
</svg>
<svg class="abs" style="left:1212px;top:236px" width="32" height="30" viewBox="0 0 32 30">
<g fill="none" stroke="#e6e6e6" stroke-width="1.9" stroke-linecap="round">
<path d="M4 8.5 V6.6 a2.6 2.6 0 0 1 2.6 -2.6 H7.5 M12.5 4 H15.3 M27 20 V17.3 M27 11.5 V12 M22.5 27 H24.4 a2.6 2.6 0 0 0 2.6 -2.6 V23.6"/>
<path d="M21 11.2 L26.8 5.4 M21.6 5 H27 V10.3"/>
<rect x="4" y="14.3" width="13.8" height="13" rx="2.5"/>
<path d="M6 27 L11.5 20.8 L17.5 26.5"/>
</g></svg>
<svg class="abs" style="left:1262px;top:237px" width="28" height="28" viewBox="0 0 28 28">
<g fill="none" stroke="#e6e6e6" stroke-width="2" stroke-linecap="round" stroke-linejoin="round">
<path d="M13.4 3 V19 M7.3 13.1 L13.4 19.2 L19.5 13.1 M2.7 16 V21.8 a2.8 2.8 0 0 0 2.8 2.8 H21.7 a2.8 2.8 0 0 0 2.8 -2.8 V16"/>
</g></svg>
<div class="abs" style="left:1305.5px;top:233.5px;width:1.5px;height:35px;background:#424242"></div>
<svg class="abs" style="left:1331px;top:238px" width="12" height="27" viewBox="0 0 12 27"><circle cx="5.8" cy="4.7" r="2.4" fill="#f2f2f2"/><circle cx="5.8" cy="13.5" r="2.4" fill="#f2f2f2"/><circle cx="5.8" cy="22.1" r="2.4" fill="#f2f2f2"/></svg>

<!-- top right bar -->
<div class="abs" style="left:1783.5px;top:-1px;width:263px;height:71px;background:#262626;border:1.5px solid #3f3f3f;border-radius:19px;box-sizing:border-box;box-shadow:0 2px 6px rgba(0,0,0,.35)"></div>
<div class="abs" style="left:1801px;top:10px;width:71px;height:48px;background:#333;border-radius:24px"></div>
<div class="abs" style="left:1808.6px;top:17.8px;width:32.8px;height:32.8px;background:#e9427c;border:2px solid #5ee26a;border-radius:50%;box-sizing:border-box"></div>
<div class="t" style="left:1808.6px;width:32.8px;text-align:center;top:27.8px;font-size:14.5px;color:#fbe4ee;">B</div>
<svg class="abs" style="left:1851px;top:29px" width="14" height="10" viewBox="0 0 14 10"><path d="M2.2 2.3 L6.8 6.9 L11.4 2.3" fill="none" stroke="#eee" stroke-width="1.6" stroke-linecap="round" stroke-linejoin="round"/></svg>
<div class="abs" style="left:1891px;top:10px;width:1.5px;height:48px;background:#3a3a3a"></div>
<div class="abs" style="left:1910px;top:10px;width:120px;height:48px;background:#454545;border-radius:9px"></div>
<svg class="abs" style="left:1922px;top:22px" width="24" height="24" viewBox="0 0 24 24"><path d="M12 2.4 V13.8 M7.4 6.8 L12 2.2 L16.6 6.8 M3.5 12.6 V21 a1.5 1.5 0 0 0 1.5 1.5 H19 a1.5 1.5 0 0 0 1.5 -1.5 V12.6" fill="none" stroke="#eee" stroke-width="1.6" stroke-linecap="round" stroke-linejoin="round"/></svg>
<div class="t w" style="left:1958px;top:25.6px;font-size:20px;-webkit-text-stroke:0.6px #f2f2f2;">Share</div>



<!-- prompt ideas popup -->
<div class="abs" style="left:1349.5px;top:100px;width:195px;height:122px;background:#262626;box-shadow:0 0 4px rgba(0,0,0,.3)"></div>
<div class="abs" style="left:1503px;top:128px;width:31px;height:14px;background:#2b2b2b;border-radius:3px"></div>
<div class="t" style="left:1507.5px;top:131.5px;font-size:8px;color:#666;">Reset</div>
<div class="abs" style="left:1490px;top:150.5px;width:44px;height:1.2px;background:#3e3e3e"></div>
<div class="t" style="left:1488px;top:172.5px;font-size:7.5px;color:#d8d8d8;">etting.</div>
<div class="abs" style="left:1490px;top:199px;width:46px;height:1.2px;background:#3e3e3e"></div>
<div class="abs" style="left:1521.3px;top:205px;width:14.7px;height:14.6px;background:#6b5570;border-radius:2.5px"></div>
<svg class="abs" style="left:1522px;top:205.5px" width="14" height="14" viewBox="0 0 14 14"><path d="M5.6 9.5 V8.7 C5.6 7.7 3.6 6.8 3.6 4.6 A3.4 3.4 0 0 1 10.4 4.6 C10.4 6.8 8.4 7.7 8.4 8.7 V9.5 Z M5.8 11.6 H8.2" fill="none" stroke="#f0b8f0" stroke-width="0.9" stroke-linecap="round"/></svg>
<div class="abs" style="left:1344.7px;top:103.3px;width:145px;height:118.4px;background:radial-gradient(ellipse at 45% 45%,#2d2c2a 0,#282828 55%,#272727 100%);border:1px solid #363636;border-radius:6px;box-sizing:border-box;overflow:hidden">
</div>
<div class="t" style="left:1351px;top:112.1px;font-size:8.6px;color:#f0f0f0;-webkit-text-stroke:0.25px #f0f0f0;">Prompt ideas</div>
<svg class="abs" style="left:1470px;top:110.5px" width="11" height="11" viewBox="0 0 11 11"><path d="M2 2 L9 9 M9 2 L2 9" stroke="#e0e0e0" stroke-width="0.9"/></svg>
<div class="abs" style="left:1479px;top:130px;width:3.8px;height:31px;background:#8a8a8a;border-radius:2px"></div>
<div class="abs" style="left:1352px;top:128.9px;width:45.7px;height:12.4px;background:#6a5670;border-radius:6.2px"></div>
<div class="t" style="left:1352px;width:45.7px;text-align:center;top:131.2px;font-size:7.4px;color:#ececec;-webkit-text-stroke:0.15px #ececec;">Cyberpunk</div>
<div class="abs" style="left:1402.9px;top:128.9px;width:44.5px;height:12.4px;background:#424242;border-radius:6.2px"></div>
<div class="t" style="left:1402.9px;width:44.5px;text-align:center;top:131.2px;font-size:7.4px;color:#ececec;-webkit-text-stroke:0.15px #ececec;">Watercolor</div>
<div class="abs" style="left:1352px;top:146.2px;width:66.6px;height:12.4px;background:#424242;border-radius:6.2px"></div>
<div class="t" style="left:1352px;width:66.6px;text-align:center;top:148.5px;font-size:7.4px;color:#ececec;-webkit-text-stroke:0.15px #ececec;">Classical painting</div>
<div class="abs" style="left:1423.9px;top:146.2px;width:42.7px;height:12.4px;background:#424242;border-radius:6.2px"></div>
<div class="t" style="left:1423.9px;width:42.7px;text-align:center;top:148.5px;font-size:7.4px;color:#ececec;-webkit-text-stroke:0.15px #ececec;">Illustration</div>
<div class="abs" style="left:1352px;top:163.3px;width:75.4px;height:12.4px;background:#424242;border-radius:6.2px"></div>
<div class="t" style="left:1352px;width:75.4px;text-align:center;top:165.6px;font-size:7.4px;color:#ececec;-webkit-text-stroke:0.15px #ececec;">Interior Photography</div>
<div class="abs" style="left:1432.7px;top:163.3px;width:36.1px;height:12.4px;background:#424242;border-radius:6.2px"></div>
<div class="t" style="left:1432.7px;width:36.1px;text-align:center;top:165.6px;font-size:7.4px;color:#ececec;-webkit-text-stroke:0.15px #ececec;">Detailed</div>
<div class="abs" style="left:1352px;top:180.5px;width:49.5px;height:12.4px;background:#424242;border-radius:6.2px"></div>
<div class="t" style="left:1352px;width:49.5px;text-align:center;top:182.8px;font-size:7.4px;color:#ececec;-webkit-text-stroke:0.15px #ececec;">Countryside</div>
<div class="abs" style="left:1406.8px;top:180.5px;width:23.8px;height:12.4px;background:#424242;border-radius:6.2px"></div>
<div class="t" style="left:1406.8px;width:23.8px;text-align:center;top:182.8px;font-size:7.4px;color:#ececec;-webkit-text-stroke:0.15px #ececec;">Dark</div>
<div class="abs" style="left:1352px;top:197.6px;width:92.9px;height:12.4px;background:#424242;border-radius:6.2px"></div>
<div class="t" style="left:1352px;width:92.9px;text-align:center;top:199.9px;font-size:7.4px;color:#ececec;-webkit-text-stroke:0.15px #ececec;">Architecture Photography</div>
<div class="abs" style="left:1356px;top:215.5px;width:20px;height:1.5px;background:#444;border-radius:1px"></div>
<div class="abs" style="left:1386px;top:215.5px;width:40px;height:1.5px;background:#444;border-radius:1px"></div>
<div class="abs" style="left:1436px;top:215.5px;width:32px;height:1.5px;background:#444;border-radius:1px"></div>

<!-- right panel -->
<div class="abs" style="left:1568.8px;top:88.3px;width:479px;height:804.5px;background:#262626;border:1.5px solid #464646;border-radius:19px;box-sizing:border-box;box-shadow:0 2px 8px rgba(0,0,0,.3)"></div>
<div class="t w" style="left:1586.6px;top:108.8px;font-size:22.3px;-webkit-text-stroke:0.3px #f2f2f2;">Render design</div>
<div class="div" style="left:1587px;top:146.5px;width:443px;"></div>
<div class="t w" style="left:1589.6px;top:171.9px;font-size:20.8px;-webkit-text-stroke:0.3px #f2f2f2;">Image reference</div>
<svg class="abs" style="left:1590px;top:210px" width="438" height="166" viewBox="0 0 438 166"><rect x="1.2" y="1.2" width="435.6" height="163.6" rx="6" fill="none" stroke="#6c6c6c" stroke-width="1.3" stroke-dasharray="4.6 3.2"/></svg>
<div class="t w" style="left:1591px;width:436px;text-align:center;top:233.2px;font-size:20.4px;letter-spacing:0.15px;-webkit-text-stroke:0.6px #f2f2f2;">Drag media here or click to upload</div>
<div class="t g" style="left:1591px;width:436px;text-align:center;top:276.4px;font-size:19.6px;-webkit-text-stroke:0.3px #9a9a9a;">PNG, JPG &bull; Max 10MB</div>
<div class="t g" style="left:1591px;width:436px;text-align:center;top:306.5px;font-size:19.6px;letter-spacing:0.36px;-webkit-text-stroke:0.3px #9a9a9a;">e.g. CAD Screenshot, physical model,</div>
<div class="t g" style="left:1591px;width:436px;text-align:center;top:336.4px;font-size:19.6px;letter-spacing:0.57px;-webkit-text-stroke:0.3px #9a9a9a;">simple render, sketch</div>
<div class="div" style="left:1591px;top:393.5px;width:436px;"></div>
<div class="t w" style="left:1589.6px;top:416.2px;font-size:21.3px;-webkit-text-stroke:0.6px #f2f2f2;">Description</div>
<svg class="abs" style="left:1996px;top:410.6px" width="26" height="32" viewBox="0 0 26 32"><path d="M8.8 18.2 A8.5 8.5 0 1 1 16.8 18.2 Q16.8 18.6 16.8 19.5 V21 a2 2 0 0 1 -2 2 H10.8 a2 2 0 0 1 -2 -2 V19.5 Q8.8 18.6 8.8 18.2 Z M9.4 28.2 H16.4" fill="none" stroke="#e4e4e4" stroke-width="1.6" stroke-linecap="round" stroke-linejoin="round"/></svg>
<div class="t w" style="left:1590.5px;top:459px;font-size:17.8px;-webkit-text-stroke:0.55px #f2f2f2;">Recommended prompt formula</div>
<svg class="abs" style="left:1843.5px;top:459.5px" width="16" height="16" viewBox="0 0 16 16"><circle cx="8" cy="8" r="6.6" fill="none" stroke="#e8e8e8" stroke-width="1.3"/><path d="M8 7 V11.5" stroke="#e8e8e8" stroke-width="1.4"/><circle cx="8" cy="4.8" r="0.9" fill="#e8e8e8"/></svg>
<div class="t w" style="left:1590.5px;top:490px;font-size:17.15px;-webkit-text-stroke:0.3px #f2f2f2;">[Main Subject] , [Context &amp; Key Features] ,</div>
<div class="t w" style="left:1590.5px;top:516.8px;font-size:17.2px;-webkit-text-stroke:0.3px #f2f2f2;">[Atmosphere &amp; Lighting] , [Style] , [Extra Keywords]</div>
<div class="abs" style="left:1590.5px;top:550px;width:436px;height:134px;background:#333;border:1px solid #3e3e3e;border-radius:6px;box-sizing:border-box"></div>
<div class="t g" style="left:1603px;top:563.5px;font-size:20.5px;-webkit-text-stroke:0.3px #9a9a9a;">Enter a description...</div>
<svg class="abs" style="left:2014px;top:671px" width="12" height="12" viewBox="0 0 12 12"><path d="M1.5 10.5 L10.6 2.3 M7 10.5 L10.6 7" stroke="#8a8a8a" stroke-width="1.3"/></svg>
<div class="abs" style="left:1590.5px;top:703px;width:178px;height:29px;background:#2e2e2e;border-radius:6px"></div>
<svg class="abs" style="left:1598px;top:707px" width="22" height="20" viewBox="0 0 22 20"><path d="M2.8 8.4 H10 M2.8 12.3 H13.5 M2.8 16.1 H13.5" stroke="#7a7a7a" stroke-width="1.9" stroke-linecap="round"/><path d="M15.5 2.1 Q16.2 4.9 19 5.6 Q16.2 6.3 15.5 9.1 Q14.8 6.3 12 5.6 Q14.8 4.9 15.5 2.1 Z" fill="#7a7a7a"/></svg>
<div class="t" style="left:1625.6px;top:709.4px;font-size:17.5px;letter-spacing:0.3px;color:#7a7a7a;-webkit-text-stroke:0.35px #7a7a7a;">Enhance prompt</div>
<div class="div" style="left:1590px;top:750px;width:437px;"></div>
<div class="t w" style="left:1590px;top:772.1px;font-size:21px;-webkit-text-stroke:0.6px #f2f2f2;">Design Adherence</div>
<div class="t g" style="left:1773px;top:772.4px;font-size:20.8px;-webkit-text-stroke:0.35px #9a9a9a;">Balanced</div>
<svg class="abs" style="left:1997px;top:770px" width="24" height="24" viewBox="0 0 24 24"><path d="M6.8 3 V12 M3.2 16 H10.7 M6.8 16 V20.5 M17.4 3 V6.6 M13.6 7.6 H21.1 M17.4 11.6 V20.5" stroke="#e8e8e8" stroke-width="1.7" stroke-linecap="butt"/></svg>
<div class="div" style="left:1587.4px;top:814.3px;width:442.5px;"></div>
<div class="abs" style="left:1587px;top:839px;width:443px;height:35.6px;background:#2e2e2e;border-radius:5.5px"></div>
<div class="t" style="left:1587.4px;width:442.5px;text-align:center;top:847.6px;font-size:20.5px;color:#7a7a7a;-webkit-text-stroke:0.3px #7a7a7a;">Generate</div>
<!-- annotation -->
<svg class="abs" style="left:0;top:0" width="2048" height="999" viewBox="0 0 2048 999"><g stroke="#fff" stroke-width="3.6" stroke-linecap="round" fill="none"><path d="M1485 785 L1595 726"/><path d="M1580 723.5 L1595 726 L1588.5 739"/></g></svg>
<div class="t" style="left:1305.8px;top:793.4px;font-size:21.5px;letter-spacing:0.88px;color:#fafafa;">Prompt Enhancer</div>

</body></html>
